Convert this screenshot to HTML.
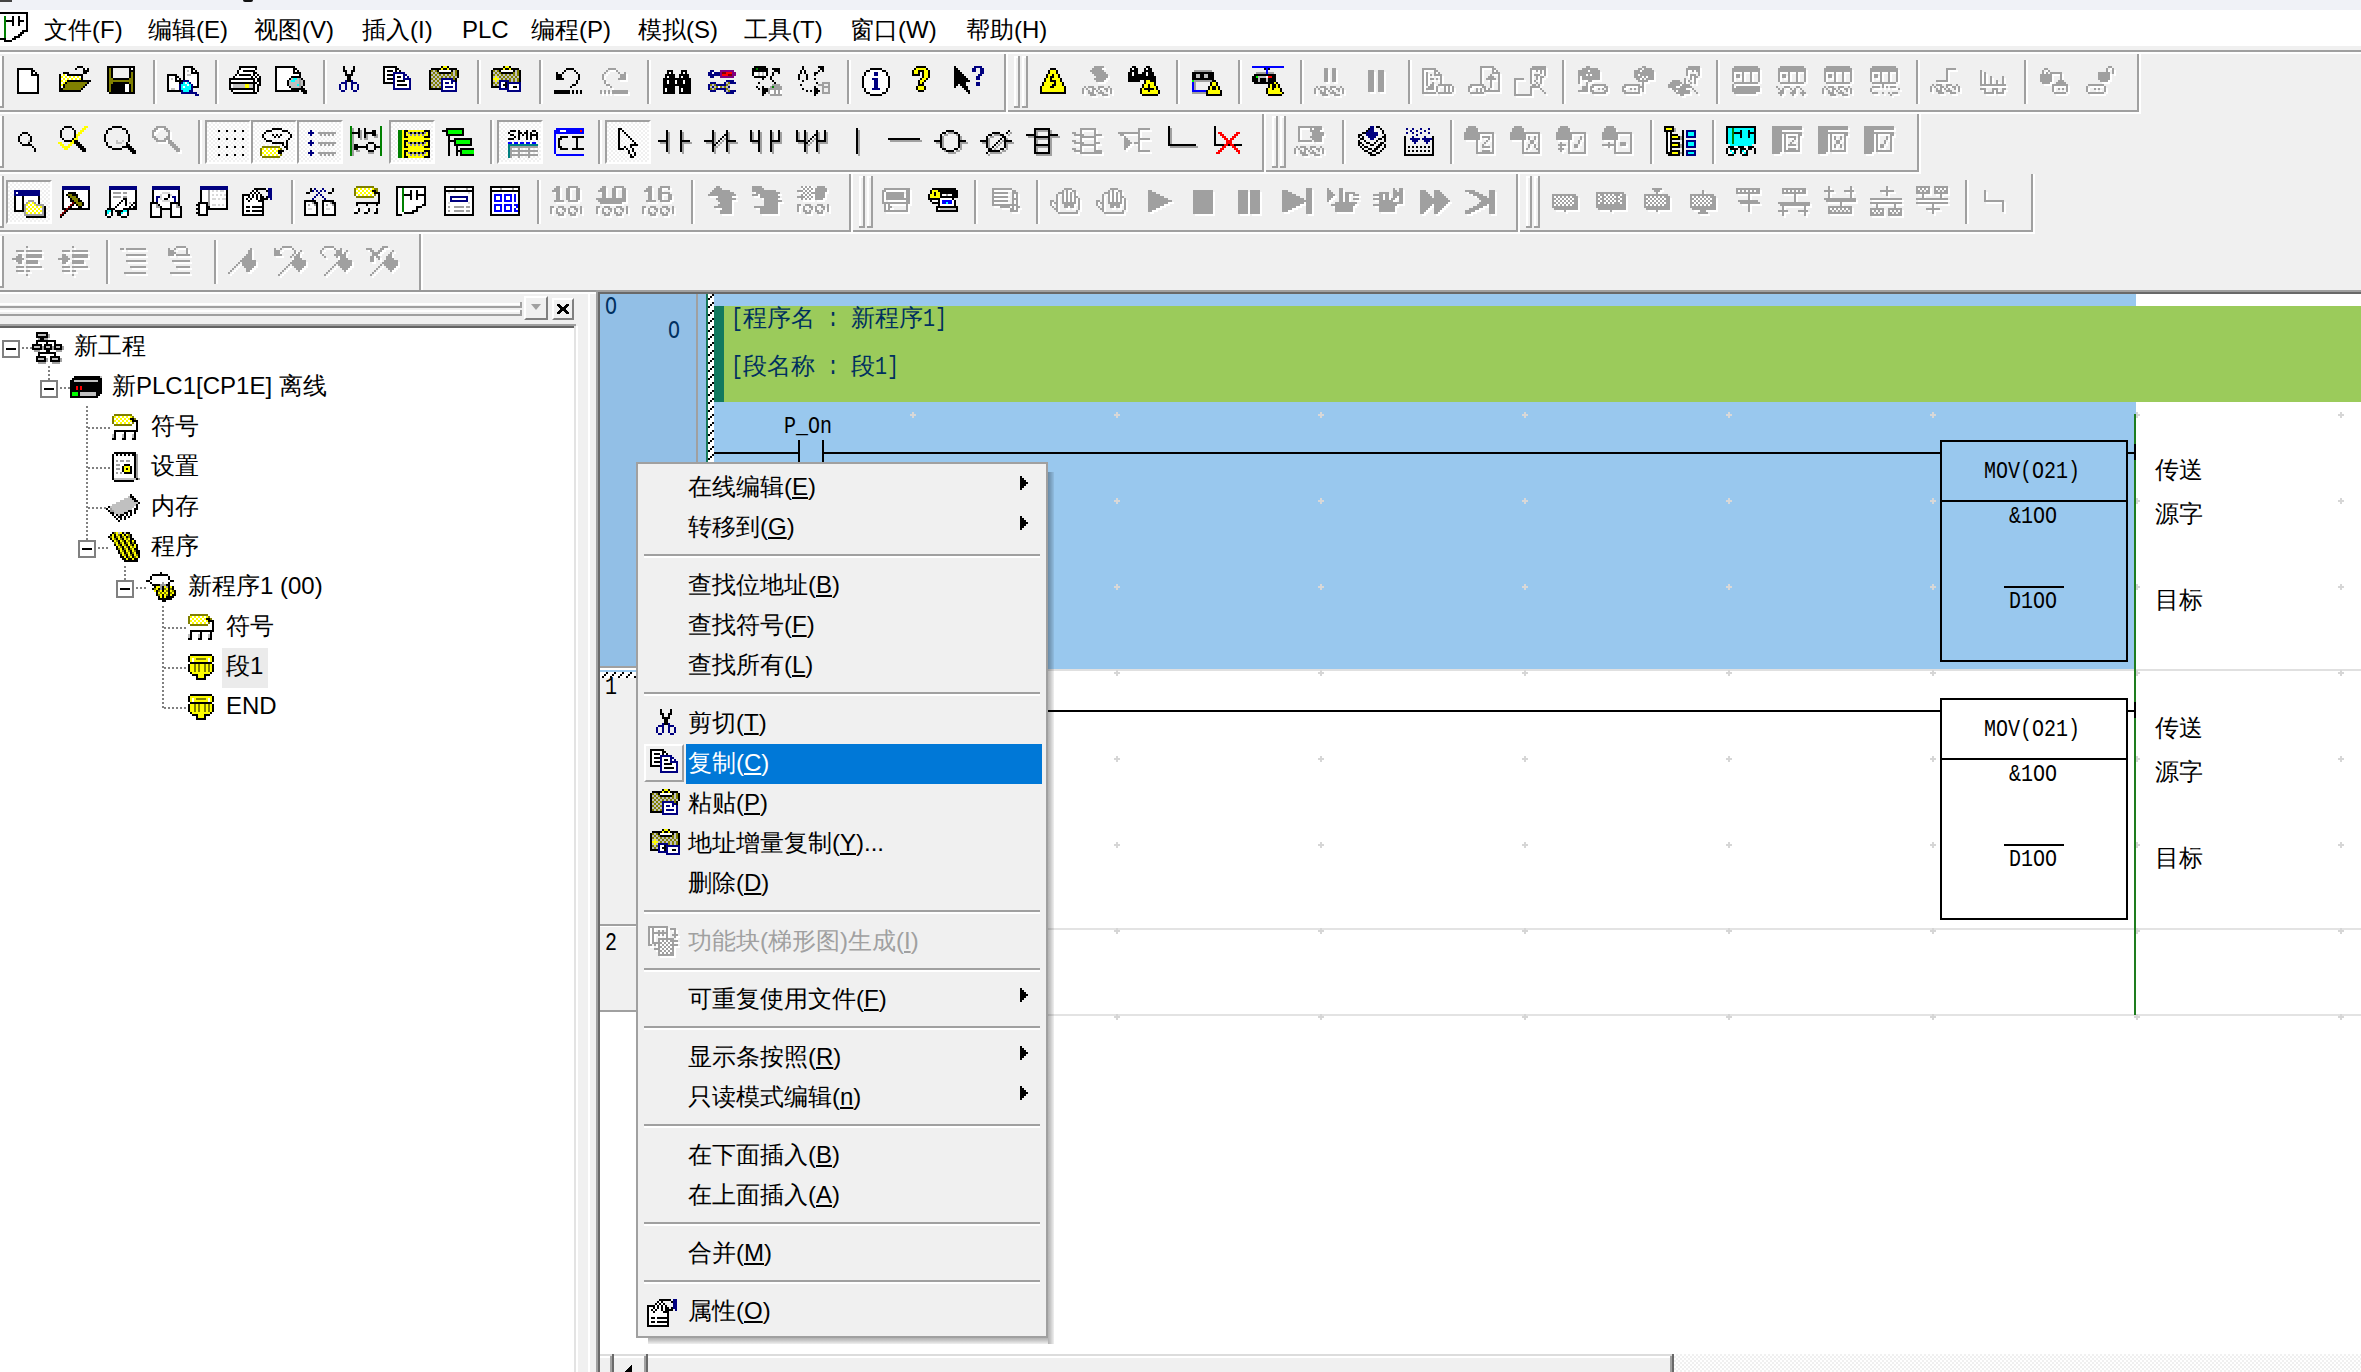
<!DOCTYPE html>
<html><head><meta charset="utf-8">
<style>
*{margin:0;padding:0;box-sizing:border-box}
html,body{width:2361px;height:1372px;overflow:hidden;background:#f0f0f0;font-family:"Liberation Sans",sans-serif;font-size:24px;color:#000}
.a{position:absolute}
.t{position:absolute;white-space:nowrap;line-height:28px}
.m{position:absolute;white-space:nowrap;font-family:"Liberation Mono",monospace}
svg{overflow:visible}
</style></head><body>
<div class="a" style="left:0px;top:0px;width:2361px;height:10px;background:#f0f2f7;"></div>
<div class="a" style="left:0px;top:0px;width:12px;height:2px;background:#444;"></div>
<div class="a" style="left:243px;top:0px;width:10px;height:2px;background:#111;border-radius:0 0 5px 5px"></div>
<div class="a" style="left:0px;top:10px;width:2361px;height:36px;background:#fff;"></div>
<div class="a" style="left:0px;top:50px;width:2361px;height:2px;background:#a0a0a0;"></div>
<div class="a" style="left:0px;top:52px;width:2361px;height:2px;background:#fff;"></div>
<span class="t" style="left:44px;top:16px;">文件(F)</span>
<span class="t" style="left:148px;top:16px;">编辑(E)</span>
<span class="t" style="left:254px;top:16px;">视图(V)</span>
<span class="t" style="left:362px;top:16px;">插入(I)</span>
<span class="t" style="left:462px;top:16px;">PLC</span>
<span class="t" style="left:531px;top:16px;">编程(P)</span>
<span class="t" style="left:638px;top:16px;">模拟(S)</span>
<span class="t" style="left:744px;top:16px;">工具(T)</span>
<span class="t" style="left:850px;top:16px;">窗口(W)</span>
<span class="t" style="left:966px;top:16px;">帮助(H)</span>
<div id="appicon"></div>
<svg class="a" style="left:0px;top:12px" width="32" height="32" viewBox="0 0 16 16" shape-rendering="crispEdges"><path fill="#000" d="M0 0h14v1h-14zM13 1h1v1h-1zM6 2h1v1h-1zM9 2h1v1h-1zM13 2h1v1h-1zM6 3h1v1h-1zM9 3h1v1h-1zM13 3h1v1h-1zM3 4h4v1h-4zM9 4h3v1h-3zM13 4h1v1h-1zM6 5h1v1h-1zM9 5h1v1h-1zM13 5h1v1h-1zM6 6h1v1h-1zM9 6h1v1h-1zM13 6h1v1h-1zM13 7h1v1h-1zM13 8h1v1h-1zM11 9h3v1h-3zM10 10h2v1h-2zM9 11h2v1h-2zM7 12h3v1h-3zM0 13h3v1h-3zM6 13h2v1h-2zM2 14h4v1h-4z"/><path fill="#fff" d="M0 1h13v1h-13zM0 2h2v1h-2zM3 2h3v1h-3zM7 2h2v1h-2zM10 2h3v1h-3zM0 3h2v1h-2zM3 3h3v1h-3zM7 3h2v1h-2zM10 3h3v1h-3zM0 4h2v1h-2zM7 4h2v1h-2zM12 4h1v1h-1zM0 5h2v1h-2zM3 5h3v1h-3zM7 5h2v1h-2zM10 5h3v1h-3zM0 6h2v1h-2zM3 6h3v1h-3zM7 6h2v1h-2zM10 6h3v1h-3zM0 7h2v1h-2zM3 7h10v1h-10zM0 8h2v1h-2zM3 8h10v1h-10zM0 9h2v1h-2zM3 9h8v1h-8zM0 10h2v1h-2zM3 10h7v1h-7zM0 11h2v1h-2zM3 11h6v1h-6zM0 12h2v1h-2zM3 12h4v1h-4zM3 13h3v1h-3z"/><path fill="#008000" d="M2 2h1v1h-1zM2 3h1v1h-1zM2 4h1v1h-1zM2 5h1v1h-1zM2 6h1v1h-1zM2 7h1v1h-1zM2 8h1v1h-1zM2 9h1v1h-1zM2 10h1v1h-1zM2 11h1v1h-1zM2 12h1v1h-1z"/></svg>
<div class="a" style="left:0px;top:56px;width:2px;height:52px;background:#fff;"></div>
<div class="a" style="left:2px;top:56px;width:2px;height:52px;background:#a0a0a0;"></div>
<div class="a" style="left:0px;top:106px;width:4px;height:2px;background:#a0a0a0;"></div>
<div class="a" style="left:0px;top:110px;width:1006px;height:2px;background:#a0a0a0;"></div>
<div class="a" style="left:0px;top:112px;width:1008px;height:2px;background:#fff;"></div>
<div class="a" style="left:1004px;top:54px;width:2px;height:58px;background:#a0a0a0;"></div>
<div class="a" style="left:1006px;top:54px;width:2px;height:58px;background:#fff;"></div>
<svg class="a" style="left:13px;top:64px" width="32" height="32" viewBox="0 0 16 16" shape-rendering="crispEdges"><path fill="#000" d="M2 2h8v1h-8zM2 3h1v1h-1zM9 3h2v1h-2zM2 4h1v1h-1zM9 4h1v1h-1zM11 4h1v1h-1zM2 5h1v1h-1zM9 5h4v1h-4zM2 6h1v1h-1zM12 6h1v1h-1zM2 7h1v1h-1zM12 7h1v1h-1zM2 8h1v1h-1zM12 8h1v1h-1zM2 9h1v1h-1zM12 9h1v1h-1zM2 10h1v1h-1zM12 10h1v1h-1zM2 11h1v1h-1zM12 11h1v1h-1zM2 12h1v1h-1zM12 12h1v1h-1zM2 13h1v1h-1zM12 13h1v1h-1zM2 14h11v1h-11z"/><path fill="#fff" d="M3 3h6v1h-6zM3 4h6v1h-6zM10 4h1v1h-1zM3 5h6v1h-6zM3 6h9v1h-9zM3 7h9v1h-9zM3 8h9v1h-9zM3 9h9v1h-9zM3 10h9v1h-9zM3 11h9v1h-9zM3 12h9v1h-9zM3 13h9v1h-9z"/></svg>
<svg class="a" style="left:59px;top:64px" width="32" height="32" viewBox="0 0 16 16" shape-rendering="crispEdges"><path fill="#000" d="M9 1h3v1h-3zM8 2h1v1h-1zM12 2h1v1h-1zM14 2h1v1h-1zM12 3h3v1h-3zM2 4h3v1h-3zM12 4h2v1h-2zM0 5h1v1h-1zM4 5h8v1h-8zM0 6h1v1h-1zM11 6h1v1h-1zM0 7h1v1h-1zM11 7h1v1h-1zM0 8h1v1h-1zM4 8h12v1h-12zM0 9h1v1h-1zM3 9h1v1h-1zM14 9h1v1h-1zM0 10h1v1h-1zM2 10h1v1h-1zM13 10h1v1h-1zM0 11h1v1h-1zM2 11h1v1h-1zM12 11h1v1h-1zM0 12h2v1h-2zM11 12h1v1h-1zM0 13h11v1h-11z"/><path fill="#fff" d="M13 2h1v1h-1zM1 5h1v1h-1zM3 5h1v1h-1zM2 6h1v1h-1zM4 6h1v1h-1zM6 6h1v1h-1zM8 6h1v1h-1zM10 6h1v1h-1zM1 7h1v1h-1zM3 7h1v1h-1zM5 7h1v1h-1zM7 7h1v1h-1zM9 7h1v1h-1zM2 8h1v1h-1zM1 9h1v1h-1zM1 11h1v1h-1z"/><path fill="#ff0" d="M2 5h1v1h-1zM1 6h1v1h-1zM3 6h1v1h-1zM5 6h1v1h-1zM7 6h1v1h-1zM9 6h1v1h-1zM2 7h1v1h-1zM4 7h1v1h-1zM6 7h1v1h-1zM8 7h1v1h-1zM10 7h1v1h-1zM1 8h1v1h-1zM3 8h1v1h-1zM2 9h1v1h-1zM1 10h1v1h-1z"/><path fill="#808000" d="M4 9h10v1h-10zM3 10h10v1h-10zM3 11h9v1h-9zM2 12h9v1h-9z"/></svg>
<svg class="a" style="left:105px;top:64px" width="32" height="32" viewBox="0 0 16 16" shape-rendering="crispEdges"><path fill="#000" d="M1 1h14v1h-14zM1 2h1v1h-1zM3 2h1v1h-1zM12 2h1v1h-1zM14 2h1v1h-1zM1 3h1v1h-1zM3 3h1v1h-1zM12 3h3v1h-3zM1 4h1v1h-1zM3 4h1v1h-1zM12 4h1v1h-1zM14 4h1v1h-1zM1 5h1v1h-1zM3 5h1v1h-1zM12 5h1v1h-1zM14 5h1v1h-1zM1 6h1v1h-1zM3 6h1v1h-1zM12 6h1v1h-1zM14 6h1v1h-1zM1 7h1v1h-1zM4 7h8v1h-8zM14 7h1v1h-1zM1 8h1v1h-1zM14 8h1v1h-1zM1 9h1v1h-1zM4 9h8v1h-8zM14 9h1v1h-1zM1 10h1v1h-1zM3 10h7v1h-7zM12 10h1v1h-1zM14 10h1v1h-1zM1 11h1v1h-1zM3 11h7v1h-7zM12 11h1v1h-1zM14 11h1v1h-1zM1 12h1v1h-1zM3 12h7v1h-7zM12 12h1v1h-1zM14 12h1v1h-1zM1 13h1v1h-1zM3 13h7v1h-7zM12 13h1v1h-1zM14 13h1v1h-1zM2 14h13v1h-13z"/><path fill="#808000" d="M2 2h1v1h-1zM2 3h1v1h-1zM2 4h1v1h-1zM13 4h1v1h-1zM2 5h1v1h-1zM13 5h1v1h-1zM2 6h1v1h-1zM13 6h1v1h-1zM2 7h2v1h-2zM12 7h2v1h-2zM2 8h12v1h-12zM2 9h2v1h-2zM12 9h2v1h-2zM2 10h1v1h-1zM13 10h1v1h-1zM2 11h1v1h-1zM13 11h1v1h-1zM2 12h1v1h-1zM13 12h1v1h-1zM2 13h1v1h-1zM13 13h1v1h-1z"/><path fill="#f0f0f0" d="M4 2h8v1h-8zM4 3h8v1h-8zM4 4h8v1h-8zM4 5h8v1h-8zM4 6h8v1h-8z"/><path fill="#fff" d="M13 2h1v1h-1zM10 10h2v1h-2zM10 11h2v1h-2zM10 12h2v1h-2zM10 13h2v1h-2z"/></svg>
<div class="a" style="left:153px;top:60px;width:2px;height:44px;background:#a0a0a0;"></div>
<div class="a" style="left:155px;top:60px;width:2px;height:44px;background:#fff;"></div>
<svg class="a" style="left:167px;top:64px" width="32" height="32" viewBox="0 0 16 16" shape-rendering="crispEdges"><path fill="#000" d="M8 1h5v1h-5zM8 2h1v1h-1zM12 2h2v1h-2zM8 3h1v1h-1zM12 3h1v1h-1zM14 3h1v1h-1zM8 4h1v1h-1zM12 4h4v1h-4zM0 5h5v1h-5zM8 5h1v1h-1zM15 5h1v1h-1zM0 6h1v1h-1zM4 6h2v1h-2zM8 6h1v1h-1zM15 6h1v1h-1zM0 7h1v1h-1zM4 7h1v1h-1zM6 7h1v1h-1zM8 7h1v1h-1zM15 7h1v1h-1zM0 8h1v1h-1zM4 8h4v1h-4zM15 8h1v1h-1zM0 9h1v1h-1zM6 9h1v1h-1zM15 9h1v1h-1zM0 10h1v1h-1zM15 10h1v1h-1zM0 11h1v1h-1zM13 11h3v1h-3zM0 12h1v1h-1zM0 13h7v1h-7z"/><path fill="#fff" d="M9 2h3v1h-3zM9 3h1v1h-1zM11 3h1v1h-1zM13 3h1v1h-1zM9 4h3v1h-3zM9 5h1v1h-1zM12 5h3v1h-3zM1 6h3v1h-3zM9 6h6v1h-6zM1 7h1v1h-1zM3 7h1v1h-1zM5 7h1v1h-1zM9 7h6v1h-6zM1 8h3v1h-3zM11 8h4v1h-4zM1 9h5v1h-5zM9 9h1v1h-1zM12 9h3v1h-3zM1 10h5v1h-5zM10 10h1v1h-1zM13 10h2v1h-2zM1 11h5v1h-5zM8 11h1v1h-1zM1 12h1v1h-1zM4 12h2v1h-2z"/><path fill="#c0c0c0" d="M10 3h1v1h-1zM10 5h2v1h-2zM2 7h1v1h-1zM2 12h2v1h-2z"/><path fill="#000080" d="M8 8h3v1h-3zM7 9h1v1h-1zM11 9h1v1h-1zM6 10h1v1h-1zM12 10h1v1h-1zM6 11h1v1h-1zM12 11h1v1h-1zM6 12h1v1h-1zM12 12h1v1h-1zM7 13h1v1h-1zM11 13h2v1h-2zM7 14h8v1h-8zM14 15h2v1h-2z"/><path fill="#0ff" d="M8 9h1v1h-1zM10 9h1v1h-1zM7 10h3v1h-3zM11 10h1v1h-1zM7 11h1v1h-1zM9 11h3v1h-3zM7 12h5v1h-5zM8 13h3v1h-3z"/></svg>
<div class="a" style="left:215px;top:60px;width:2px;height:44px;background:#a0a0a0;"></div>
<div class="a" style="left:217px;top:60px;width:2px;height:44px;background:#fff;"></div>
<svg class="a" style="left:229px;top:64px" width="32" height="32" viewBox="0 0 16 16" shape-rendering="crispEdges"><path fill="#000" d="M5 1h9v1h-9zM5 2h1v1h-1zM13 2h1v1h-1zM4 3h1v1h-1zM7 3h6v1h-6zM4 4h1v1h-1zM12 4h2v1h-2zM3 5h1v1h-1zM5 5h6v1h-6zM12 5h1v1h-1zM14 5h1v1h-1zM2 6h1v1h-1zM11 6h1v1h-1zM13 6h1v1h-1zM15 6h1v1h-1zM0 7h13v1h-13zM14 7h2v1h-2zM0 8h1v1h-1zM12 8h1v1h-1zM14 8h2v1h-2zM0 9h14v1h-14zM15 9h1v1h-1zM0 10h1v1h-1zM12 10h1v1h-1zM14 10h2v1h-2zM0 11h1v1h-1zM12 11h1v1h-1zM14 11h1v1h-1zM0 12h13v1h-13zM14 12h1v1h-1zM1 13h1v1h-1zM12 13h1v1h-1zM14 13h1v1h-1zM2 14h12v1h-12z"/><path fill="#fff" d="M6 2h7v1h-7zM5 3h2v1h-2zM5 4h7v1h-7zM4 5h1v1h-1zM11 5h1v1h-1zM13 5h1v1h-1zM3 6h8v1h-8zM12 6h1v1h-1zM14 6h1v1h-1zM13 7h1v1h-1zM1 8h11v1h-11zM13 8h1v1h-1zM14 9h1v1h-1zM1 10h1v1h-1zM13 10h1v1h-1zM1 11h1v1h-1zM13 11h1v1h-1zM13 12h1v1h-1zM2 13h10v1h-10zM13 13h1v1h-1z"/><path fill="#c0c0c0" d="M2 10h6v1h-6zM10 10h2v1h-2zM2 11h6v1h-6zM10 11h2v1h-2z"/><path fill="#ff0" d="M8 10h2v1h-2zM8 11h2v1h-2z"/></svg>
<svg class="a" style="left:275px;top:64px" width="32" height="32" viewBox="0 0 16 16" shape-rendering="crispEdges"><path fill="#000" d="M0 1h10v1h-10zM0 2h1v1h-1zM9 2h2v1h-2zM0 3h1v1h-1zM9 3h1v1h-1zM11 3h1v1h-1zM0 4h1v1h-1zM9 4h4v1h-4zM0 5h1v1h-1zM12 5h1v1h-1zM0 6h1v1h-1zM8 6h5v1h-5zM0 7h1v1h-1zM7 7h1v1h-1zM13 7h1v1h-1zM0 8h1v1h-1zM6 8h1v1h-1zM14 8h1v1h-1zM0 9h1v1h-1zM6 9h1v1h-1zM14 9h1v1h-1zM0 10h1v1h-1zM6 10h1v1h-1zM14 10h1v1h-1zM0 11h1v1h-1zM7 11h1v1h-1zM13 11h1v1h-1zM0 12h1v1h-1zM8 12h7v1h-7zM0 13h12v1h-12zM13 13h3v1h-3zM14 14h2v1h-2z"/><path fill="#fff" d="M1 2h8v1h-8zM1 3h8v1h-8zM10 3h1v1h-1zM1 4h8v1h-8zM1 5h11v1h-11zM1 6h7v1h-7zM1 7h6v1h-6zM1 8h5v1h-5zM1 9h5v1h-5zM1 10h5v1h-5zM1 11h6v1h-6zM1 12h7v1h-7z"/><path fill="#c0c0c0" d="M8 7h1v1h-1zM11 7h1v1h-1zM7 8h1v1h-1zM10 8h2v1h-2zM13 8h1v1h-1zM7 9h5v1h-5zM13 9h1v1h-1zM7 10h4v1h-4zM13 10h1v1h-1zM8 11h4v1h-4z"/><path fill="#0ff" d="M9 7h2v1h-2zM8 8h2v1h-2zM11 10h1v1h-1z"/><path fill="#a0a0a0" d="M12 7h1v1h-1zM12 8h1v1h-1zM12 9h1v1h-1zM12 10h1v1h-1zM12 11h1v1h-1z"/></svg>
<div class="a" style="left:323px;top:60px;width:2px;height:44px;background:#a0a0a0;"></div>
<div class="a" style="left:325px;top:60px;width:2px;height:44px;background:#fff;"></div>
<svg class="a" style="left:337px;top:64px" width="32" height="32" viewBox="0 0 16 16" shape-rendering="crispEdges"><path fill="#000" d="M3 1h1v1h-1zM8 1h1v1h-1zM3 2h1v1h-1zM8 2h1v1h-1zM3 3h2v1h-2zM7 3h2v1h-2zM4 4h1v1h-1zM7 4h1v1h-1zM4 5h4v1h-4zM5 6h2v1h-2zM5 7h2v1h-2zM5 8h2v1h-2z"/><path fill="#000080" d="M4 8h1v1h-1zM7 8h1v1h-1zM2 9h3v1h-3zM7 9h3v1h-3zM1 10h1v1h-1zM4 10h1v1h-1zM7 10h1v1h-1zM10 10h1v1h-1zM1 11h1v1h-1zM4 11h1v1h-1zM7 11h1v1h-1zM10 11h1v1h-1zM1 12h1v1h-1zM4 12h1v1h-1zM7 12h1v1h-1zM10 12h1v1h-1zM2 13h2v1h-2zM8 13h2v1h-2z"/></svg>
<svg class="a" style="left:383px;top:64px" width="32" height="32" viewBox="0 0 16 16" shape-rendering="crispEdges"><path fill="#000" d="M0 1h7v1h-7zM0 2h1v1h-1zM6 2h2v1h-2zM0 3h1v1h-1zM2 3h3v1h-3zM6 3h1v1h-1zM8 3h1v1h-1zM0 4h1v1h-1zM0 5h1v1h-1zM2 5h3v1h-3zM0 6h1v1h-1zM7 6h2v1h-2zM0 7h1v1h-1zM2 7h3v1h-3zM0 8h1v1h-1zM7 8h4v1h-4zM0 9h5v1h-5zM7 10h5v1h-5z"/><path fill="#fff" d="M1 2h5v1h-5zM1 3h1v1h-1zM5 3h1v1h-1zM7 3h1v1h-1zM1 4h4v1h-4zM1 5h1v1h-1zM6 5h4v1h-4zM1 6h4v1h-4zM6 6h1v1h-1zM9 6h1v1h-1zM11 6h1v1h-1zM1 7h1v1h-1zM6 7h4v1h-4zM1 8h4v1h-4zM6 8h1v1h-1zM11 8h2v1h-2zM6 9h7v1h-7zM6 10h1v1h-1zM12 10h1v1h-1zM6 11h7v1h-7z"/><path fill="#000080" d="M5 4h6v1h-6zM5 5h1v1h-1zM10 5h2v1h-2zM5 6h1v1h-1zM10 6h1v1h-1zM12 6h1v1h-1zM5 7h1v1h-1zM10 7h4v1h-4zM5 8h1v1h-1zM13 8h1v1h-1zM5 9h1v1h-1zM13 9h1v1h-1zM5 10h1v1h-1zM13 10h1v1h-1zM5 11h1v1h-1zM13 11h1v1h-1zM5 12h9v1h-9z"/></svg>
<svg class="a" style="left:429px;top:64px" width="32" height="32" viewBox="0 0 16 16" shape-rendering="crispEdges"><path fill="#000" d="M6 1h1v1h-1zM9 1h1v1h-1zM1 2h5v1h-5zM7 2h2v1h-2zM10 2h4v1h-4zM0 3h1v1h-1zM4 3h1v1h-1zM11 3h1v1h-1zM14 3h1v1h-1zM0 4h1v1h-1zM5 4h6v1h-6zM14 4h1v1h-1zM0 5h1v1h-1zM14 5h1v1h-1zM0 6h1v1h-1zM14 6h1v1h-1zM0 7h1v1h-1zM13 7h1v1h-1zM0 8h1v1h-1zM13 8h1v1h-1zM0 9h1v1h-1zM0 10h1v1h-1zM0 11h1v1h-1zM0 12h6v1h-6z"/><path fill="#ff0" d="M7 1h2v1h-2zM6 2h1v1h-1zM9 2h1v1h-1z"/><path fill="#808000" d="M1 3h1v1h-1zM3 3h1v1h-1zM13 3h1v1h-1zM2 4h1v1h-1zM4 4h1v1h-1zM11 4h1v1h-1zM13 4h1v1h-1zM1 5h1v1h-1zM3 5h1v1h-1zM5 5h1v1h-1zM7 5h1v1h-1zM9 5h1v1h-1zM11 5h1v1h-1zM13 5h1v1h-1zM2 6h1v1h-1zM4 6h1v1h-1zM6 6h1v1h-1zM8 6h1v1h-1zM10 6h1v1h-1zM12 6h1v1h-1zM1 7h1v1h-1zM3 7h1v1h-1zM5 7h1v1h-1zM12 7h1v1h-1zM2 8h1v1h-1zM4 8h1v1h-1zM1 9h1v1h-1zM3 9h1v1h-1zM5 9h1v1h-1zM2 10h1v1h-1zM4 10h1v1h-1zM1 11h1v1h-1zM3 11h1v1h-1zM5 11h1v1h-1z"/><path fill="#c0c0c0" d="M2 3h1v1h-1zM12 3h1v1h-1zM1 4h1v1h-1zM3 4h1v1h-1zM12 4h1v1h-1zM2 5h1v1h-1zM4 5h1v1h-1zM6 5h1v1h-1zM8 5h1v1h-1zM10 5h1v1h-1zM12 5h1v1h-1zM1 6h1v1h-1zM3 6h1v1h-1zM5 6h1v1h-1zM7 6h1v1h-1zM9 6h1v1h-1zM11 6h1v1h-1zM13 6h1v1h-1zM2 7h1v1h-1zM4 7h1v1h-1zM1 8h1v1h-1zM3 8h1v1h-1zM5 8h1v1h-1zM2 9h1v1h-1zM4 9h1v1h-1zM1 10h1v1h-1zM3 10h1v1h-1zM5 10h1v1h-1zM2 11h1v1h-1zM4 11h1v1h-1z"/><path fill="#fff" d="M5 3h6v1h-6zM7 8h4v1h-4zM7 9h1v1h-1zM10 9h1v1h-1zM12 9h1v1h-1zM7 10h6v1h-6zM7 11h1v1h-1zM12 11h1v1h-1zM7 12h6v1h-6z"/><path fill="#000080" d="M6 7h6v1h-6zM6 8h1v1h-1zM11 8h2v1h-2zM6 9h1v1h-1zM8 9h2v1h-2zM11 9h1v1h-1zM13 9h1v1h-1zM6 10h1v1h-1zM13 10h1v1h-1zM6 11h1v1h-1zM8 11h4v1h-4zM13 11h1v1h-1zM6 12h1v1h-1zM13 12h1v1h-1zM6 13h8v1h-8z"/></svg>
<div class="a" style="left:477px;top:60px;width:2px;height:44px;background:#a0a0a0;"></div>
<div class="a" style="left:479px;top:60px;width:2px;height:44px;background:#fff;"></div>
<svg class="a" style="left:491px;top:64px" width="32" height="32" viewBox="0 0 16 16" shape-rendering="crispEdges"><path fill="#000" d="M6 1h1v1h-1zM9 1h1v1h-1zM1 2h5v1h-5zM7 2h2v1h-2zM10 2h4v1h-4zM0 3h1v1h-1zM4 3h1v1h-1zM11 3h1v1h-1zM14 3h1v1h-1zM0 4h1v1h-1zM5 4h6v1h-6zM14 4h1v1h-1zM0 5h1v1h-1zM14 5h1v1h-1zM0 6h1v1h-1zM14 6h1v1h-1zM0 7h1v1h-1zM14 7h1v1h-1zM0 8h1v1h-1zM14 8h1v1h-1zM0 9h1v1h-1zM7 9h1v1h-1zM0 10h1v1h-1zM6 10h2v1h-2zM0 11h4v1h-4zM7 11h1v1h-1zM11 11h2v1h-2z"/><path fill="#ff0" d="M7 1h2v1h-2zM6 2h1v1h-1zM9 2h1v1h-1zM2 6h1v1h-1zM1 7h3v1h-3zM2 8h1v1h-1z"/><path fill="#808000" d="M1 3h1v1h-1zM3 3h1v1h-1zM13 3h1v1h-1zM2 4h1v1h-1zM4 4h1v1h-1zM11 4h1v1h-1zM13 4h1v1h-1zM1 5h1v1h-1zM3 5h1v1h-1zM5 5h1v1h-1zM7 5h1v1h-1zM9 5h1v1h-1zM11 5h1v1h-1zM13 5h1v1h-1zM4 6h1v1h-1zM6 6h1v1h-1zM8 6h1v1h-1zM10 6h1v1h-1zM12 6h1v1h-1zM5 7h1v1h-1zM7 7h1v1h-1zM9 7h1v1h-1zM11 7h1v1h-1zM13 7h1v1h-1zM9 8h1v1h-1zM11 8h1v1h-1zM13 8h1v1h-1zM1 9h1v1h-1zM3 9h1v1h-1zM2 10h1v1h-1z"/><path fill="#c0c0c0" d="M2 3h1v1h-1zM12 3h1v1h-1zM1 4h1v1h-1zM3 4h1v1h-1zM12 4h1v1h-1zM2 5h1v1h-1zM4 5h1v1h-1zM6 5h1v1h-1zM8 5h1v1h-1zM10 5h1v1h-1zM12 5h1v1h-1zM1 6h1v1h-1zM3 6h1v1h-1zM5 6h1v1h-1zM7 6h1v1h-1zM9 6h1v1h-1zM11 6h1v1h-1zM13 6h1v1h-1zM4 7h1v1h-1zM6 7h1v1h-1zM8 7h1v1h-1zM10 7h1v1h-1zM12 7h1v1h-1zM1 8h1v1h-1zM3 8h1v1h-1zM10 8h1v1h-1zM12 8h1v1h-1zM2 9h1v1h-1zM1 10h1v1h-1zM3 10h1v1h-1z"/><path fill="#fff" d="M5 3h6v1h-6zM5 9h2v1h-2zM5 10h1v1h-1zM9 10h5v1h-5zM5 11h2v1h-2zM9 11h2v1h-2zM13 11h1v1h-1zM9 12h5v1h-5z"/><path fill="#000080" d="M4 8h5v1h-5zM4 9h1v1h-1zM8 9h7v1h-7zM4 10h1v1h-1zM8 10h1v1h-1zM14 10h1v1h-1zM4 11h1v1h-1zM8 11h1v1h-1zM14 11h1v1h-1zM4 12h5v1h-5zM14 12h1v1h-1zM8 13h7v1h-7z"/></svg>
<div class="a" style="left:539px;top:60px;width:2px;height:44px;background:#a0a0a0;"></div>
<div class="a" style="left:541px;top:60px;width:2px;height:44px;background:#fff;"></div>
<svg class="a" style="left:553px;top:64px" width="32" height="32" viewBox="0 0 16 16" shape-rendering="crispEdges"><path fill="#000" d="M6.5 2h4v1h-4zM5.5 3h1v1h-1zM10.5 3h1v1h-1zM1.5 4h1v1h-1zM4.5 4h1v1h-1zM11.5 4h1v1h-1zM1.5 5h3v1h-3zM12.5 5h1v1h-1zM1.5 6h3v1h-3zM12.5 6h1v1h-1zM1.5 7h4v1h-4zM12.5 7h1v1h-1zM11.5 8h1v1h-1zM11.5 9h1v1h-1zM9.5 10h2v1h-2zM8.5 11h1v1h-1zM0.5 13h8v1h-8zM9.5 13h1v1h-1zM11.5 13h1v1h-1zM13.5 13h1v1h-1zM0.5 14h8v1h-8zM9.5 14h1v1h-1zM11.5 14h1v1h-1zM13.5 14h1v1h-1z"/></svg>
<svg class="a" style="left:599px;top:64px" width="32" height="32" viewBox="0 0 16 16" shape-rendering="crispEdges"><path fill="#fff" d="M5.5 3h4v1h-4zM4.5 4h1v1h-1zM9.5 4h1v1h-1zM3.5 5h1v1h-1zM10.5 5h1v1h-1zM13.5 5h1v1h-1zM2.5 6h1v1h-1zM11.5 6h3v1h-3zM2.5 7h1v1h-1zM11.5 7h3v1h-3zM2.5 8h1v1h-1zM10.5 8h4v1h-4zM3.5 9h1v1h-1zM3.5 10h1v1h-1zM4.5 11h2v1h-2zM6.5 12h1v1h-1zM1.5 14h1v1h-1zM3.5 14h1v1h-1zM5.5 14h1v1h-1zM7.5 14h8v1h-8zM1.5 15h1v1h-1zM3.5 15h1v1h-1zM5.5 15h1v1h-1zM7.5 15h8v1h-8z"/><path fill="#a0a0a0" d="M4.5 2h4v1h-4zM3.5 3h1v1h-1zM8.5 3h1v1h-1zM2.5 4h1v1h-1zM9.5 4h1v1h-1zM12.5 4h1v1h-1zM1.5 5h1v1h-1zM10.5 5h3v1h-3zM1.5 6h1v1h-1zM10.5 6h3v1h-3zM1.5 7h1v1h-1zM9.5 7h4v1h-4zM2.5 8h1v1h-1zM2.5 9h1v1h-1zM3.5 10h2v1h-2zM5.5 11h1v1h-1zM0.5 13h1v1h-1zM2.5 13h1v1h-1zM4.5 13h1v1h-1zM6.5 13h8v1h-8zM0.5 14h1v1h-1zM2.5 14h1v1h-1zM4.5 14h1v1h-1zM6.5 14h8v1h-8z"/></svg>
<div class="a" style="left:647px;top:60px;width:2px;height:44px;background:#a0a0a0;"></div>
<div class="a" style="left:649px;top:60px;width:2px;height:44px;background:#fff;"></div>
<svg class="a" style="left:661px;top:64px" width="32" height="32" viewBox="0 0 16 16" shape-rendering="crispEdges"><path fill="#000" d="M3 3h3v1h-3zM10 3h3v1h-3zM3 4h1v1h-1zM5 4h1v1h-1zM10 4h1v1h-1zM12 4h1v1h-1zM2 5h5v1h-5zM9 5h5v1h-5zM2 6h1v1h-1zM4 6h3v1h-3zM9 6h1v1h-1zM11 6h3v1h-3zM1 7h14v1h-14zM1 8h2v1h-2zM4 8h3v1h-3zM8 8h3v1h-3zM12 8h3v1h-3zM1 9h2v1h-2zM4 9h3v1h-3zM8 9h3v1h-3zM12 9h3v1h-3zM1 10h14v1h-14zM1 11h6v1h-6zM9 11h6v1h-6zM1 12h1v1h-1zM3 12h4v1h-4zM9 12h1v1h-1zM11 12h4v1h-4zM1 13h1v1h-1zM3 13h4v1h-4zM9 13h1v1h-1zM11 13h4v1h-4zM1 14h6v1h-6zM9 14h6v1h-6z"/><path fill="#fff" d="M4 4h1v1h-1zM11 4h1v1h-1zM3 6h1v1h-1zM10 6h1v1h-1zM3 8h1v1h-1zM7 8h1v1h-1zM11 8h1v1h-1zM3 9h1v1h-1zM7 9h1v1h-1zM11 9h1v1h-1zM2 12h1v1h-1zM10 12h1v1h-1zM2 13h1v1h-1zM10 13h1v1h-1z"/></svg>
<svg class="a" style="left:707px;top:64px" width="32" height="32" viewBox="0 0 16 16" shape-rendering="crispEdges"><path fill="#000080" d="M1.5 3h2v1h-2zM0.5 4h2v1h-2zM3.5 4h3v1h-3zM0.5 5h6v1h-6zM1.5 6h2v1h-2zM9.5 8h4v1h-4zM1.5 9h3v1h-3zM8.5 9h1v1h-1zM11.5 9h3v1h-3zM0.5 10h1v1h-1zM4.5 10h5v1h-5zM0.5 11h1v1h-1zM2.5 11h1v1h-1zM10.5 11h1v1h-1zM0.5 12h1v1h-1zM4.5 12h5v1h-5zM1.5 13h3v1h-3zM8.5 13h1v1h-1zM11.5 13h3v1h-3zM9.5 14h4v1h-4z"/><path fill="#800080" d="M6.5 3h7v1h-7zM6.5 4h1v1h-1zM12.5 4h2v1h-2zM6.5 5h1v1h-1zM12.5 5h2v1h-2zM6.5 6h7v1h-7z"/><path fill="#fff" d="M2.5 4h1v1h-1zM5.5 11h1v1h-1z"/><path fill="#800000" d="M7.5 4h2v1h-2zM10.5 5h2v1h-2z"/><path fill="#f00" d="M9.5 4h3v1h-3zM7.5 5h3v1h-3z"/><path fill="#c0c0c0" d="M9.5 9h1v1h-1zM2.5 10h1v1h-1zM10.5 10h1v1h-1zM1.5 11h1v1h-1zM3.5 11h1v1h-1zM7.5 11h1v1h-1zM9.5 11h1v1h-1zM2.5 12h1v1h-1zM10.5 12h1v1h-1zM9.5 13h1v1h-1z"/><path fill="#808000" d="M10.5 9h1v1h-1zM1.5 10h1v1h-1zM3.5 10h1v1h-1zM9.5 10h1v1h-1zM4.5 11h1v1h-1zM6.5 11h1v1h-1zM8.5 11h1v1h-1zM1.5 12h1v1h-1zM3.5 12h1v1h-1zM9.5 12h1v1h-1zM10.5 13h1v1h-1z"/></svg>
<svg class="a" style="left:753px;top:64px" width="32" height="32" viewBox="0 0 16 16" shape-rendering="crispEdges"><path fill="#000" d="M0.5 1h6v1h-6zM-0.5 2h2v1h-2zM2.5 2h5v1h-5zM9.5 2h4v1h-4zM-0.5 3h8v1h-8zM10.5 3h3v1h-3zM-0.5 4h1v1h-1zM6.5 4h1v1h-1zM9.5 4h1v1h-1zM12.5 4h1v1h-1zM-0.5 5h1v1h-1zM6.5 5h1v1h-1zM9.5 5h1v1h-1zM0.5 6h6v1h-6zM8.5 6h1v1h-1zM4.5 7h1v1h-1zM8.5 7h1v1h-1zM9.5 8h1v1h-1zM2.5 9h1v1h-1zM10.5 9h1v1h-1zM1.5 11h1v1h-1zM4.5 11h1v1h-1zM2.5 12h1v1h-1zM4.5 12h3v1h-3zM4.5 13h3v1h-3zM4.5 14h2v1h-2zM4.5 15h1v1h-1z"/><path fill="#008000" d="M1.5 2h1v1h-1zM9.5 11h1v1h-1z"/><path fill="#fff" d="M0.5 4h2v1h-2zM3.5 4h1v1h-1zM5.5 4h1v1h-1zM0.5 5h2v1h-2zM3.5 5h1v1h-1zM5.5 5h1v1h-1zM8.5 13h2v1h-2zM11.5 13h1v1h-1zM13.5 13h1v1h-1zM8.5 14h2v1h-2zM11.5 14h1v1h-1zM13.5 14h1v1h-1z"/><path fill="#c0c0c0" d="M2.5 4h1v1h-1zM4.5 4h1v1h-1zM2.5 5h1v1h-1zM4.5 5h1v1h-1z"/><path fill="#a0a0a0" d="M9.5 10h4v1h-4zM8.5 11h1v1h-1zM10.5 11h4v1h-4zM7.5 12h7v1h-7zM7.5 13h1v1h-1zM10.5 13h1v1h-1zM12.5 13h1v1h-1zM7.5 14h1v1h-1zM10.5 14h1v1h-1zM12.5 14h1v1h-1zM8.5 15h6v1h-6z"/></svg>
<svg class="a" style="left:799px;top:64px" width="32" height="32" viewBox="0 0 16 16" shape-rendering="crispEdges"><path fill="#000" d="M1.5 1h1v1h-1zM9.5 1h3v1h-3zM1.5 2h1v1h-1zM10.5 2h2v1h-2zM0.5 3h1v1h-1zM2.5 3h1v1h-1zM9.5 3h1v1h-1zM11.5 3h1v1h-1zM0.5 4h1v1h-1zM2.5 4h1v1h-1zM7.5 4h2v1h-2zM-0.5 5h1v1h-1zM3.5 5h1v1h-1zM7.5 5h1v1h-1zM-0.5 6h1v1h-1zM3.5 6h1v1h-1zM-0.5 7h1v1h-1zM3.5 7h1v1h-1zM7.5 7h1v1h-1zM1.5 8h1v1h-1zM8.5 9h1v1h-1zM0.5 10h1v1h-1zM7.5 11h1v1h-1zM1.5 12h1v1h-1zM7.5 12h2v1h-2zM3.5 13h1v1h-1zM5.5 13h1v1h-1zM7.5 13h3v1h-3zM7.5 14h2v1h-2zM7.5 15h1v1h-1z"/><path fill="#fff" d="M1.5 3h1v1h-1z"/><path fill="#a0a0a0" d="M11.5 9h4v1h-4zM9.5 10h3v1h-3zM14.5 10h1v1h-1zM11.5 11h4v1h-4zM11.5 12h1v1h-1zM14.5 12h1v1h-1zM11.5 13h1v1h-1zM14.5 13h1v1h-1zM11.5 14h4v1h-4z"/></svg>
<div class="a" style="left:847px;top:60px;width:2px;height:44px;background:#a0a0a0;"></div>
<div class="a" style="left:849px;top:60px;width:2px;height:44px;background:#fff;"></div>
<svg class="a" style="left:861px;top:64px" width="32" height="32" viewBox="0 0 16 16" shape-rendering="crispEdges"><path fill="#000" d="M4.5 2h6v1h-6zM2.5 3h2v1h-2zM10.5 3h2v1h-2zM1.5 4h1v1h-1zM12.5 4h1v1h-1zM1.5 5h1v1h-1zM12.5 5h1v1h-1zM0.5 6h1v1h-1zM13.5 6h1v1h-1zM0.5 7h1v1h-1zM13.5 7h1v1h-1zM0.5 8h1v1h-1zM13.5 8h1v1h-1zM0.5 9h1v1h-1zM13.5 9h1v1h-1zM0.5 10h1v1h-1zM13.5 10h1v1h-1zM0.5 11h1v1h-1zM13.5 11h1v1h-1zM1.5 12h1v1h-1zM12.5 12h1v1h-1zM1.5 13h1v1h-1zM12.5 13h1v1h-1zM2.5 14h2v1h-2zM10.5 14h2v1h-2zM4.5 15h6v1h-6z"/><path fill="#fff" d="M4.5 3h6v1h-6zM2.5 4h4v1h-4zM8.5 4h4v1h-4zM2.5 5h4v1h-4zM8.5 5h4v1h-4zM1.5 6h12v1h-12zM1.5 7h4v1h-4zM8.5 7h5v1h-5zM1.5 8h5v1h-5zM8.5 8h5v1h-5zM1.5 9h5v1h-5zM8.5 9h5v1h-5zM1.5 10h5v1h-5zM8.5 10h5v1h-5zM1.5 11h5v1h-5zM8.5 11h5v1h-5zM2.5 12h3v1h-3zM9.5 12h3v1h-3zM2.5 13h10v1h-10zM4.5 14h6v1h-6z"/><path fill="#000080" d="M6.5 4h2v1h-2zM6.5 5h2v1h-2zM5.5 7h3v1h-3zM6.5 8h2v1h-2zM6.5 9h2v1h-2zM6.5 10h2v1h-2zM6.5 11h2v1h-2zM5.5 12h4v1h-4z"/></svg>
<svg class="a" style="left:907px;top:64px" width="32" height="32" viewBox="0 0 16 16" shape-rendering="crispEdges"><path fill="#000" d="M4.5 1h5v1h-5zM3.5 2h1v1h-1zM9.5 2h1v1h-1zM2.5 3h1v1h-1zM5.5 3h3v1h-3zM10.5 3h1v1h-1zM2.5 4h1v1h-1zM5.5 4h1v1h-1zM7.5 4h1v1h-1zM10.5 4h1v1h-1zM2.5 5h4v1h-4zM7.5 5h1v1h-1zM10.5 5h1v1h-1zM7.5 6h1v1h-1zM10.5 6h1v1h-1zM6.5 7h1v1h-1zM9.5 7h1v1h-1zM5.5 8h1v1h-1zM8.5 8h1v1h-1zM5.5 9h1v1h-1zM7.5 9h1v1h-1zM5.5 10h3v1h-3zM4.5 11h1v1h-1zM8.5 11h1v1h-1zM4.5 12h1v1h-1zM8.5 12h1v1h-1zM5.5 13h3v1h-3z"/><path fill="#ff0" d="M4.5 2h5v1h-5zM3.5 3h2v1h-2zM8.5 3h2v1h-2zM3.5 4h2v1h-2zM8.5 4h2v1h-2zM8.5 5h2v1h-2zM8.5 6h2v1h-2zM7.5 7h2v1h-2zM6.5 8h2v1h-2zM6.5 9h1v1h-1zM5.5 11h3v1h-3zM5.5 12h3v1h-3z"/></svg>
<svg class="a" style="left:953px;top:64px" width="32" height="32" viewBox="0 0 16 16" shape-rendering="crispEdges"><path fill="#000" d="M0.5 1h1v1h-1zM0.5 2h2v1h-2zM0.5 3h3v1h-3zM0.5 4h4v1h-4zM0.5 5h5v1h-5zM0.5 6h6v1h-6zM0.5 7h7v1h-7zM0.5 8h8v1h-8zM0.5 9h6v1h-6zM0.5 10h2v1h-2zM3.5 10h3v1h-3zM0.5 11h1v1h-1zM4.5 11h3v1h-3zM5.5 12h2v1h-2zM6.5 13h2v1h-2zM7.5 14h1v1h-1z"/><path fill="#000080" d="M10.5 1h4v1h-4zM9.5 2h2v1h-2zM13.5 2h2v1h-2zM9.5 3h2v1h-2zM13.5 3h2v1h-2zM13.5 4h2v1h-2zM12.5 5h2v1h-2zM11.5 6h2v1h-2zM11.5 7h2v1h-2zM11.5 9h2v1h-2zM11.5 10h2v1h-2z"/></svg>
<div class="a" style="left:1014px;top:56px;width:2px;height:50px;background:#fff;"></div>
<div class="a" style="left:1018px;top:56px;width:2px;height:52px;background:#a0a0a0;"></div>
<div class="a" style="left:1014px;top:106px;width:6px;height:2px;background:#a0a0a0;"></div>
<div class="a" style="left:1014px;top:56px;width:4px;height:2px;background:#fff;"></div>
<div class="a" style="left:1022px;top:56px;width:2px;height:50px;background:#fff;"></div>
<div class="a" style="left:1026px;top:56px;width:2px;height:52px;background:#a0a0a0;"></div>
<div class="a" style="left:1022px;top:106px;width:6px;height:2px;background:#a0a0a0;"></div>
<div class="a" style="left:1022px;top:56px;width:4px;height:2px;background:#fff;"></div>
<div class="a" style="left:1008px;top:110px;width:1131px;height:2px;background:#a0a0a0;"></div>
<div class="a" style="left:1008px;top:112px;width:1133px;height:2px;background:#fff;"></div>
<div class="a" style="left:2137px;top:54px;width:2px;height:58px;background:#a0a0a0;"></div>
<div class="a" style="left:2139px;top:54px;width:2px;height:58px;background:#fff;"></div>
<svg class="a" style="left:1036px;top:64px" width="32" height="32" viewBox="0 0 16 16" shape-rendering="crispEdges"><path fill="#000" d="M7 2h3v1h-3zM6 3h1v1h-1zM10 3h1v1h-1zM6 4h1v1h-1zM10 4h1v1h-1zM5 5h1v1h-1zM8 5h1v1h-1zM11 5h1v1h-1zM5 6h1v1h-1zM7 6h2v1h-2zM11 6h1v1h-1zM4 7h1v1h-1zM7 7h1v1h-1zM12 7h1v1h-1zM4 8h1v1h-1zM7 8h3v1h-3zM12 8h1v1h-1zM3 9h1v1h-1zM9 9h1v1h-1zM13 9h1v1h-1zM3 10h1v1h-1zM8 10h2v1h-2zM13 10h1v1h-1zM2 11h1v1h-1zM7 11h2v1h-2zM14 11h1v1h-1zM2 12h1v1h-1zM14 12h1v1h-1zM2 13h1v1h-1zM14 13h1v1h-1zM2 14h13v1h-13z"/><path fill="#ff0" d="M7 3h3v1h-3zM7 4h3v1h-3zM6 5h2v1h-2zM9 5h2v1h-2zM6 6h1v1h-1zM9 6h2v1h-2zM5 7h2v1h-2zM8 7h4v1h-4zM5 8h2v1h-2zM10 8h2v1h-2zM4 9h5v1h-5zM10 9h3v1h-3zM4 10h4v1h-4zM10 10h3v1h-3zM3 11h4v1h-4zM9 11h5v1h-5zM3 12h11v1h-11zM3 13h11v1h-11z"/></svg>
<svg class="a" style="left:1082px;top:64px" width="32" height="32" viewBox="0 0 16 16" shape-rendering="crispEdges"><path fill="#fff" d="M7 2h5v1h-5zM6 3h5v1h-5zM5 4h7v1h-7zM6 5h7v1h-7zM7 6h7v1h-7zM8 7h6v1h-6zM7 8h6v1h-6zM8 9h4v1h-4zM2 12h1v1h-1zM4 12h3v1h-3zM9 12h3v1h-3zM14 12h1v1h-1zM1 13h1v1h-1zM3 13h1v1h-1zM6 13h2v1h-2zM9 13h1v1h-1zM12 13h2v1h-2zM15 13h1v1h-1zM1 14h1v1h-1zM4 14h1v1h-1zM6 14h1v1h-1zM8 14h1v1h-1zM10 14h1v1h-1zM13 14h1v1h-1zM15 14h1v1h-1zM1 15h1v1h-1zM4 15h3v1h-3zM9 15h3v1h-3zM15 15h1v1h-1zM5 16h3v1h-3zM11 16h3v1h-3z"/><path fill="#a0a0a0" d="M6 1h5v1h-5zM5 2h5v1h-5zM4 3h7v1h-7zM5 4h7v1h-7zM6 5h7v1h-7zM7 6h6v1h-6zM6 7h6v1h-6zM7 8h4v1h-4zM1 11h1v1h-1zM3 11h3v1h-3zM8 11h3v1h-3zM13 11h1v1h-1zM0 12h1v1h-1zM2 12h1v1h-1zM5 12h2v1h-2zM8 12h1v1h-1zM11 12h2v1h-2zM14 12h1v1h-1zM0 13h1v1h-1zM3 13h1v1h-1zM5 13h1v1h-1zM7 13h1v1h-1zM9 13h1v1h-1zM12 13h1v1h-1zM14 13h1v1h-1zM0 14h1v1h-1zM3 14h3v1h-3zM8 14h3v1h-3zM14 14h1v1h-1zM4 15h3v1h-3zM10 15h3v1h-3z"/></svg>
<svg class="a" style="left:1128px;top:64px" width="32" height="32" viewBox="0 0 16 16" shape-rendering="crispEdges"><path fill="#000" d="M2 1h2v1h-2zM9 1h2v1h-2zM1 2h1v1h-1zM3 2h2v1h-2zM8 2h1v1h-1zM10 2h2v1h-2zM1 3h4v1h-4zM8 3h4v1h-4zM0 4h2v1h-2zM3 4h2v1h-2zM7 4h2v1h-2zM10 4h3v1h-3zM0 5h2v1h-2zM3 5h6v1h-6zM10 5h3v1h-3zM0 6h14v1h-14zM0 7h14v1h-14zM0 8h6v1h-6zM8 8h1v1h-1zM11 8h3v1h-3zM8 9h1v1h-1zM13 9h1v1h-1zM7 10h1v1h-1zM10 10h1v1h-1zM13 10h1v1h-1zM7 11h1v1h-1zM10 11h1v1h-1zM14 11h1v1h-1zM6 12h1v1h-1zM8 12h5v1h-5zM14 12h1v1h-1zM6 13h1v1h-1zM10 13h1v1h-1zM15 13h1v1h-1zM6 14h1v1h-1zM15 14h1v1h-1zM7 15h8v1h-8z"/><path fill="#fff" d="M2 2h1v1h-1zM9 2h1v1h-1zM2 4h1v1h-1zM9 4h1v1h-1zM2 5h1v1h-1zM9 5h1v1h-1z"/><path fill="#ff0" d="M9 8h2v1h-2zM9 9h4v1h-4zM8 10h2v1h-2zM11 10h2v1h-2zM8 11h2v1h-2zM11 11h3v1h-3zM7 12h1v1h-1zM13 12h1v1h-1zM7 13h3v1h-3zM11 13h4v1h-4zM7 14h8v1h-8z"/></svg>
<div class="a" style="left:1176px;top:60px;width:2px;height:44px;background:#a0a0a0;"></div>
<div class="a" style="left:1178px;top:60px;width:2px;height:44px;background:#fff;"></div>
<svg class="a" style="left:1190px;top:64px" width="32" height="32" viewBox="0 0 16 16" shape-rendering="crispEdges"><path fill="#a0a0a0" d="M2 3h9v1h-9zM2 8h9v1h-9zM2 9h1v1h-1zM2 10h1v1h-1zM2 11h1v1h-1zM2 12h1v1h-1zM1 14h7v1h-7z"/><path fill="#000" d="M1 4h11v1h-11zM1 5h2v1h-2zM5 5h2v1h-2zM9 5h3v1h-3zM1 6h2v1h-2zM5 6h2v1h-2zM9 6h3v1h-3zM1 7h11v1h-11zM11 8h2v1h-2zM10 9h1v1h-1zM13 9h1v1h-1zM10 10h1v1h-1zM13 10h1v1h-1zM9 11h1v1h-1zM11 11h2v1h-2zM14 11h1v1h-1zM9 12h1v1h-1zM11 12h2v1h-2zM14 12h1v1h-1zM8 13h1v1h-1zM15 13h1v1h-1zM8 14h1v1h-1zM15 14h1v1h-1zM8 15h8v1h-8z"/><path fill="#c0c0c0" d="M3 5h2v1h-2zM7 5h2v1h-2zM3 6h2v1h-2zM7 6h2v1h-2z"/><path fill="#0f0" d="M1 8h1v1h-1z"/><path fill="#00f" d="M1 9h1v1h-1zM1 10h1v1h-1zM1 11h1v1h-1zM1 12h1v1h-1zM1 13h7v1h-7z"/><path fill="#ff0" d="M11 9h2v1h-2zM11 10h2v1h-2zM10 11h1v1h-1zM13 11h1v1h-1zM10 12h1v1h-1zM13 12h1v1h-1zM9 13h6v1h-6zM9 14h6v1h-6z"/></svg>
<div class="a" style="left:1238px;top:60px;width:2px;height:44px;background:#a0a0a0;"></div>
<div class="a" style="left:1240px;top:60px;width:2px;height:44px;background:#fff;"></div>
<svg class="a" style="left:1252px;top:64px" width="32" height="32" viewBox="0 0 16 16" shape-rendering="crispEdges"><path fill="#00f" d="M0 1h16v1h-16zM7 2h1v1h-1zM7 3h1v1h-1zM7 4h1v1h-1z"/><path fill="#000" d="M6 2h1v1h-1zM8 2h1v1h-1zM1 5h11v1h-11zM0 6h2v1h-2zM10 6h2v1h-2zM0 7h3v1h-3zM4 7h3v1h-3zM8 7h4v1h-4zM0 8h3v1h-3zM4 8h3v1h-3zM8 8h4v1h-4zM1 9h10v1h-10zM12 9h1v1h-1zM8 10h1v1h-1zM10 10h2v1h-2zM13 10h1v1h-1zM8 11h1v1h-1zM10 11h2v1h-2zM13 11h1v1h-1zM7 12h1v1h-1zM10 12h1v1h-1zM14 12h1v1h-1zM7 13h1v1h-1zM14 13h1v1h-1zM7 14h1v1h-1zM15 14h1v1h-1zM8 15h7v1h-7z"/><path fill="#a0a0a0" d="M2 4h5v1h-5zM8 4h3v1h-3z"/><path fill="#0f0" d="M2 6h1v1h-1z"/><path fill="#c0c0c0" d="M3 6h4v1h-4zM3 7h1v1h-1zM7 7h1v1h-1zM3 8h1v1h-1zM7 8h1v1h-1z"/><path fill="#fff" d="M7 6h1v1h-1z"/><path fill="#f00" d="M8 6h2v1h-2z"/><path fill="#ff0" d="M11 9h1v1h-1zM9 10h1v1h-1zM12 10h1v1h-1zM9 11h1v1h-1zM12 11h1v1h-1zM8 12h2v1h-2zM11 12h3v1h-3zM8 13h6v1h-6zM8 14h7v1h-7z"/></svg>
<div class="a" style="left:1300px;top:60px;width:2px;height:44px;background:#a0a0a0;"></div>
<div class="a" style="left:1302px;top:60px;width:2px;height:44px;background:#fff;"></div>
<svg class="a" style="left:1314px;top:64px" width="32" height="32" viewBox="0 0 16 16" shape-rendering="crispEdges"><path fill="#fff" d="M6 3h2v1h-2zM10 3h2v1h-2zM6 4h2v1h-2zM10 4h2v1h-2zM6 5h2v1h-2zM10 5h2v1h-2zM6 6h2v1h-2zM10 6h2v1h-2zM6 7h2v1h-2zM10 7h2v1h-2zM6 8h2v1h-2zM10 8h2v1h-2zM6 9h2v1h-2zM10 9h2v1h-2zM2 12h1v1h-1zM4 12h3v1h-3zM9 12h3v1h-3zM14 12h1v1h-1zM1 13h1v1h-1zM3 13h1v1h-1zM6 13h2v1h-2zM9 13h1v1h-1zM12 13h2v1h-2zM15 13h1v1h-1zM1 14h1v1h-1zM4 14h1v1h-1zM6 14h1v1h-1zM8 14h1v1h-1zM10 14h1v1h-1zM13 14h1v1h-1zM15 14h1v1h-1zM1 15h1v1h-1zM4 15h3v1h-3zM9 15h3v1h-3zM15 15h1v1h-1zM5 16h3v1h-3zM11 16h3v1h-3z"/><path fill="#a0a0a0" d="M5 2h2v1h-2zM9 2h2v1h-2zM5 3h2v1h-2zM9 3h2v1h-2zM5 4h2v1h-2zM9 4h2v1h-2zM5 5h2v1h-2zM9 5h2v1h-2zM5 6h2v1h-2zM9 6h2v1h-2zM5 7h2v1h-2zM9 7h2v1h-2zM5 8h2v1h-2zM9 8h2v1h-2zM1 11h1v1h-1zM3 11h3v1h-3zM8 11h3v1h-3zM13 11h1v1h-1zM0 12h1v1h-1zM2 12h1v1h-1zM5 12h2v1h-2zM8 12h1v1h-1zM11 12h2v1h-2zM14 12h1v1h-1zM0 13h1v1h-1zM3 13h1v1h-1zM5 13h1v1h-1zM7 13h1v1h-1zM9 13h1v1h-1zM12 13h1v1h-1zM14 13h1v1h-1zM0 14h1v1h-1zM3 14h3v1h-3zM8 14h3v1h-3zM14 14h1v1h-1zM4 15h3v1h-3zM10 15h3v1h-3z"/></svg>
<svg class="a" style="left:1360px;top:64px" width="32" height="32" viewBox="0 0 16 16" shape-rendering="crispEdges"><path fill="#fff" d="M5 4h3v1h-3zM10 4h3v1h-3zM5 5h3v1h-3zM10 5h3v1h-3zM5 6h3v1h-3zM10 6h3v1h-3zM5 7h3v1h-3zM10 7h3v1h-3zM5 8h3v1h-3zM10 8h3v1h-3zM5 9h3v1h-3zM10 9h3v1h-3zM5 10h3v1h-3zM10 10h3v1h-3zM5 11h3v1h-3zM10 11h3v1h-3zM5 12h3v1h-3zM10 12h3v1h-3zM5 13h3v1h-3zM10 13h3v1h-3zM5 14h3v1h-3zM10 14h3v1h-3z"/><path fill="#a0a0a0" d="M4 3h3v1h-3zM9 3h3v1h-3zM4 4h3v1h-3zM9 4h3v1h-3zM4 5h3v1h-3zM9 5h3v1h-3zM4 6h3v1h-3zM9 6h3v1h-3zM4 7h3v1h-3zM9 7h3v1h-3zM4 8h3v1h-3zM9 8h3v1h-3zM4 9h3v1h-3zM9 9h3v1h-3zM4 10h3v1h-3zM9 10h3v1h-3zM4 11h3v1h-3zM9 11h3v1h-3zM4 12h3v1h-3zM9 12h3v1h-3zM4 13h3v1h-3zM9 13h3v1h-3z"/></svg>
<div class="a" style="left:1408px;top:60px;width:2px;height:44px;background:#a0a0a0;"></div>
<div class="a" style="left:1410px;top:60px;width:2px;height:44px;background:#fff;"></div>
<svg class="a" style="left:1422px;top:64px" width="32" height="32" viewBox="0 0 16 16" shape-rendering="crispEdges"><path fill="#fff" d="M1 3h7v1h-7zM1 4h1v1h-1zM7 4h2v1h-2zM1 5h1v1h-1zM3 5h1v1h-1zM7 5h1v1h-1zM9 5h1v1h-1zM1 6h1v1h-1zM3 6h1v1h-1zM5 6h1v1h-1zM7 6h4v1h-4zM1 7h1v1h-1zM3 7h1v1h-1zM10 7h1v1h-1zM1 8h1v1h-1zM3 8h1v1h-1zM5 8h2v1h-2zM8 8h1v1h-1zM10 8h1v1h-1zM1 9h1v1h-1zM3 9h1v1h-1zM10 9h1v1h-1zM1 10h1v1h-1zM3 10h1v1h-1zM6 10h1v1h-1zM10 10h1v1h-1zM1 11h1v1h-1zM3 11h1v1h-1zM5 11h2v1h-2zM9 11h7v1h-7zM1 12h1v1h-1zM4 12h3v1h-3zM8 12h1v1h-1zM12 12h1v1h-1zM14 12h1v1h-1zM16 12h1v1h-1zM1 13h1v1h-1zM3 13h4v1h-4zM8 13h1v1h-1zM12 13h1v1h-1zM14 13h1v1h-1zM16 13h1v1h-1zM1 14h1v1h-1zM8 14h1v1h-1zM12 14h1v1h-1zM14 14h1v1h-1zM16 14h1v1h-1zM1 15h7v1h-7zM9 15h7v1h-7z"/><path fill="#a0a0a0" d="M0 2h7v1h-7zM0 3h1v1h-1zM6 3h2v1h-2zM0 4h1v1h-1zM2 4h1v1h-1zM6 4h1v1h-1zM8 4h1v1h-1zM0 5h1v1h-1zM2 5h1v1h-1zM4 5h1v1h-1zM6 5h4v1h-4zM0 6h1v1h-1zM2 6h1v1h-1zM9 6h1v1h-1zM0 7h1v1h-1zM2 7h1v1h-1zM4 7h2v1h-2zM7 7h1v1h-1zM9 7h1v1h-1zM0 8h1v1h-1zM2 8h1v1h-1zM9 8h1v1h-1zM0 9h1v1h-1zM2 9h1v1h-1zM5 9h1v1h-1zM9 9h1v1h-1zM0 10h1v1h-1zM2 10h1v1h-1zM4 10h2v1h-2zM8 10h7v1h-7zM0 11h1v1h-1zM3 11h3v1h-3zM7 11h1v1h-1zM11 11h1v1h-1zM13 11h1v1h-1zM15 11h1v1h-1zM0 12h1v1h-1zM2 12h4v1h-4zM7 12h1v1h-1zM11 12h1v1h-1zM13 12h1v1h-1zM15 12h1v1h-1zM0 13h1v1h-1zM7 13h1v1h-1zM11 13h1v1h-1zM13 13h1v1h-1zM15 13h1v1h-1zM0 14h7v1h-7zM8 14h7v1h-7z"/></svg>
<svg class="a" style="left:1468px;top:64px" width="32" height="32" viewBox="0 0 16 16" shape-rendering="crispEdges"><path fill="#fff" d="M7 2h7v1h-7zM7 3h1v1h-1zM13 3h2v1h-2zM7 4h1v1h-1zM13 4h1v1h-1zM15 4h1v1h-1zM7 5h1v1h-1zM13 5h4v1h-4zM7 6h1v1h-1zM12 6h1v1h-1zM16 6h1v1h-1zM7 7h1v1h-1zM11 7h3v1h-3zM16 7h1v1h-1zM7 8h1v1h-1zM10 8h5v1h-5zM16 8h1v1h-1zM7 9h1v1h-1zM12 9h1v1h-1zM16 9h1v1h-1zM7 10h1v1h-1zM12 10h1v1h-1zM16 10h1v1h-1zM2 11h7v1h-7zM12 11h1v1h-1zM16 11h1v1h-1zM1 12h2v1h-2zM8 12h2v1h-2zM12 12h1v1h-1zM16 12h1v1h-1zM1 13h1v1h-1zM5 13h1v1h-1zM7 13h1v1h-1zM9 13h1v1h-1zM11 13h1v1h-1zM16 13h1v1h-1zM1 14h1v1h-1zM5 14h1v1h-1zM7 14h1v1h-1zM9 14h8v1h-8zM2 15h7v1h-7z"/><path fill="#a0a0a0" d="M6 1h7v1h-7zM6 2h1v1h-1zM12 2h2v1h-2zM6 3h1v1h-1zM12 3h1v1h-1zM14 3h1v1h-1zM6 4h1v1h-1zM12 4h4v1h-4zM6 5h1v1h-1zM11 5h1v1h-1zM15 5h1v1h-1zM6 6h1v1h-1zM10 6h3v1h-3zM15 6h1v1h-1zM6 7h1v1h-1zM9 7h5v1h-5zM15 7h1v1h-1zM6 8h1v1h-1zM11 8h1v1h-1zM15 8h1v1h-1zM6 9h1v1h-1zM11 9h1v1h-1zM15 9h1v1h-1zM1 10h7v1h-7zM11 10h1v1h-1zM15 10h1v1h-1zM0 11h2v1h-2zM7 11h2v1h-2zM11 11h1v1h-1zM15 11h1v1h-1zM0 12h1v1h-1zM4 12h1v1h-1zM6 12h1v1h-1zM8 12h1v1h-1zM10 12h1v1h-1zM15 12h1v1h-1zM0 13h1v1h-1zM4 13h1v1h-1zM6 13h1v1h-1zM8 13h8v1h-8zM1 14h7v1h-7z"/></svg>
<svg class="a" style="left:1514px;top:64px" width="32" height="32" viewBox="0 0 16 16" shape-rendering="crispEdges"><path fill="#fff" d="M10 2h7v1h-7zM9 3h8v1h-8zM9 4h1v1h-1zM12 4h1v1h-1zM14 4h1v1h-1zM16 4h1v1h-1zM9 5h1v1h-1zM14 5h1v1h-1zM16 5h1v1h-1zM9 6h1v1h-1zM11 6h3v1h-3zM16 6h1v1h-1zM9 7h1v1h-1zM12 7h1v1h-1zM14 7h2v1h-2zM1 8h5v1h-5zM9 8h1v1h-1zM12 8h1v1h-1zM14 8h1v1h-1zM1 9h1v1h-1zM9 9h1v1h-1zM11 9h1v1h-1zM14 9h1v1h-1zM1 10h1v1h-1zM9 10h1v1h-1zM12 10h1v1h-1zM14 10h1v1h-1zM1 11h1v1h-1zM10 11h2v1h-2zM13 11h1v1h-1zM1 12h1v1h-1zM9 12h5v1h-5zM1 13h1v1h-1zM9 13h1v1h-1zM14 13h1v1h-1zM1 14h1v1h-1zM9 14h1v1h-1zM15 14h1v1h-1zM1 15h1v1h-1zM9 15h1v1h-1zM16 15h1v1h-1zM1 16h9v1h-9z"/><path fill="#a0a0a0" d="M9 1h7v1h-7zM8 2h8v1h-8zM8 3h1v1h-1zM11 3h1v1h-1zM13 3h1v1h-1zM15 3h1v1h-1zM8 4h1v1h-1zM13 4h1v1h-1zM15 4h1v1h-1zM8 5h1v1h-1zM10 5h3v1h-3zM15 5h1v1h-1zM8 6h1v1h-1zM11 6h1v1h-1zM13 6h2v1h-2zM0 7h5v1h-5zM8 7h1v1h-1zM11 7h1v1h-1zM13 7h1v1h-1zM0 8h1v1h-1zM8 8h1v1h-1zM10 8h1v1h-1zM13 8h1v1h-1zM0 9h1v1h-1zM8 9h1v1h-1zM11 9h1v1h-1zM13 9h1v1h-1zM0 10h1v1h-1zM9 10h2v1h-2zM12 10h1v1h-1zM0 11h1v1h-1zM8 11h5v1h-5zM0 12h1v1h-1zM8 12h1v1h-1zM13 12h1v1h-1zM0 13h1v1h-1zM8 13h1v1h-1zM14 13h1v1h-1zM0 14h1v1h-1zM8 14h1v1h-1zM15 14h1v1h-1zM0 15h9v1h-9z"/></svg>
<div class="a" style="left:1562px;top:60px;width:2px;height:44px;background:#a0a0a0;"></div>
<div class="a" style="left:1564px;top:60px;width:2px;height:44px;background:#fff;"></div>
<svg class="a" style="left:1576px;top:64px" width="32" height="32" viewBox="0 0 16 16" shape-rendering="crispEdges"><path fill="#fff" d="M6 2h2v1h-2zM4 3h8v1h-8zM2 4h5v1h-5zM8 4h5v1h-5zM2 5h11v1h-11zM2 6h4v1h-4zM7 6h1v1h-1zM9 6h4v1h-4zM2 7h1v1h-1zM4 7h9v1h-9zM2 8h1v1h-1zM4 8h9v1h-9zM2 9h1v1h-1zM7 9h2v1h-2zM2 10h1v1h-1zM6 10h1v1h-1zM6 11h1v1h-1zM9 11h7v1h-7zM4 12h3v1h-3zM8 12h2v1h-2zM15 12h2v1h-2zM4 13h3v1h-3zM8 13h1v1h-1zM12 13h1v1h-1zM14 13h1v1h-1zM16 13h1v1h-1zM2 14h5v1h-5zM8 14h2v1h-2zM15 14h2v1h-2zM9 15h7v1h-7z"/><path fill="#a0a0a0" d="M5 1h2v1h-2zM3 2h8v1h-8zM1 3h5v1h-5zM7 3h5v1h-5zM1 4h11v1h-11zM1 5h4v1h-4zM6 5h1v1h-1zM8 5h4v1h-4zM1 6h1v1h-1zM3 6h9v1h-9zM1 7h1v1h-1zM3 7h9v1h-9zM1 8h1v1h-1zM6 8h2v1h-2zM1 9h1v1h-1zM5 9h1v1h-1zM5 10h1v1h-1zM8 10h7v1h-7zM3 11h3v1h-3zM7 11h2v1h-2zM14 11h2v1h-2zM3 12h3v1h-3zM7 12h1v1h-1zM11 12h1v1h-1zM13 12h1v1h-1zM15 12h1v1h-1zM1 13h5v1h-5zM7 13h2v1h-2zM14 13h2v1h-2zM8 14h7v1h-7z"/></svg>
<svg class="a" style="left:1622px;top:64px" width="32" height="32" viewBox="0 0 16 16" shape-rendering="crispEdges"><path fill="#fff" d="M11 2h2v1h-2zM9 3h2v1h-2zM12 3h4v1h-4zM7 4h3v1h-3zM11 4h6v1h-6zM7 5h10v1h-10zM7 6h2v1h-2zM10 6h7v1h-7zM7 7h4v1h-4zM12 7h1v1h-1zM14 7h3v1h-3zM8 8h2v1h-2zM11 8h1v1h-1zM13 8h4v1h-4zM9 9h5v1h-5zM11 10h1v1h-1zM2 11h8v1h-8zM11 11h1v1h-1zM1 12h2v1h-2zM9 12h3v1h-3zM1 13h1v1h-1zM5 13h1v1h-1zM7 13h1v1h-1zM9 13h1v1h-1zM11 13h1v1h-1zM1 14h2v1h-2zM9 14h1v1h-1zM11 14h1v1h-1zM2 15h8v1h-8z"/><path fill="#a0a0a0" d="M10 1h2v1h-2zM8 2h2v1h-2zM11 2h4v1h-4zM6 3h3v1h-3zM10 3h6v1h-6zM6 4h10v1h-10zM6 5h2v1h-2zM9 5h7v1h-7zM6 6h4v1h-4zM11 6h1v1h-1zM13 6h3v1h-3zM7 7h2v1h-2zM10 7h1v1h-1zM12 7h4v1h-4zM8 8h5v1h-5zM10 9h1v1h-1zM1 10h8v1h-8zM10 10h1v1h-1zM0 11h2v1h-2zM8 11h3v1h-3zM0 12h1v1h-1zM4 12h1v1h-1zM6 12h1v1h-1zM8 12h1v1h-1zM10 12h1v1h-1zM0 13h2v1h-2zM8 13h1v1h-1zM10 13h1v1h-1zM1 14h8v1h-8z"/></svg>
<svg class="a" style="left:1668px;top:64px" width="32" height="32" viewBox="0 0 16 16" shape-rendering="crispEdges"><path fill="#fff" d="M11 2h6v1h-6zM10 3h7v1h-7zM10 4h1v1h-1zM13 4h1v1h-1zM15 4h2v1h-2zM10 5h1v1h-1zM16 5h1v1h-1zM10 6h1v1h-1zM12 6h3v1h-3zM16 6h1v1h-1zM12 7h1v1h-1zM14 7h2v1h-2zM9 8h1v1h-1zM12 8h1v1h-1zM14 8h1v1h-1zM3 9h4v1h-4zM9 9h1v1h-1zM11 9h1v1h-1zM14 9h1v1h-1zM2 10h6v1h-6zM9 10h1v1h-1zM12 10h1v1h-1zM14 10h1v1h-1zM1 11h6v1h-6zM8 11h4v1h-4zM1 12h4v1h-4zM7 12h6v1h-6zM3 13h7v1h-7zM13 13h1v1h-1zM4 14h1v1h-1zM6 14h6v1h-6zM14 14h1v1h-1zM5 15h7v1h-7zM15 15h1v1h-1zM7 16h2v1h-2z"/><path fill="#a0a0a0" d="M10 1h6v1h-6zM9 2h7v1h-7zM9 3h1v1h-1zM12 3h1v1h-1zM14 3h2v1h-2zM9 4h1v1h-1zM15 4h1v1h-1zM9 5h1v1h-1zM11 5h3v1h-3zM15 5h1v1h-1zM11 6h1v1h-1zM13 6h2v1h-2zM8 7h1v1h-1zM11 7h1v1h-1zM13 7h1v1h-1zM2 8h4v1h-4zM8 8h1v1h-1zM10 8h1v1h-1zM13 8h1v1h-1zM1 9h6v1h-6zM8 9h1v1h-1zM11 9h1v1h-1zM13 9h1v1h-1zM0 10h6v1h-6zM7 10h4v1h-4zM0 11h4v1h-4zM6 11h6v1h-6zM2 12h7v1h-7zM12 12h1v1h-1zM3 13h1v1h-1zM5 13h6v1h-6zM13 13h1v1h-1zM4 14h7v1h-7zM14 14h1v1h-1zM6 15h2v1h-2z"/></svg>
<div class="a" style="left:1716px;top:60px;width:2px;height:44px;background:#a0a0a0;"></div>
<div class="a" style="left:1718px;top:60px;width:2px;height:44px;background:#fff;"></div>
<svg class="a" style="left:1730px;top:64px" width="32" height="32" viewBox="0 0 16 16" shape-rendering="crispEdges"><path fill="#fff" d="M3 2h12v1h-12zM2 3h14v1h-14zM2 4h14v1h-14zM2 5h1v1h-1zM7 5h1v1h-1zM11 5h1v1h-1zM15 5h1v1h-1zM2 6h1v1h-1zM4 6h2v1h-2zM7 6h1v1h-1zM11 6h1v1h-1zM15 6h1v1h-1zM2 7h1v1h-1zM4 7h2v1h-2zM7 7h1v1h-1zM11 7h1v1h-1zM15 7h1v1h-1zM2 8h1v1h-1zM7 8h1v1h-1zM11 8h1v1h-1zM15 8h1v1h-1zM2 9h1v1h-1zM7 9h1v1h-1zM11 9h1v1h-1zM15 9h1v1h-1zM3 10h12v1h-12zM2 11h1v1h-1zM2 12h1v1h-1zM4 12h12v1h-12zM2 13h14v1h-14zM2 14h14v1h-14zM3 15h11v1h-11z"/><path fill="#a0a0a0" d="M2 1h12v1h-12zM1 2h14v1h-14zM1 3h14v1h-14zM1 4h1v1h-1zM6 4h1v1h-1zM10 4h1v1h-1zM14 4h1v1h-1zM1 5h1v1h-1zM3 5h2v1h-2zM6 5h1v1h-1zM10 5h1v1h-1zM14 5h1v1h-1zM1 6h1v1h-1zM3 6h2v1h-2zM6 6h1v1h-1zM10 6h1v1h-1zM14 6h1v1h-1zM1 7h1v1h-1zM6 7h1v1h-1zM10 7h1v1h-1zM14 7h1v1h-1zM1 8h1v1h-1zM6 8h1v1h-1zM10 8h1v1h-1zM14 8h1v1h-1zM2 9h12v1h-12zM1 10h1v1h-1zM1 11h1v1h-1zM3 11h12v1h-12zM1 12h14v1h-14zM1 13h14v1h-14zM2 14h11v1h-11z"/></svg>
<svg class="a" style="left:1776px;top:64px" width="32" height="32" viewBox="0 0 16 16" shape-rendering="crispEdges"><path fill="#fff" d="M3 2h12v1h-12zM2 3h14v1h-14zM2 4h14v1h-14zM2 5h1v1h-1zM7 5h1v1h-1zM11 5h1v1h-1zM15 5h1v1h-1zM2 6h1v1h-1zM4 6h2v1h-2zM7 6h1v1h-1zM11 6h1v1h-1zM15 6h1v1h-1zM2 7h1v1h-1zM4 7h2v1h-2zM7 7h1v1h-1zM11 7h1v1h-1zM15 7h1v1h-1zM2 8h1v1h-1zM7 8h1v1h-1zM11 8h1v1h-1zM15 8h1v1h-1zM2 9h1v1h-1zM7 9h1v1h-1zM11 9h1v1h-1zM15 9h1v1h-1zM3 10h12v1h-12zM1 12h1v1h-1zM5 12h3v1h-3zM11 12h2v1h-2zM2 13h1v1h-1zM4 13h1v1h-1zM8 13h1v1h-1zM10 13h1v1h-1zM13 13h1v1h-1zM3 14h2v1h-2zM9 14h2v1h-2zM14 14h1v1h-1zM2 15h3v1h-3zM8 15h3v1h-3zM13 15h3v1h-3zM3 16h1v1h-1zM9 16h1v1h-1zM14 16h1v1h-1z"/><path fill="#a0a0a0" d="M2 1h12v1h-12zM1 2h14v1h-14zM1 3h14v1h-14zM1 4h1v1h-1zM6 4h1v1h-1zM10 4h1v1h-1zM14 4h1v1h-1zM1 5h1v1h-1zM3 5h2v1h-2zM6 5h1v1h-1zM10 5h1v1h-1zM14 5h1v1h-1zM1 6h1v1h-1zM3 6h2v1h-2zM6 6h1v1h-1zM10 6h1v1h-1zM14 6h1v1h-1zM1 7h1v1h-1zM6 7h1v1h-1zM10 7h1v1h-1zM14 7h1v1h-1zM1 8h1v1h-1zM6 8h1v1h-1zM10 8h1v1h-1zM14 8h1v1h-1zM2 9h12v1h-12zM0 11h1v1h-1zM4 11h3v1h-3zM10 11h2v1h-2zM1 12h1v1h-1zM3 12h1v1h-1zM7 12h1v1h-1zM9 12h1v1h-1zM12 12h1v1h-1zM2 13h2v1h-2zM8 13h2v1h-2zM13 13h1v1h-1zM1 14h3v1h-3zM7 14h3v1h-3zM12 14h3v1h-3zM2 15h1v1h-1zM8 15h1v1h-1zM13 15h1v1h-1z"/></svg>
<svg class="a" style="left:1822px;top:64px" width="32" height="32" viewBox="0 0 16 16" shape-rendering="crispEdges"><path fill="#fff" d="M3 2h12v1h-12zM2 3h14v1h-14zM2 4h14v1h-14zM2 5h1v1h-1zM7 5h1v1h-1zM11 5h1v1h-1zM15 5h1v1h-1zM2 6h1v1h-1zM4 6h2v1h-2zM7 6h1v1h-1zM11 6h1v1h-1zM15 6h1v1h-1zM2 7h1v1h-1zM4 7h2v1h-2zM7 7h1v1h-1zM11 7h1v1h-1zM15 7h1v1h-1zM2 8h1v1h-1zM7 8h1v1h-1zM11 8h1v1h-1zM15 8h1v1h-1zM2 9h1v1h-1zM7 9h1v1h-1zM11 9h1v1h-1zM15 9h1v1h-1zM3 10h12v1h-12zM2 12h1v1h-1zM4 12h3v1h-3zM9 12h3v1h-3zM14 12h1v1h-1zM1 13h1v1h-1zM3 13h1v1h-1zM6 13h2v1h-2zM9 13h1v1h-1zM12 13h2v1h-2zM15 13h1v1h-1zM1 14h1v1h-1zM4 14h1v1h-1zM6 14h1v1h-1zM8 14h1v1h-1zM10 14h1v1h-1zM13 14h1v1h-1zM15 14h1v1h-1zM1 15h1v1h-1zM4 15h3v1h-3zM9 15h3v1h-3zM15 15h1v1h-1zM5 16h3v1h-3zM11 16h3v1h-3z"/><path fill="#a0a0a0" d="M2 1h12v1h-12zM1 2h14v1h-14zM1 3h14v1h-14zM1 4h1v1h-1zM6 4h1v1h-1zM10 4h1v1h-1zM14 4h1v1h-1zM1 5h1v1h-1zM3 5h2v1h-2zM6 5h1v1h-1zM10 5h1v1h-1zM14 5h1v1h-1zM1 6h1v1h-1zM3 6h2v1h-2zM6 6h1v1h-1zM10 6h1v1h-1zM14 6h1v1h-1zM1 7h1v1h-1zM6 7h1v1h-1zM10 7h1v1h-1zM14 7h1v1h-1zM1 8h1v1h-1zM6 8h1v1h-1zM10 8h1v1h-1zM14 8h1v1h-1zM2 9h12v1h-12zM1 11h1v1h-1zM3 11h3v1h-3zM8 11h3v1h-3zM13 11h1v1h-1zM0 12h1v1h-1zM2 12h1v1h-1zM5 12h2v1h-2zM8 12h1v1h-1zM11 12h2v1h-2zM14 12h1v1h-1zM0 13h1v1h-1zM3 13h1v1h-1zM5 13h1v1h-1zM7 13h1v1h-1zM9 13h1v1h-1zM12 13h1v1h-1zM14 13h1v1h-1zM0 14h1v1h-1zM3 14h3v1h-3zM8 14h3v1h-3zM14 14h1v1h-1zM4 15h3v1h-3zM10 15h3v1h-3z"/></svg>
<svg class="a" style="left:1868px;top:64px" width="32" height="32" viewBox="0 0 16 16" shape-rendering="crispEdges"><path fill="#fff" d="M3 2h12v1h-12zM2 3h14v1h-14zM2 4h14v1h-14zM2 5h1v1h-1zM7 5h1v1h-1zM11 5h1v1h-1zM15 5h1v1h-1zM2 6h1v1h-1zM4 6h2v1h-2zM7 6h1v1h-1zM11 6h1v1h-1zM15 6h1v1h-1zM2 7h1v1h-1zM4 7h2v1h-2zM7 7h1v1h-1zM11 7h1v1h-1zM15 7h1v1h-1zM2 8h1v1h-1zM7 8h1v1h-1zM11 8h1v1h-1zM15 8h1v1h-1zM2 9h1v1h-1zM7 9h1v1h-1zM11 9h1v1h-1zM15 9h1v1h-1zM3 10h12v1h-12zM8 11h1v1h-1zM3 12h4v1h-4zM8 12h1v1h-1zM10 12h1v1h-1zM12 12h3v1h-3zM2 13h1v1h-1zM16 13h1v1h-1zM2 14h1v1h-1zM3 15h3v1h-3zM8 15h1v1h-1zM11 15h1v1h-1zM13 15h3v1h-3zM12 16h1v1h-1z"/><path fill="#a0a0a0" d="M2 1h12v1h-12zM1 2h14v1h-14zM1 3h14v1h-14zM1 4h1v1h-1zM6 4h1v1h-1zM10 4h1v1h-1zM14 4h1v1h-1zM1 5h1v1h-1zM3 5h2v1h-2zM6 5h1v1h-1zM10 5h1v1h-1zM14 5h1v1h-1zM1 6h1v1h-1zM3 6h2v1h-2zM6 6h1v1h-1zM10 6h1v1h-1zM14 6h1v1h-1zM1 7h1v1h-1zM6 7h1v1h-1zM10 7h1v1h-1zM14 7h1v1h-1zM1 8h1v1h-1zM6 8h1v1h-1zM10 8h1v1h-1zM14 8h1v1h-1zM2 9h12v1h-12zM7 10h1v1h-1zM2 11h4v1h-4zM7 11h1v1h-1zM9 11h1v1h-1zM11 11h3v1h-3zM1 12h1v1h-1zM15 12h1v1h-1zM1 13h1v1h-1zM2 14h3v1h-3zM7 14h1v1h-1zM10 14h1v1h-1zM12 14h3v1h-3zM11 15h1v1h-1z"/></svg>
<div class="a" style="left:1916px;top:60px;width:2px;height:44px;background:#a0a0a0;"></div>
<div class="a" style="left:1918px;top:60px;width:2px;height:44px;background:#fff;"></div>
<svg class="a" style="left:1930px;top:64px" width="32" height="32" viewBox="0 0 16 16" shape-rendering="crispEdges"><path fill="#fff" d="M9 3h5v1h-5zM9 4h1v1h-1zM9 5h1v1h-1zM9 6h1v1h-1zM9 7h1v1h-1zM9 8h1v1h-1zM4 9h6v1h-6zM2 11h1v1h-1zM4 11h3v1h-3zM9 11h3v1h-3zM14 11h1v1h-1zM1 12h1v1h-1zM3 12h1v1h-1zM6 12h2v1h-2zM9 12h1v1h-1zM12 12h2v1h-2zM15 12h1v1h-1zM1 13h1v1h-1zM4 13h1v1h-1zM6 13h1v1h-1zM8 13h1v1h-1zM10 13h1v1h-1zM13 13h1v1h-1zM15 13h1v1h-1zM1 14h1v1h-1zM4 14h3v1h-3zM9 14h3v1h-3zM15 14h1v1h-1zM5 15h3v1h-3zM11 15h3v1h-3z"/><path fill="#a0a0a0" d="M8 2h5v1h-5zM8 3h1v1h-1zM8 4h1v1h-1zM8 5h1v1h-1zM8 6h1v1h-1zM8 7h1v1h-1zM3 8h6v1h-6zM1 10h1v1h-1zM3 10h3v1h-3zM8 10h3v1h-3zM13 10h1v1h-1zM0 11h1v1h-1zM2 11h1v1h-1zM5 11h2v1h-2zM8 11h1v1h-1zM11 11h2v1h-2zM14 11h1v1h-1zM0 12h1v1h-1zM3 12h1v1h-1zM5 12h1v1h-1zM7 12h1v1h-1zM9 12h1v1h-1zM12 12h1v1h-1zM14 12h1v1h-1zM0 13h1v1h-1zM3 13h3v1h-3zM8 13h3v1h-3zM14 13h1v1h-1zM4 14h3v1h-3zM10 14h3v1h-3z"/></svg>
<svg class="a" style="left:1976px;top:64px" width="32" height="32" viewBox="0 0 16 16" shape-rendering="crispEdges"><path fill="#fff" d="M3 4h1v1h-1zM3 5h1v1h-1zM5 5h1v1h-1zM3 6h1v1h-1zM5 6h1v1h-1zM3 7h1v1h-1zM5 7h1v1h-1zM8 7h1v1h-1zM14 7h1v1h-1zM3 8h1v1h-1zM5 8h1v1h-1zM8 8h1v1h-1zM14 8h1v1h-1zM3 9h1v1h-1zM5 9h1v1h-1zM8 9h1v1h-1zM11 9h1v1h-1zM14 9h1v1h-1zM3 10h1v1h-1zM5 10h1v1h-1zM8 10h1v1h-1zM11 10h1v1h-1zM14 10h1v1h-1zM3 11h13v1h-13zM3 13h3v1h-3zM9 13h3v1h-3zM14 13h2v1h-2zM5 14h1v1h-1zM9 14h1v1h-1zM11 14h1v1h-1zM14 14h1v1h-1zM5 15h5v1h-5zM11 15h4v1h-4z"/><path fill="#a0a0a0" d="M2 3h1v1h-1zM2 4h1v1h-1zM4 4h1v1h-1zM2 5h1v1h-1zM4 5h1v1h-1zM2 6h1v1h-1zM4 6h1v1h-1zM7 6h1v1h-1zM13 6h1v1h-1zM2 7h1v1h-1zM4 7h1v1h-1zM7 7h1v1h-1zM13 7h1v1h-1zM2 8h1v1h-1zM4 8h1v1h-1zM7 8h1v1h-1zM10 8h1v1h-1zM13 8h1v1h-1zM2 9h1v1h-1zM4 9h1v1h-1zM7 9h1v1h-1zM10 9h1v1h-1zM13 9h1v1h-1zM2 10h13v1h-13zM2 12h3v1h-3zM8 12h3v1h-3zM13 12h2v1h-2zM4 13h1v1h-1zM8 13h1v1h-1zM10 13h1v1h-1zM13 13h1v1h-1zM4 14h5v1h-5zM10 14h4v1h-4z"/></svg>
<div class="a" style="left:2024px;top:60px;width:2px;height:44px;background:#a0a0a0;"></div>
<div class="a" style="left:2026px;top:60px;width:2px;height:44px;background:#fff;"></div>
<svg class="a" style="left:2038px;top:64px" width="32" height="32" viewBox="0 0 16 16" shape-rendering="crispEdges"><path fill="#fff" d="M4 3h2v1h-2zM3 4h1v1h-1zM6 4h1v1h-1zM3 5h1v1h-1zM5 5h1v1h-1zM7 5h6v1h-6zM2 6h6v1h-6zM12 6h1v1h-1zM2 7h6v1h-6zM12 7h1v1h-1zM2 8h6v1h-6zM12 8h1v1h-1zM2 9h6v1h-6zM11 9h3v1h-3zM3 10h4v1h-4zM10 10h5v1h-5zM8 11h8v1h-8zM8 12h1v1h-1zM15 12h1v1h-1zM8 13h1v1h-1zM11 13h1v1h-1zM13 13h1v1h-1zM15 13h1v1h-1zM8 14h1v1h-1zM15 14h1v1h-1zM9 15h6v1h-6z"/><path fill="#a0a0a0" d="M3 2h2v1h-2zM2 3h1v1h-1zM5 3h1v1h-1zM2 4h1v1h-1zM4 4h1v1h-1zM6 4h6v1h-6zM1 5h6v1h-6zM11 5h1v1h-1zM1 6h6v1h-6zM11 6h1v1h-1zM1 7h6v1h-6zM11 7h1v1h-1zM1 8h6v1h-6zM10 8h3v1h-3zM2 9h4v1h-4zM9 9h5v1h-5zM7 10h8v1h-8zM7 11h1v1h-1zM14 11h1v1h-1zM7 12h1v1h-1zM10 12h1v1h-1zM12 12h1v1h-1zM14 12h1v1h-1zM7 13h1v1h-1zM14 13h1v1h-1zM8 14h6v1h-6z"/></svg>
<svg class="a" style="left:2084px;top:64px" width="32" height="32" viewBox="0 0 16 16" shape-rendering="crispEdges"><path fill="#fff" d="M13 2h2v1h-2zM12 3h1v1h-1zM15 3h1v1h-1zM12 4h1v1h-1zM15 4h1v1h-1zM8 5h6v1h-6zM15 5h1v1h-1zM8 6h6v1h-6zM8 7h6v1h-6zM8 8h6v1h-6zM9 9h4v1h-4zM3 11h8v1h-8zM2 12h1v1h-1zM11 12h1v1h-1zM2 13h1v1h-1zM6 13h1v1h-1zM8 13h1v1h-1zM11 13h1v1h-1zM2 14h1v1h-1zM11 14h1v1h-1zM3 15h8v1h-8z"/><path fill="#a0a0a0" d="M12 1h2v1h-2zM11 2h1v1h-1zM14 2h1v1h-1zM11 3h1v1h-1zM14 3h1v1h-1zM7 4h6v1h-6zM14 4h1v1h-1zM7 5h6v1h-6zM7 6h6v1h-6zM7 7h6v1h-6zM8 8h4v1h-4zM2 10h8v1h-8zM1 11h1v1h-1zM10 11h1v1h-1zM1 12h1v1h-1zM5 12h1v1h-1zM7 12h1v1h-1zM10 12h1v1h-1zM1 13h1v1h-1zM10 13h1v1h-1zM2 14h8v1h-8z"/></svg>
<div class="a" style="left:0px;top:116px;width:2px;height:52px;background:#fff;"></div>
<div class="a" style="left:2px;top:116px;width:2px;height:52px;background:#a0a0a0;"></div>
<div class="a" style="left:0px;top:166px;width:4px;height:2px;background:#a0a0a0;"></div>
<div class="a" style="left:0px;top:170px;width:1264px;height:2px;background:#a0a0a0;"></div>
<div class="a" style="left:0px;top:172px;width:1266px;height:2px;background:#fff;"></div>
<div class="a" style="left:1262px;top:114px;width:2px;height:58px;background:#a0a0a0;"></div>
<div class="a" style="left:1264px;top:114px;width:2px;height:58px;background:#fff;"></div>
<svg class="a" style="left:12px;top:124px" width="32" height="32" viewBox="0 0 16 16" shape-rendering="crispEdges"><path fill="#000" d="M5 4h3v1h-3zM4 5h1v1h-1zM8 5h1v1h-1zM3 6h1v1h-1zM9 6h1v1h-1zM3 7h1v1h-1zM9 7h1v1h-1zM3 8h1v1h-1zM9 8h1v1h-1zM4 9h1v1h-1zM8 9h1v1h-1zM5 10h5v1h-5zM10 11h1v1h-1zM11 12h1v1h-1zM11 13h1v1h-1z"/><path fill="#c0c0c0" d="M8 8h1v1h-1z"/></svg>
<svg class="a" style="left:58px;top:124px" width="32" height="32" viewBox="0 0 16 16" shape-rendering="crispEdges"><path fill="#000" d="M3 1h4v1h-4zM2 2h1v1h-1zM7 2h1v1h-1zM1 3h1v1h-1zM8 3h1v1h-1zM1 4h1v1h-1zM8 4h1v1h-1zM1 5h1v1h-1zM8 5h1v1h-1zM1 6h1v1h-1zM8 6h1v1h-1zM2 7h1v1h-1zM7 7h1v1h-1zM3 8h4v1h-4zM8 8h2v1h-2zM8 9h3v1h-3zM9 10h3v1h-3zM10 11h3v1h-3zM11 12h3v1h-3zM12 13h2v1h-2z"/><path fill="#ff0" d="M13 1h2v1h-2zM12 2h2v1h-2zM11 3h2v1h-2zM10 4h2v1h-2zM9 5h2v1h-2zM9 6h1v1h-1zM8 7h2v1h-2zM7 8h1v1h-1zM0 9h2v1h-2zM6 9h2v1h-2zM1 10h2v1h-2zM5 10h2v1h-2zM2 11h4v1h-4zM3 12h2v1h-2z"/></svg>
<svg class="a" style="left:104px;top:124px" width="32" height="32" viewBox="0 0 16 16" shape-rendering="crispEdges"><path fill="#000" d="M4 1h5v1h-5zM2 2h2v1h-2zM9 2h2v1h-2zM1 3h1v1h-1zM11 3h1v1h-1zM1 4h1v1h-1zM11 4h1v1h-1zM0 5h1v1h-1zM12 5h1v1h-1zM0 6h1v1h-1zM12 6h1v1h-1zM0 7h1v1h-1zM12 7h1v1h-1zM0 8h1v1h-1zM12 8h1v1h-1zM1 9h1v1h-1zM11 9h1v1h-1zM1 10h1v1h-1zM11 10h2v1h-2zM2 11h2v1h-2zM9 11h5v1h-5zM4 12h5v1h-5zM12 12h3v1h-3zM13 13h3v1h-3zM14 14h2v1h-2z"/><path fill="#c0c0c0" d="M6 8h1v1h-1zM9 8h1v1h-1zM6 9h3v1h-3z"/></svg>
<svg class="a" style="left:150px;top:124px" width="32" height="32" viewBox="0 0 16 16" shape-rendering="crispEdges"><path fill="#fff" d="M4 2h5v1h-5zM3 3h2v1h-2zM8 3h2v1h-2zM2 4h2v1h-2zM9 4h2v1h-2zM2 5h1v1h-1zM10 5h1v1h-1zM2 6h1v1h-1zM10 6h1v1h-1zM2 7h2v1h-2zM9 7h2v1h-2zM3 8h2v1h-2zM8 8h3v1h-3zM4 9h5v1h-5zM10 9h2v1h-2zM10 10h3v1h-3zM11 11h3v1h-3zM12 12h3v1h-3zM13 13h3v1h-3zM14 14h2v1h-2z"/><path fill="#a0a0a0" d="M3 1h5v1h-5zM2 2h2v1h-2zM7 2h2v1h-2zM1 3h2v1h-2zM8 3h2v1h-2zM1 4h1v1h-1zM9 4h1v1h-1zM1 5h1v1h-1zM9 5h1v1h-1zM1 6h2v1h-2zM8 6h2v1h-2zM2 7h2v1h-2zM7 7h3v1h-3zM3 8h5v1h-5zM9 8h2v1h-2zM9 9h3v1h-3zM10 10h3v1h-3zM11 11h3v1h-3zM12 12h3v1h-3zM13 13h2v1h-2z"/></svg>
<div class="a" style="left:198px;top:120px;width:2px;height:44px;background:#a0a0a0;"></div>
<div class="a" style="left:200px;top:120px;width:2px;height:44px;background:#fff;"></div>
<div class="a" style="left:205px;top:120px;width:46px;height:44px;border:2px solid;border-color:#a0a0a0 #fff #fff #a0a0a0;background:repeating-conic-gradient(#fff 0 25%,#f0f0f0 0 50%) 0 0/4px 4px"></div>
<svg class="a" style="left:212px;top:124px" width="32" height="32" viewBox="0 0 16 16" shape-rendering="crispEdges"><path fill="#000" d="M3 3h1v1h-1zM7 3h1v1h-1zM11 3h1v1h-1zM15 3h1v1h-1zM3 7h1v1h-1zM7 7h1v1h-1zM11 7h1v1h-1zM15 7h1v1h-1zM3 11h1v1h-1zM7 11h1v1h-1zM11 11h1v1h-1zM15 11h1v1h-1zM3 15h1v1h-1zM7 15h1v1h-1zM11 15h1v1h-1zM15 15h1v1h-1z"/></svg>
<div class="a" style="left:251px;top:120px;width:46px;height:44px;border:2px solid;border-color:#a0a0a0 #fff #fff #a0a0a0;background:repeating-conic-gradient(#fff 0 25%,#f0f0f0 0 50%) 0 0/4px 4px"></div>
<svg class="a" style="left:258px;top:124px" width="32" height="32" viewBox="0 0 16 16" shape-rendering="crispEdges"><path fill="#000" d="M7 2h5v1h-5zM4 3h3v1h-3zM12 3h3v1h-3zM3 4h1v1h-1zM15 4h1v1h-1zM2 5h1v1h-1zM7 5h1v1h-1zM9 5h1v1h-1zM11 5h1v1h-1zM16 5h1v1h-1zM2 6h1v1h-1zM8 6h1v1h-1zM10 6h1v1h-1zM16 6h1v1h-1zM3 7h1v1h-1zM15 7h1v1h-1zM4 8h3v1h-3zM14 8h1v1h-1zM7 9h6v1h-6zM14 9h1v1h-1zM12 10h1v1h-1zM14 10h1v1h-1zM13 11h2v1h-2zM14 12h1v1h-1zM10 13h3v1h-3zM10 14h2v1h-2z"/><path fill="#808000" d="M2 11h9v1h-9zM1 12h1v1h-1zM11 12h1v1h-1zM1 13h1v1h-1zM1 14h1v1h-1zM1 15h1v1h-1zM11 15h1v1h-1zM2 16h9v1h-9z"/><path fill="#ff0" d="M2 12h1v1h-1zM4 12h1v1h-1zM6 12h1v1h-1zM8 12h1v1h-1zM10 12h1v1h-1zM3 13h1v1h-1zM5 13h1v1h-1zM7 13h1v1h-1zM9 13h1v1h-1zM2 14h1v1h-1zM4 14h1v1h-1zM6 14h1v1h-1zM8 14h1v1h-1zM3 15h1v1h-1zM5 15h1v1h-1zM7 15h1v1h-1zM9 15h1v1h-1z"/><path fill="#fff" d="M3 12h1v1h-1zM5 12h1v1h-1zM7 12h1v1h-1zM9 12h1v1h-1zM2 13h1v1h-1zM4 13h1v1h-1zM6 13h1v1h-1zM8 13h1v1h-1zM3 14h1v1h-1zM5 14h1v1h-1zM7 14h1v1h-1zM9 14h1v1h-1zM2 15h1v1h-1zM4 15h1v1h-1zM6 15h1v1h-1zM8 15h1v1h-1zM10 15h1v1h-1z"/></svg>
<div class="a" style="left:297px;top:120px;width:46px;height:44px;border:2px solid;border-color:#a0a0a0 #fff #fff #a0a0a0;background:repeating-conic-gradient(#fff 0 25%,#f0f0f0 0 50%) 0 0/4px 4px"></div>
<svg class="a" style="left:304px;top:124px" width="32" height="32" viewBox="0 0 16 16" shape-rendering="crispEdges"><path fill="#000080" d="M3 3h1v1h-1zM2 4h3v1h-3zM3 5h1v1h-1zM3 8h1v1h-1zM2 9h3v1h-3zM3 10h1v1h-1zM3 13h1v1h-1zM2 14h3v1h-3zM3 15h1v1h-1z"/><path fill="#a0a0a0" d="M7 4h9v1h-9zM8 5h1v1h-1zM10 5h1v1h-1zM12 5h1v1h-1zM14 5h1v1h-1zM7 9h9v1h-9zM8 10h1v1h-1zM10 10h1v1h-1zM12 10h1v1h-1zM14 10h1v1h-1zM7 14h9v1h-9zM8 15h1v1h-1zM10 15h1v1h-1zM12 15h1v1h-1zM14 15h1v1h-1z"/></svg>
<svg class="a" style="left:350px;top:124px" width="32" height="32" viewBox="0 0 16 16" shape-rendering="crispEdges"><path fill="#008000" d="M0 1h1v1h-1zM15 1h1v1h-1zM0 2h1v1h-1zM15 2h1v1h-1zM0 3h1v1h-1zM15 3h1v1h-1zM0 4h1v1h-1zM15 4h1v1h-1zM0 5h1v1h-1zM15 5h1v1h-1zM0 6h1v1h-1zM15 6h1v1h-1zM0 7h1v1h-1zM15 7h1v1h-1zM0 8h1v1h-1zM15 8h1v1h-1zM0 9h1v1h-1zM15 9h1v1h-1zM0 10h1v1h-1zM15 10h1v1h-1zM0 11h1v1h-1zM15 11h1v1h-1zM0 12h1v1h-1zM15 12h1v1h-1zM0 13h1v1h-1zM15 13h1v1h-1zM0 14h1v1h-1zM15 14h1v1h-1zM0 15h1v1h-1zM15 15h1v1h-1z"/><path fill="#a0a0a0" d="M1 2h1v1h-1zM1 3h1v1h-1zM5 3h1v1h-1zM5 4h1v1h-1zM1 5h1v1h-1zM5 5h1v1h-1zM8 5h1v1h-1zM13 5h1v1h-1zM1 6h1v1h-1zM5 6h1v1h-1zM8 6h1v1h-1zM12 6h2v1h-2zM1 7h1v1h-1zM5 7h1v1h-1zM7 7h2v1h-2zM1 8h1v1h-1zM1 9h1v1h-1zM1 10h1v1h-1zM1 11h1v1h-1zM1 12h1v1h-1zM1 13h1v1h-1zM3 13h2v1h-2zM1 14h1v1h-1zM9 14h3v1h-3zM1 15h1v1h-1z"/><path fill="#000" d="M4 2h1v1h-1zM7 2h1v1h-1zM4 3h1v1h-1zM7 3h1v1h-1zM11 3h2v1h-2zM1 4h4v1h-4zM7 4h6v1h-6zM4 5h1v1h-1zM7 5h1v1h-1zM11 5h2v1h-2zM4 6h1v1h-1zM7 6h1v1h-1zM9 9h3v1h-3zM2 10h2v1h-2zM8 10h1v1h-1zM12 10h1v1h-1zM2 11h7v1h-7zM12 11h3v1h-3zM2 12h2v1h-2zM8 12h1v1h-1zM12 12h1v1h-1zM9 13h3v1h-3z"/></svg>
<div class="a" style="left:389px;top:120px;width:46px;height:44px;border:2px solid;border-color:#a0a0a0 #fff #fff #a0a0a0;background:repeating-conic-gradient(#fff 0 25%,#f0f0f0 0 50%) 0 0/4px 4px"></div>
<svg class="a" style="left:396px;top:124px" width="32" height="32" viewBox="0 0 16 16" shape-rendering="crispEdges"><path fill="#008000" d="M1 3h2v1h-2zM1 4h2v1h-2zM1 5h2v1h-2zM1 6h2v1h-2zM1 7h2v1h-2zM1 8h2v1h-2zM1 9h2v1h-2zM1 10h2v1h-2zM1 11h2v1h-2zM1 12h2v1h-2zM1 13h2v1h-2zM1 14h2v1h-2zM1 15h2v1h-2zM1 16h2v1h-2z"/><path fill="#ff0" d="M3 3h1v1h-1zM6 3h8v1h-8zM3 4h1v1h-1zM5 4h1v1h-1zM15 4h1v1h-1zM3 5h1v1h-1zM5 5h2v1h-2zM8 5h1v1h-1zM10 5h1v1h-1zM12 5h1v1h-1zM14 5h2v1h-2zM3 6h1v1h-1zM6 6h8v1h-8zM3 7h14v1h-14zM3 8h1v1h-1zM6 8h8v1h-8zM3 9h1v1h-1zM5 9h1v1h-1zM15 9h1v1h-1zM3 10h1v1h-1zM5 10h2v1h-2zM8 10h1v1h-1zM10 10h1v1h-1zM12 10h1v1h-1zM14 10h2v1h-2zM3 11h1v1h-1zM6 11h8v1h-8zM3 12h14v1h-14zM3 13h1v1h-1zM6 13h8v1h-8zM3 14h1v1h-1zM5 14h1v1h-1zM15 14h1v1h-1zM3 15h1v1h-1zM5 15h2v1h-2zM8 15h1v1h-1zM10 15h1v1h-1zM12 15h1v1h-1zM14 15h2v1h-2zM3 16h1v1h-1zM6 16h8v1h-8z"/><path fill="#000" d="M4 3h2v1h-2zM14 3h3v1h-3zM4 4h1v1h-1zM7 4h1v1h-1zM9 4h1v1h-1zM11 4h1v1h-1zM13 4h1v1h-1zM16 4h1v1h-1zM4 5h1v1h-1zM16 5h1v1h-1zM4 6h2v1h-2zM14 6h3v1h-3zM4 8h2v1h-2zM14 8h3v1h-3zM4 9h1v1h-1zM7 9h1v1h-1zM9 9h1v1h-1zM11 9h1v1h-1zM13 9h1v1h-1zM16 9h1v1h-1zM4 10h1v1h-1zM16 10h1v1h-1zM4 11h2v1h-2zM14 11h3v1h-3zM4 13h2v1h-2zM14 13h3v1h-3zM4 14h1v1h-1zM7 14h1v1h-1zM9 14h1v1h-1zM11 14h1v1h-1zM13 14h1v1h-1zM16 14h1v1h-1zM4 15h1v1h-1zM16 15h1v1h-1zM4 16h2v1h-2zM14 16h3v1h-3z"/><path fill="#8c8cb4" d="M6 4h1v1h-1zM8 4h1v1h-1zM10 4h1v1h-1zM12 4h1v1h-1zM14 4h1v1h-1zM7 5h1v1h-1zM9 5h1v1h-1zM11 5h1v1h-1zM13 5h1v1h-1zM6 9h1v1h-1zM8 9h1v1h-1zM10 9h1v1h-1zM12 9h1v1h-1zM14 9h1v1h-1zM7 10h1v1h-1zM9 10h1v1h-1zM11 10h1v1h-1zM13 10h1v1h-1zM6 14h1v1h-1zM8 14h1v1h-1zM10 14h1v1h-1zM12 14h1v1h-1zM14 14h1v1h-1zM7 15h1v1h-1zM9 15h1v1h-1zM11 15h1v1h-1zM13 15h1v1h-1z"/></svg>
<svg class="a" style="left:442px;top:124px" width="32" height="32" viewBox="0 0 16 16" shape-rendering="crispEdges"><path fill="#000" d="M2 2h9v1h-9zM0 3h3v1h-3zM10 3h1v1h-1zM2 4h1v1h-1zM10 4h1v1h-1zM2 5h9v1h-9zM3 6h1v1h-1zM3 7h1v1h-1zM6 7h9v1h-9zM3 8h4v1h-4zM14 8h1v1h-1zM3 9h1v1h-1zM6 9h1v1h-1zM14 9h1v1h-1zM3 10h1v1h-1zM6 10h9v1h-9zM3 11h1v1h-1zM7 11h1v1h-1zM3 12h1v1h-1zM7 12h1v1h-1zM9 12h7v1h-7zM3 13h1v1h-1zM7 13h3v1h-3zM3 14h1v1h-1zM7 14h1v1h-1zM9 14h1v1h-1zM3 15h1v1h-1zM7 15h1v1h-1zM9 15h7v1h-7z"/><path fill="#0f0" d="M3 3h7v1h-7zM3 4h7v1h-7zM7 8h7v1h-7zM7 9h7v1h-7zM10 13h6v1h-6zM10 14h6v1h-6z"/></svg>
<div class="a" style="left:490px;top:120px;width:2px;height:44px;background:#a0a0a0;"></div>
<div class="a" style="left:492px;top:120px;width:2px;height:44px;background:#fff;"></div>
<div class="a" style="left:497px;top:120px;width:46px;height:44px;border:2px solid;border-color:#a0a0a0 #fff #fff #a0a0a0;background:repeating-conic-gradient(#fff 0 25%,#f0f0f0 0 50%) 0 0/4px 4px"></div>
<svg class="a" style="left:504px;top:124px" width="32" height="32" viewBox="0 0 16 16" shape-rendering="crispEdges"><path fill="#000" d="M3 3h3v1h-3zM7 3h1v1h-1zM11 3h1v1h-1zM14 3h2v1h-2zM2 4h1v1h-1zM7 4h2v1h-2zM10 4h2v1h-2zM13 4h1v1h-1zM16 4h1v1h-1zM3 5h2v1h-2zM7 5h1v1h-1zM9 5h1v1h-1zM11 5h1v1h-1zM13 5h4v1h-4zM5 6h1v1h-1zM7 6h1v1h-1zM11 6h1v1h-1zM13 6h1v1h-1zM16 6h1v1h-1zM2 7h3v1h-3zM7 7h1v1h-1zM11 7h1v1h-1zM13 7h1v1h-1zM16 7h1v1h-1z"/><path fill="#00f" d="M2 9h2v1h-2zM5 9h2v1h-2zM8 9h2v1h-2zM11 9h2v1h-2zM14 9h2v1h-2z"/><path fill="#008080" d="M2 10h15v1h-15zM2 11h1v1h-1zM2 12h1v1h-1zM2 13h1v1h-1zM2 14h1v1h-1zM2 15h1v1h-1zM2 16h1v1h-1z"/><path fill="#a0a0a0" d="M3 11h14v1h-14zM3 12h1v1h-1zM7 12h1v1h-1zM12 12h1v1h-1zM3 13h14v1h-14zM3 14h1v1h-1zM7 14h1v1h-1zM12 14h1v1h-1zM3 15h14v1h-14zM3 16h1v1h-1zM7 16h1v1h-1zM12 16h1v1h-1z"/></svg>
<svg class="a" style="left:550px;top:124px" width="32" height="32" viewBox="0 0 16 16" shape-rendering="crispEdges"><path fill="#00f" d="M3 2h14v1h-14zM2 3h3v1h-3zM8 3h7v1h-7zM16 3h1v1h-1zM2 4h15v1h-15zM2 5h1v1h-1zM2 6h1v1h-1zM2 7h1v1h-1zM2 8h1v1h-1zM2 9h1v1h-1zM2 10h1v1h-1zM2 11h1v1h-1zM2 12h1v1h-1zM2 13h1v1h-1zM2 14h1v1h-1zM3 15h14v1h-14z"/><path fill="#fff" d="M5 3h3v1h-3z"/><path fill="#f00" d="M15 3h1v1h-1z"/><path fill="#000" d="M5 6h4v1h-4zM11 6h6v1h-6zM4 7h2v1h-2zM13 7h1v1h-1zM4 8h1v1h-1zM13 8h1v1h-1zM4 9h1v1h-1zM13 9h1v1h-1zM4 10h1v1h-1zM13 10h1v1h-1zM4 11h2v1h-2zM13 11h1v1h-1zM5 12h4v1h-4zM11 12h6v1h-6z"/></svg>
<div class="a" style="left:598px;top:120px;width:2px;height:44px;background:#a0a0a0;"></div>
<div class="a" style="left:600px;top:120px;width:2px;height:44px;background:#fff;"></div>
<div class="a" style="left:605px;top:120px;width:46px;height:44px;border:2px solid;border-color:#a0a0a0 #fff #fff #a0a0a0;background:repeating-conic-gradient(#fff 0 25%,#f0f0f0 0 50%) 0 0/4px 4px"></div>
<svg class="a" style="left:612px;top:124px" width="32" height="32" viewBox="0 0 16 16" shape-rendering="crispEdges"><path fill="#000" d="M3 2h2v1h-2zM3 3h1v1h-1zM5 3h1v1h-1zM3 4h1v1h-1zM6 4h1v1h-1zM3 5h1v1h-1zM7 5h1v1h-1zM3 6h1v1h-1zM8 6h1v1h-1zM3 7h1v1h-1zM9 7h1v1h-1zM3 8h1v1h-1zM10 8h1v1h-1zM3 9h1v1h-1zM11 9h1v1h-1zM3 10h1v1h-1zM9 10h4v1h-4zM3 11h1v1h-1zM6 11h1v1h-1zM9 11h1v1h-1zM3 12h3v1h-3zM7 12h1v1h-1zM10 12h1v1h-1zM8 13h1v1h-1zM10 13h1v1h-1zM8 14h1v1h-1zM11 14h1v1h-1zM9 15h1v1h-1zM11 15h1v1h-1zM9 16h2v1h-2z"/></svg>
<svg class="a" style="left:658px;top:124px" width="32" height="32" viewBox="0 0 16 16" shape-rendering="crispEdges"><path fill="#a0a0a0" d="M5 4h1v1h-1zM12 4h1v1h-1zM5 5h1v1h-1zM12 5h1v1h-1zM5 6h1v1h-1zM12 6h1v1h-1zM5 7h1v1h-1zM12 7h1v1h-1zM5 8h1v1h-1zM12 8h1v1h-1zM1 9h1v1h-1zM2 9h1v1h-1zM3 9h1v1h-1zM4 9h1v1h-1zM5 9h1v1h-1zM12 9h1v1h-1zM13 9h1v1h-1zM14 9h1v1h-1zM15 9h1v1h-1zM16 9h1v1h-1zM5 10h1v1h-1zM12 10h1v1h-1zM5 11h1v1h-1zM12 11h1v1h-1zM5 12h1v1h-1zM12 12h1v1h-1zM5 13h1v1h-1zM12 13h1v1h-1zM5 14h1v1h-1zM12 14h1v1h-1z"/><path fill="#000" d="M4 3h1v1h-1zM11 3h1v1h-1zM4 4h1v1h-1zM11 4h1v1h-1zM4 5h1v1h-1zM11 5h1v1h-1zM4 6h1v1h-1zM11 6h1v1h-1zM4 7h1v1h-1zM11 7h1v1h-1zM0 8h5v1h-5zM11 8h5v1h-5zM4 9h1v1h-1zM11 9h1v1h-1zM4 10h1v1h-1zM11 10h1v1h-1zM4 11h1v1h-1zM11 11h1v1h-1zM4 12h1v1h-1zM11 12h1v1h-1zM4 13h1v1h-1zM11 13h1v1h-1z"/></svg>
<svg class="a" style="left:704px;top:124px" width="32" height="32" viewBox="0 0 16 16" shape-rendering="crispEdges"><path fill="#a0a0a0" d="M5 4h1v1h-1zM12 4h1v1h-1zM5 5h1v1h-1zM12 5h1v1h-1zM5 6h1v1h-1zM11 6h1v1h-1zM12 6h1v1h-1zM5 7h1v1h-1zM10 7h1v1h-1zM12 7h1v1h-1zM5 8h1v1h-1zM9 8h1v1h-1zM12 8h1v1h-1zM1 9h1v1h-1zM2 9h1v1h-1zM3 9h1v1h-1zM4 9h1v1h-1zM5 9h1v1h-1zM8 9h1v1h-1zM12 9h1v1h-1zM13 9h1v1h-1zM14 9h1v1h-1zM15 9h1v1h-1zM16 9h1v1h-1zM5 10h1v1h-1zM7 10h1v1h-1zM12 10h1v1h-1zM5 11h1v1h-1zM6 11h1v1h-1zM12 11h1v1h-1zM5 12h1v1h-1zM12 12h1v1h-1zM5 13h1v1h-1zM12 13h1v1h-1zM5 14h1v1h-1zM12 14h1v1h-1z"/><path fill="#000" d="M4 3h1v1h-1zM11 3h1v1h-1zM4 4h1v1h-1zM11 4h1v1h-1zM4 5h1v1h-1zM10 5h2v1h-2zM4 6h1v1h-1zM9 6h1v1h-1zM11 6h1v1h-1zM4 7h1v1h-1zM8 7h1v1h-1zM11 7h1v1h-1zM0 8h5v1h-5zM7 8h1v1h-1zM11 8h5v1h-5zM4 9h1v1h-1zM6 9h1v1h-1zM11 9h1v1h-1zM4 10h2v1h-2zM11 10h1v1h-1zM4 11h1v1h-1zM11 11h1v1h-1zM4 12h1v1h-1zM11 12h1v1h-1zM4 13h1v1h-1zM11 13h1v1h-1z"/></svg>
<svg class="a" style="left:750px;top:124px" width="32" height="32" viewBox="0 0 16 16" shape-rendering="crispEdges"><path fill="#a0a0a0" d="M1 4h1v1h-1zM5 4h1v1h-1zM11 4h1v1h-1zM15 4h1v1h-1zM1 5h1v1h-1zM5 5h1v1h-1zM11 5h1v1h-1zM15 5h1v1h-1zM1 6h1v1h-1zM5 6h1v1h-1zM11 6h1v1h-1zM15 6h1v1h-1zM1 7h1v1h-1zM5 7h1v1h-1zM11 7h1v1h-1zM15 7h1v1h-1zM1 8h1v1h-1zM5 8h1v1h-1zM11 8h1v1h-1zM15 8h1v1h-1zM1 9h1v1h-1zM2 9h1v1h-1zM3 9h1v1h-1zM4 9h1v1h-1zM5 9h1v1h-1zM11 9h1v1h-1zM12 9h1v1h-1zM13 9h1v1h-1zM14 9h1v1h-1zM15 9h1v1h-1zM5 10h1v1h-1zM11 10h1v1h-1zM5 11h1v1h-1zM11 11h1v1h-1zM5 12h1v1h-1zM11 12h1v1h-1zM5 13h1v1h-1zM11 13h1v1h-1zM5 14h1v1h-1zM11 14h1v1h-1z"/><path fill="#000" d="M0 3h1v1h-1zM4 3h1v1h-1zM10 3h1v1h-1zM14 3h1v1h-1zM0 4h1v1h-1zM4 4h1v1h-1zM10 4h1v1h-1zM14 4h1v1h-1zM0 5h1v1h-1zM4 5h1v1h-1zM10 5h1v1h-1zM14 5h1v1h-1zM0 6h1v1h-1zM4 6h1v1h-1zM10 6h1v1h-1zM14 6h1v1h-1zM0 7h1v1h-1zM4 7h1v1h-1zM10 7h1v1h-1zM14 7h1v1h-1zM0 8h5v1h-5zM10 8h5v1h-5zM4 9h1v1h-1zM10 9h1v1h-1zM4 10h1v1h-1zM10 10h1v1h-1zM4 11h1v1h-1zM10 11h1v1h-1zM4 12h1v1h-1zM10 12h1v1h-1zM4 13h1v1h-1zM10 13h1v1h-1z"/></svg>
<svg class="a" style="left:796px;top:124px" width="32" height="32" viewBox="0 0 16 16" shape-rendering="crispEdges"><path fill="#a0a0a0" d="M1 4h1v1h-1zM5 4h1v1h-1zM11 4h1v1h-1zM15 4h1v1h-1zM1 5h1v1h-1zM5 5h1v1h-1zM11 5h1v1h-1zM15 5h1v1h-1zM1 6h1v1h-1zM5 6h1v1h-1zM10 6h1v1h-1zM11 6h1v1h-1zM15 6h1v1h-1zM1 7h1v1h-1zM5 7h1v1h-1zM9 7h1v1h-1zM11 7h1v1h-1zM15 7h1v1h-1zM1 8h1v1h-1zM5 8h1v1h-1zM8 8h1v1h-1zM11 8h1v1h-1zM15 8h1v1h-1zM1 9h1v1h-1zM2 9h1v1h-1zM3 9h1v1h-1zM4 9h1v1h-1zM5 9h1v1h-1zM7 9h1v1h-1zM11 9h1v1h-1zM12 9h1v1h-1zM13 9h1v1h-1zM14 9h1v1h-1zM15 9h1v1h-1zM5 10h1v1h-1zM6 10h1v1h-1zM11 10h1v1h-1zM5 11h1v1h-1zM11 11h1v1h-1zM5 12h1v1h-1zM11 12h1v1h-1zM5 13h1v1h-1zM11 13h1v1h-1zM5 14h1v1h-1zM11 14h1v1h-1z"/><path fill="#000" d="M0 3h1v1h-1zM4 3h1v1h-1zM10 3h1v1h-1zM14 3h1v1h-1zM0 4h1v1h-1zM4 4h1v1h-1zM10 4h1v1h-1zM14 4h1v1h-1zM0 5h1v1h-1zM4 5h1v1h-1zM9 5h2v1h-2zM14 5h1v1h-1zM0 6h1v1h-1zM4 6h1v1h-1zM8 6h1v1h-1zM10 6h1v1h-1zM14 6h1v1h-1zM0 7h1v1h-1zM4 7h1v1h-1zM7 7h1v1h-1zM10 7h1v1h-1zM14 7h1v1h-1zM0 8h5v1h-5zM6 8h1v1h-1zM10 8h5v1h-5zM4 9h2v1h-2zM10 9h1v1h-1zM4 10h1v1h-1zM10 10h1v1h-1zM4 11h1v1h-1zM10 11h1v1h-1zM4 12h1v1h-1zM10 12h1v1h-1zM4 13h1v1h-1zM10 13h1v1h-1z"/></svg>
<svg class="a" style="left:842px;top:124px" width="32" height="32" viewBox="0 0 16 16" shape-rendering="crispEdges"><path fill="#a0a0a0" d="M8 3h1v1h-1zM8 4h1v1h-1zM8 5h1v1h-1zM8 6h1v1h-1zM8 7h1v1h-1zM8 8h1v1h-1zM8 9h1v1h-1zM8 10h1v1h-1zM8 11h1v1h-1zM8 12h1v1h-1zM8 13h1v1h-1zM8 14h1v1h-1zM8 15h1v1h-1z"/><path fill="#000" d="M7 2h1v1h-1zM7 3h1v1h-1zM7 4h1v1h-1zM7 5h1v1h-1zM7 6h1v1h-1zM7 7h1v1h-1zM7 8h1v1h-1zM7 9h1v1h-1zM7 10h1v1h-1zM7 11h1v1h-1zM7 12h1v1h-1zM7 13h1v1h-1zM7 14h1v1h-1z"/></svg>
<svg class="a" style="left:888px;top:124px" width="32" height="32" viewBox="0 0 16 16" shape-rendering="crispEdges"><path fill="#a0a0a0" d="M1 8h1v1h-1zM2 8h1v1h-1zM3 8h1v1h-1zM4 8h1v1h-1zM5 8h1v1h-1zM6 8h1v1h-1zM7 8h1v1h-1zM8 8h1v1h-1zM9 8h1v1h-1zM10 8h1v1h-1zM11 8h1v1h-1zM12 8h1v1h-1zM13 8h1v1h-1zM14 8h1v1h-1zM15 8h1v1h-1zM16 8h1v1h-1z"/><path fill="#000" d="M0 7h16v1h-16z"/></svg>
<svg class="a" style="left:934px;top:124px" width="32" height="32" viewBox="0 0 16 16" shape-rendering="crispEdges"><path fill="#a0a0a0" d="M7 4h1v1h-1zM8 4h1v1h-1zM9 4h1v1h-1zM10 4h1v1h-1zM5 5h1v1h-1zM6 5h1v1h-1zM11 5h1v1h-1zM12 5h1v1h-1zM4 6h1v1h-1zM13 6h1v1h-1zM4 7h1v1h-1zM13 7h1v1h-1zM4 8h1v1h-1zM13 8h1v1h-1zM1 9h1v1h-1zM2 9h1v1h-1zM3 9h1v1h-1zM4 9h1v1h-1zM13 9h1v1h-1zM14 9h1v1h-1zM15 9h1v1h-1zM16 9h1v1h-1zM4 10h1v1h-1zM13 10h1v1h-1zM4 11h1v1h-1zM13 11h1v1h-1zM4 12h1v1h-1zM13 12h1v1h-1zM5 13h1v1h-1zM6 13h1v1h-1zM11 13h1v1h-1zM12 13h1v1h-1zM7 14h1v1h-1zM8 14h1v1h-1zM9 14h1v1h-1zM10 14h1v1h-1z"/><path fill="#000" d="M6 3h4v1h-4zM4 4h2v1h-2zM10 4h2v1h-2zM3 5h1v1h-1zM12 5h1v1h-1zM3 6h1v1h-1zM12 6h1v1h-1zM3 7h1v1h-1zM12 7h1v1h-1zM0 8h4v1h-4zM12 8h4v1h-4zM3 9h1v1h-1zM12 9h1v1h-1zM3 10h1v1h-1zM12 10h1v1h-1zM3 11h1v1h-1zM12 11h1v1h-1zM4 12h2v1h-2zM10 12h2v1h-2zM6 13h4v1h-4z"/></svg>
<svg class="a" style="left:980px;top:124px" width="32" height="32" viewBox="0 0 16 16" shape-rendering="crispEdges"><path fill="#a0a0a0" d="M15 4h1v1h-1zM7 5h1v1h-1zM8 5h1v1h-1zM9 5h1v1h-1zM10 5h1v1h-1zM14 5h1v1h-1zM5 6h1v1h-1zM6 6h1v1h-1zM11 6h1v1h-1zM12 6h1v1h-1zM4 7h1v1h-1zM12 7h1v1h-1zM13 7h1v1h-1zM4 8h1v1h-1zM11 8h1v1h-1zM13 8h1v1h-1zM1 9h1v1h-1zM2 9h1v1h-1zM3 9h1v1h-1zM4 9h1v1h-1zM10 9h1v1h-1zM13 9h1v1h-1zM14 9h1v1h-1zM15 9h1v1h-1zM16 9h1v1h-1zM4 10h1v1h-1zM9 10h1v1h-1zM13 10h1v1h-1zM4 11h1v1h-1zM8 11h1v1h-1zM13 11h1v1h-1zM4 12h1v1h-1zM7 12h1v1h-1zM13 12h1v1h-1zM5 13h1v1h-1zM6 13h1v1h-1zM11 13h1v1h-1zM12 13h1v1h-1zM5 14h1v1h-1zM6 14h1v1h-1zM7 14h1v1h-1zM8 14h1v1h-1zM9 14h1v1h-1zM10 14h1v1h-1zM4 15h1v1h-1z"/><path fill="#000" d="M14 3h1v1h-1zM6 4h4v1h-4zM13 4h1v1h-1zM4 5h2v1h-2zM10 5h2v1h-2zM3 6h1v1h-1zM11 6h2v1h-2zM3 7h1v1h-1zM10 7h1v1h-1zM12 7h1v1h-1zM0 8h4v1h-4zM9 8h1v1h-1zM12 8h4v1h-4zM3 9h1v1h-1zM8 9h1v1h-1zM12 9h1v1h-1zM3 10h1v1h-1zM7 10h1v1h-1zM12 10h1v1h-1zM3 11h1v1h-1zM6 11h1v1h-1zM12 11h1v1h-1zM4 12h2v1h-2zM10 12h2v1h-2zM4 13h6v1h-6zM3 14h1v1h-1z"/></svg>
<svg class="a" style="left:1026px;top:124px" width="32" height="32" viewBox="0 0 16 16" shape-rendering="crispEdges"><path fill="#a0a0a0" d="M5 3h1v1h-1zM6 3h1v1h-1zM7 3h1v1h-1zM8 3h1v1h-1zM9 3h1v1h-1zM10 3h1v1h-1zM11 3h1v1h-1zM12 3h1v1h-1zM5 4h1v1h-1zM12 4h1v1h-1zM5 5h1v1h-1zM12 5h1v1h-1zM1 6h1v1h-1zM2 6h1v1h-1zM3 6h1v1h-1zM4 6h1v1h-1zM5 6h1v1h-1zM12 6h1v1h-1zM13 6h1v1h-1zM14 6h1v1h-1zM15 6h1v1h-1zM16 6h1v1h-1zM5 7h1v1h-1zM6 7h1v1h-1zM7 7h1v1h-1zM8 7h1v1h-1zM9 7h1v1h-1zM10 7h1v1h-1zM11 7h1v1h-1zM12 7h1v1h-1zM5 8h1v1h-1zM12 8h1v1h-1zM5 9h1v1h-1zM12 9h1v1h-1zM5 10h1v1h-1zM12 10h1v1h-1zM5 11h1v1h-1zM6 11h1v1h-1zM7 11h1v1h-1zM8 11h1v1h-1zM9 11h1v1h-1zM10 11h1v1h-1zM11 11h1v1h-1zM12 11h1v1h-1zM5 12h1v1h-1zM12 12h1v1h-1zM5 13h1v1h-1zM12 13h1v1h-1zM5 14h1v1h-1zM12 14h1v1h-1zM5 15h1v1h-1zM6 15h1v1h-1zM7 15h1v1h-1zM8 15h1v1h-1zM9 15h1v1h-1zM10 15h1v1h-1zM11 15h1v1h-1zM12 15h1v1h-1z"/><path fill="#000" d="M4 2h8v1h-8zM4 3h1v1h-1zM11 3h1v1h-1zM4 4h1v1h-1zM11 4h1v1h-1zM0 5h5v1h-5zM11 5h5v1h-5zM4 6h8v1h-8zM4 7h1v1h-1zM11 7h1v1h-1zM4 8h1v1h-1zM11 8h1v1h-1zM4 9h1v1h-1zM11 9h1v1h-1zM4 10h8v1h-8zM4 11h1v1h-1zM11 11h1v1h-1zM4 12h1v1h-1zM11 12h1v1h-1zM4 13h1v1h-1zM11 13h1v1h-1zM4 14h8v1h-8z"/></svg>
<svg class="a" style="left:1072px;top:124px" width="32" height="32" viewBox="0 0 16 16" shape-rendering="crispEdges"><path fill="#fff" d="M5 3h8v1h-8zM5 4h1v1h-1zM12 4h1v1h-1zM1 5h2v1h-2zM5 5h1v1h-1zM12 5h1v1h-1zM2 6h5v1h-5zM12 6h4v1h-4zM5 7h8v1h-8zM5 8h1v1h-1zM12 8h1v1h-1zM1 9h2v1h-2zM5 9h1v1h-1zM12 9h1v1h-1zM2 10h5v1h-5zM12 10h3v1h-3zM5 11h8v1h-8zM5 12h1v1h-1zM12 12h1v1h-1zM1 13h2v1h-2zM5 13h1v1h-1zM12 13h1v1h-1zM2 14h4v1h-4zM12 14h4v1h-4zM5 15h11v1h-11z"/><path fill="#a0a0a0" d="M4 2h8v1h-8zM4 3h1v1h-1zM11 3h1v1h-1zM0 4h2v1h-2zM4 4h1v1h-1zM11 4h1v1h-1zM1 5h5v1h-5zM11 5h4v1h-4zM4 6h8v1h-8zM4 7h1v1h-1zM11 7h1v1h-1zM0 8h2v1h-2zM4 8h1v1h-1zM11 8h1v1h-1zM1 9h5v1h-5zM11 9h3v1h-3zM4 10h8v1h-8zM4 11h1v1h-1zM11 11h1v1h-1zM0 12h2v1h-2zM4 12h1v1h-1zM11 12h1v1h-1zM1 13h4v1h-4zM11 13h4v1h-4zM4 14h11v1h-11z"/></svg>
<svg class="a" style="left:1118px;top:124px" width="32" height="32" viewBox="0 0 16 16" shape-rendering="crispEdges"><path fill="#fff" d="M11 3h6v1h-6zM11 4h1v1h-1zM1 5h11v1h-11zM2 6h2v1h-2zM11 6h1v1h-1zM4 7h1v1h-1zM11 7h1v1h-1zM4 8h2v1h-2zM11 8h6v1h-6zM4 9h3v1h-3zM11 9h1v1h-1zM4 10h4v1h-4zM9 10h3v1h-3zM4 11h3v1h-3zM11 11h1v1h-1zM4 12h2v1h-2zM11 12h1v1h-1zM4 13h1v1h-1zM11 13h1v1h-1zM11 14h6v1h-6z"/><path fill="#a0a0a0" d="M10 2h6v1h-6zM10 3h1v1h-1zM0 4h11v1h-11zM1 5h2v1h-2zM10 5h1v1h-1zM3 6h1v1h-1zM10 6h1v1h-1zM3 7h2v1h-2zM10 7h6v1h-6zM3 8h3v1h-3zM10 8h1v1h-1zM3 9h4v1h-4zM8 9h3v1h-3zM3 10h3v1h-3zM10 10h1v1h-1zM3 11h2v1h-2zM10 11h1v1h-1zM3 12h1v1h-1zM10 12h1v1h-1zM10 13h6v1h-6z"/></svg>
<svg class="a" style="left:1164px;top:124px" width="32" height="32" viewBox="0 0 16 16" shape-rendering="crispEdges"><path fill="#a0a0a0" d="M3 2h1v1h-1zM3 3h1v1h-1zM3 4h1v1h-1zM3 5h1v1h-1zM3 6h1v1h-1zM3 7h1v1h-1zM3 8h1v1h-1zM3 9h1v1h-1zM3 10h1v1h-1zM3 11h1v1h-1zM4 11h1v1h-1zM5 11h1v1h-1zM6 11h1v1h-1zM7 11h1v1h-1zM8 11h1v1h-1zM9 11h1v1h-1zM10 11h1v1h-1zM11 11h1v1h-1zM12 11h1v1h-1zM13 11h1v1h-1zM14 11h1v1h-1zM15 11h1v1h-1zM16 11h1v1h-1z"/><path fill="#000" d="M2 1h1v1h-1zM2 2h1v1h-1zM2 3h1v1h-1zM2 4h1v1h-1zM2 5h1v1h-1zM2 6h1v1h-1zM2 7h1v1h-1zM2 8h1v1h-1zM2 9h1v1h-1zM2 10h14v1h-14z"/></svg>
<svg class="a" style="left:1210px;top:124px" width="32" height="32" viewBox="0 0 16 16" shape-rendering="crispEdges"><path fill="#000" d="M2 1h1v1h-1zM2 2h1v1h-1zM2 3h1v1h-1zM2 4h1v1h-1zM2 5h1v1h-1zM2 6h1v1h-1zM2 7h1v1h-1zM2 8h1v1h-1zM2 9h1v1h-1zM2 10h5v1h-5zM9 10h1v1h-1zM12 10h4v1h-4z"/><path fill="#f00" d="M4 4h2v1h-2zM13 4h2v1h-2zM5 5h2v1h-2zM12 5h2v1h-2zM6 6h2v1h-2zM11 6h2v1h-2zM7 7h2v1h-2zM10 7h2v1h-2zM8 8h3v1h-3zM8 9h3v1h-3zM7 10h2v1h-2zM10 10h2v1h-2zM6 11h2v1h-2zM11 11h2v1h-2zM5 12h2v1h-2zM12 12h2v1h-2zM4 13h2v1h-2zM13 13h2v1h-2zM3 14h2v1h-2zM14 14h1v1h-1z"/></svg>
<div class="a" style="left:1272px;top:116px;width:2px;height:50px;background:#fff;"></div>
<div class="a" style="left:1276px;top:116px;width:2px;height:52px;background:#a0a0a0;"></div>
<div class="a" style="left:1272px;top:166px;width:6px;height:2px;background:#a0a0a0;"></div>
<div class="a" style="left:1272px;top:116px;width:4px;height:2px;background:#fff;"></div>
<div class="a" style="left:1280px;top:116px;width:2px;height:50px;background:#fff;"></div>
<div class="a" style="left:1284px;top:116px;width:2px;height:52px;background:#a0a0a0;"></div>
<div class="a" style="left:1280px;top:166px;width:6px;height:2px;background:#a0a0a0;"></div>
<div class="a" style="left:1280px;top:116px;width:4px;height:2px;background:#fff;"></div>
<div class="a" style="left:1266px;top:170px;width:653px;height:2px;background:#a0a0a0;"></div>
<div class="a" style="left:1266px;top:172px;width:655px;height:2px;background:#fff;"></div>
<div class="a" style="left:1917px;top:114px;width:2px;height:58px;background:#a0a0a0;"></div>
<div class="a" style="left:1919px;top:114px;width:2px;height:58px;background:#fff;"></div>
<svg class="a" style="left:1294px;top:124px" width="32" height="32" viewBox="0 0 16 16" shape-rendering="crispEdges"><path fill="#fff" d="M3 2h12v1h-12zM3 3h1v1h-1zM9 3h1v1h-1zM10 3h1v1h-1zM11 3h4v1h-4zM3 4h1v1h-1zM9 4h5v1h-5zM3 5h1v1h-1zM10 5h6v1h-6zM3 6h1v1h-1zM10 6h6v1h-6zM3 7h1v1h-1zM9 7h6v1h-6zM3 8h1v1h-1zM10 8h5v1h-5zM3 9h7v1h-7zM11 9h4v1h-4zM2 12h1v1h-1zM4 12h3v1h-3zM9 12h3v1h-3zM14 12h1v1h-1zM1 13h1v1h-1zM3 13h1v1h-1zM6 13h2v1h-2zM9 13h1v1h-1zM12 13h2v1h-2zM15 13h1v1h-1zM1 14h1v1h-1zM4 14h1v1h-1zM6 14h1v1h-1zM8 14h1v1h-1zM10 14h1v1h-1zM13 14h1v1h-1zM15 14h1v1h-1zM1 15h1v1h-1zM4 15h3v1h-3zM9 15h3v1h-3zM15 15h1v1h-1zM5 16h3v1h-3zM11 16h3v1h-3z"/><path fill="#a0a0a0" d="M2 1h12v1h-12zM2 2h1v1h-1zM8 2h1v1h-1zM10 2h4v1h-4zM2 3h1v1h-1zM8 3h5v1h-5zM2 4h1v1h-1zM9 4h6v1h-6zM2 5h1v1h-1zM9 5h6v1h-6zM2 6h1v1h-1zM8 6h6v1h-6zM2 7h1v1h-1zM9 7h5v1h-5zM2 8h7v1h-7zM10 8h4v1h-4zM1 11h1v1h-1zM3 11h3v1h-3zM8 11h3v1h-3zM13 11h1v1h-1zM0 12h1v1h-1zM2 12h1v1h-1zM5 12h2v1h-2zM8 12h1v1h-1zM11 12h2v1h-2zM14 12h1v1h-1zM0 13h1v1h-1zM3 13h1v1h-1zM5 13h1v1h-1zM7 13h1v1h-1zM9 13h1v1h-1zM12 13h1v1h-1zM14 13h1v1h-1zM0 14h1v1h-1zM3 14h3v1h-3zM8 14h3v1h-3zM14 14h1v1h-1zM4 15h3v1h-3zM10 15h3v1h-3z"/><path fill="#fff" d="M9 2h1v1h-1z"/></svg>
<div class="a" style="left:1342px;top:120px;width:2px;height:44px;background:#a0a0a0;"></div>
<div class="a" style="left:1344px;top:120px;width:2px;height:44px;background:#fff;"></div>
<svg class="a" style="left:1356px;top:124px" width="32" height="32" viewBox="0 0 16 16" shape-rendering="crispEdges"><path fill="#000080" d="M7 1h2v1h-2zM7 2h2v1h-2zM6 3h3v1h-3zM5 4h6v1h-6zM5 5h6v1h-6zM6 6h4v1h-4zM7 7h2v1h-2z"/><path fill="#000" d="M10 1h2v1h-2zM6 2h1v1h-1zM12 2h1v1h-1zM5 3h1v1h-1zM13 3h1v1h-1zM3 4h2v1h-2zM13 4h1v1h-1zM1 5h2v1h-2zM14 5h1v1h-1zM1 6h1v1h-1zM3 6h1v1h-1zM13 6h2v1h-2zM2 7h2v1h-2zM11 7h2v1h-2zM14 7h1v1h-1zM1 8h1v1h-1zM4 8h1v1h-1zM10 8h1v1h-1zM14 8h1v1h-1zM1 9h2v1h-2zM5 9h2v1h-2zM9 9h1v1h-1zM12 9h2v1h-2zM1 10h1v1h-1zM3 10h1v1h-1zM7 10h2v1h-2zM11 10h2v1h-2zM14 10h1v1h-1zM2 11h1v1h-1zM4 11h2v1h-2zM10 11h2v1h-2zM14 11h1v1h-1zM3 12h1v1h-1zM6 12h2v1h-2zM9 12h2v1h-2zM13 12h1v1h-1zM4 13h2v1h-2zM8 13h2v1h-2zM12 13h1v1h-1zM6 14h2v1h-2zM10 14h2v1h-2zM7 15h3v1h-3z"/><path fill="#fff" d="M11 4h2v1h-2z"/></svg>
<svg class="a" style="left:1402px;top:124px" width="32" height="32" viewBox="0 0 16 16" shape-rendering="crispEdges"><path fill="#000080" d="M2 2h1v1h-1zM5 2h1v1h-1zM9 2h1v1h-1zM13 2h1v1h-1zM4 3h1v1h-1zM7 3h1v1h-1zM11 3h1v1h-1zM2 4h1v1h-1zM5 4h1v1h-1zM9 4h1v1h-1zM13 4h1v1h-1zM7 5h1v1h-1zM5 6h1v1h-1zM11 6h1v1h-1zM4 7h5v1h-5zM10 7h5v1h-5zM5 8h3v1h-3zM11 8h3v1h-3zM6 9h1v1h-1zM12 9h1v1h-1z"/><path fill="#000" d="M1 6h1v1h-1zM15 6h1v1h-1zM1 7h1v1h-1zM15 7h1v1h-1zM1 8h1v1h-1zM15 8h1v1h-1zM1 9h1v1h-1zM15 9h1v1h-1zM1 10h1v1h-1zM15 10h1v1h-1zM1 11h1v1h-1zM3 11h1v1h-1zM5 11h1v1h-1zM7 11h1v1h-1zM9 11h1v1h-1zM11 11h1v1h-1zM13 11h1v1h-1zM15 11h1v1h-1zM1 12h1v1h-1zM15 12h1v1h-1zM1 13h1v1h-1zM3 13h1v1h-1zM5 13h1v1h-1zM7 13h1v1h-1zM9 13h1v1h-1zM11 13h1v1h-1zM13 13h1v1h-1zM15 13h1v1h-1zM1 14h1v1h-1zM15 14h1v1h-1zM1 15h15v1h-15z"/></svg>
<div class="a" style="left:1450px;top:120px;width:2px;height:44px;background:#a0a0a0;"></div>
<div class="a" style="left:1452px;top:120px;width:2px;height:44px;background:#fff;"></div>
<svg class="a" style="left:1464px;top:124px" width="32" height="32" viewBox="0 0 16 16" shape-rendering="crispEdges"><path fill="#fff" d="M3 2h4v1h-4zM2 3h6v1h-6zM2 4h6v1h-6zM1 5h15v1h-15zM1 6h8v1h-8zM15 6h1v1h-1zM1 7h8v1h-8zM10 7h4v1h-4zM15 7h1v1h-1zM1 8h8v1h-8zM13 8h1v1h-1zM15 8h1v1h-1zM7 9h1v1h-1zM12 9h1v1h-1zM15 9h1v1h-1zM7 10h1v1h-1zM11 10h1v1h-1zM15 10h1v1h-1zM7 11h1v1h-1zM10 11h1v1h-1zM15 11h1v1h-1zM7 12h1v1h-1zM10 12h4v1h-4zM15 12h1v1h-1zM7 13h1v1h-1zM15 13h1v1h-1zM7 14h1v1h-1zM10 14h4v1h-4zM15 14h1v1h-1zM7 15h9v1h-9z"/><path fill="#a0a0a0" d="M2 1h4v1h-4zM1 2h6v1h-6zM1 3h6v1h-6zM0 4h15v1h-15zM0 5h8v1h-8zM14 5h1v1h-1zM0 6h8v1h-8zM9 6h4v1h-4zM14 6h1v1h-1zM0 7h8v1h-8zM12 7h1v1h-1zM14 7h1v1h-1zM6 8h1v1h-1zM11 8h1v1h-1zM14 8h1v1h-1zM6 9h1v1h-1zM10 9h1v1h-1zM14 9h1v1h-1zM6 10h1v1h-1zM9 10h1v1h-1zM14 10h1v1h-1zM6 11h1v1h-1zM9 11h4v1h-4zM14 11h1v1h-1zM6 12h1v1h-1zM14 12h1v1h-1zM6 13h1v1h-1zM9 13h4v1h-4zM14 13h1v1h-1zM6 14h9v1h-9z"/></svg>
<svg class="a" style="left:1510px;top:124px" width="32" height="32" viewBox="0 0 16 16" shape-rendering="crispEdges"><path fill="#fff" d="M3 2h4v1h-4zM2 3h6v1h-6zM2 4h6v1h-6zM1 5h15v1h-15zM1 6h8v1h-8zM15 6h1v1h-1zM1 7h8v1h-8zM10 7h1v1h-1zM13 7h1v1h-1zM15 7h1v1h-1zM1 8h8v1h-8zM10 8h1v1h-1zM13 8h1v1h-1zM15 8h1v1h-1zM7 9h1v1h-1zM11 9h2v1h-2zM15 9h1v1h-1zM7 10h1v1h-1zM11 10h2v1h-2zM15 10h1v1h-1zM7 11h1v1h-1zM10 11h1v1h-1zM13 11h1v1h-1zM15 11h1v1h-1zM7 12h1v1h-1zM10 12h1v1h-1zM13 12h1v1h-1zM15 12h1v1h-1zM7 13h1v1h-1zM9 13h1v1h-1zM14 13h2v1h-2zM7 14h1v1h-1zM15 14h1v1h-1zM7 15h9v1h-9z"/><path fill="#a0a0a0" d="M2 1h4v1h-4zM1 2h6v1h-6zM1 3h6v1h-6zM0 4h15v1h-15zM0 5h8v1h-8zM14 5h1v1h-1zM0 6h8v1h-8zM9 6h1v1h-1zM12 6h1v1h-1zM14 6h1v1h-1zM0 7h8v1h-8zM9 7h1v1h-1zM12 7h1v1h-1zM14 7h1v1h-1zM6 8h1v1h-1zM10 8h2v1h-2zM14 8h1v1h-1zM6 9h1v1h-1zM10 9h2v1h-2zM14 9h1v1h-1zM6 10h1v1h-1zM9 10h1v1h-1zM12 10h1v1h-1zM14 10h1v1h-1zM6 11h1v1h-1zM9 11h1v1h-1zM12 11h1v1h-1zM14 11h1v1h-1zM6 12h1v1h-1zM8 12h1v1h-1zM13 12h2v1h-2zM6 13h1v1h-1zM14 13h1v1h-1zM6 14h9v1h-9z"/></svg>
<svg class="a" style="left:1556px;top:124px" width="32" height="32" viewBox="0 0 16 16" shape-rendering="crispEdges"><path fill="#fff" d="M3 2h4v1h-4zM2 3h6v1h-6zM2 4h6v1h-6zM1 5h15v1h-15zM1 6h8v1h-8zM15 6h1v1h-1zM1 7h8v1h-8zM13 7h1v1h-1zM15 7h1v1h-1zM1 8h8v1h-8zM13 8h1v1h-1zM15 8h1v1h-1zM7 9h1v1h-1zM12 9h1v1h-1zM15 9h1v1h-1zM3 10h1v1h-1zM7 10h1v1h-1zM12 10h1v1h-1zM15 10h1v1h-1zM2 11h4v1h-4zM7 11h1v1h-1zM10 11h2v1h-2zM15 11h1v1h-1zM3 12h1v1h-1zM7 12h1v1h-1zM10 12h2v1h-2zM15 12h1v1h-1zM2 13h3v1h-3zM7 13h1v1h-1zM15 13h1v1h-1zM3 14h1v1h-1zM7 14h1v1h-1zM15 14h1v1h-1zM7 15h9v1h-9z"/><path fill="#a0a0a0" d="M2 1h4v1h-4zM1 2h6v1h-6zM1 3h6v1h-6zM0 4h15v1h-15zM0 5h8v1h-8zM14 5h1v1h-1zM0 6h8v1h-8zM12 6h1v1h-1zM14 6h1v1h-1zM0 7h8v1h-8zM12 7h1v1h-1zM14 7h1v1h-1zM6 8h1v1h-1zM11 8h1v1h-1zM14 8h1v1h-1zM2 9h1v1h-1zM6 9h1v1h-1zM11 9h1v1h-1zM14 9h1v1h-1zM1 10h4v1h-4zM6 10h1v1h-1zM9 10h2v1h-2zM14 10h1v1h-1zM2 11h1v1h-1zM6 11h1v1h-1zM9 11h2v1h-2zM14 11h1v1h-1zM1 12h3v1h-3zM6 12h1v1h-1zM14 12h1v1h-1zM2 13h1v1h-1zM6 13h1v1h-1zM14 13h1v1h-1zM6 14h9v1h-9z"/></svg>
<svg class="a" style="left:1602px;top:124px" width="32" height="32" viewBox="0 0 16 16" shape-rendering="crispEdges"><path fill="#fff" d="M3 2h4v1h-4zM2 3h6v1h-6zM2 4h6v1h-6zM1 5h15v1h-15zM1 6h8v1h-8zM15 6h1v1h-1zM1 7h8v1h-8zM15 7h1v1h-1zM1 8h8v1h-8zM15 8h1v1h-1zM7 9h1v1h-1zM15 9h1v1h-1zM4 10h1v1h-1zM7 10h1v1h-1zM10 10h3v1h-3zM15 10h1v1h-1zM1 11h7v1h-7zM10 11h3v1h-3zM15 11h1v1h-1zM4 12h1v1h-1zM7 12h1v1h-1zM15 12h1v1h-1zM7 13h1v1h-1zM15 13h1v1h-1zM7 14h1v1h-1zM15 14h1v1h-1zM7 15h9v1h-9z"/><path fill="#a0a0a0" d="M2 1h4v1h-4zM1 2h6v1h-6zM1 3h6v1h-6zM0 4h15v1h-15zM0 5h8v1h-8zM14 5h1v1h-1zM0 6h8v1h-8zM14 6h1v1h-1zM0 7h8v1h-8zM14 7h1v1h-1zM6 8h1v1h-1zM14 8h1v1h-1zM3 9h1v1h-1zM6 9h1v1h-1zM9 9h3v1h-3zM14 9h1v1h-1zM0 10h7v1h-7zM9 10h3v1h-3zM14 10h1v1h-1zM3 11h1v1h-1zM6 11h1v1h-1zM14 11h1v1h-1zM6 12h1v1h-1zM14 12h1v1h-1zM6 13h1v1h-1zM14 13h1v1h-1zM6 14h9v1h-9z"/></svg>
<div class="a" style="left:1650px;top:120px;width:2px;height:44px;background:#a0a0a0;"></div>
<div class="a" style="left:1652px;top:120px;width:2px;height:44px;background:#fff;"></div>
<svg class="a" style="left:1664px;top:124px" width="32" height="32" viewBox="0 0 16 16" shape-rendering="crispEdges"><path fill="#000" d="M0 1h5v1h-5zM0 2h1v1h-1zM4 2h1v1h-1zM0 3h5v1h-5zM9 3h1v1h-1zM1 4h1v1h-1zM3 4h1v1h-1zM9 4h1v1h-1zM1 5h1v1h-1zM3 5h4v1h-4zM9 5h1v1h-1zM1 6h1v1h-1zM3 6h1v1h-1zM7 6h1v1h-1zM9 6h1v1h-1zM1 7h1v1h-1zM3 7h5v1h-5zM9 7h1v1h-1zM1 8h1v1h-1zM3 8h1v1h-1zM9 8h1v1h-1zM1 9h1v1h-1zM3 9h5v1h-5zM9 9h1v1h-1zM1 10h1v1h-1zM3 10h1v1h-1zM7 10h1v1h-1zM9 10h1v1h-1zM1 11h1v1h-1zM3 11h5v1h-5zM9 11h1v1h-1zM1 12h1v1h-1zM3 12h1v1h-1zM9 12h1v1h-1zM1 13h1v1h-1zM3 13h5v1h-5zM9 13h1v1h-1zM1 14h3v1h-3zM7 14h1v1h-1zM9 14h1v1h-1zM2 15h6v1h-6zM9 15h1v1h-1z"/><path fill="#ff0" d="M1 2h3v1h-3zM4 6h3v1h-3zM4 10h3v1h-3zM4 14h3v1h-3z"/><path fill="#a0a0a0" d="M5 2h1v1h-1zM5 3h1v1h-1zM8 6h1v1h-1zM8 7h1v1h-1zM8 10h1v1h-1zM8 11h1v1h-1zM8 14h1v1h-1z"/><path fill="#000080" d="M11 3h5v1h-5zM11 4h1v1h-1zM15 4h1v1h-1zM11 5h1v1h-1zM15 5h1v1h-1zM11 6h5v1h-5zM11 8h5v1h-5zM11 9h1v1h-1zM15 9h1v1h-1zM11 10h1v1h-1zM15 10h1v1h-1zM11 11h5v1h-5zM11 13h5v1h-5zM11 14h1v1h-1zM15 14h1v1h-1zM11 15h5v1h-5z"/><path fill="#fff" d="M2 4h1v1h-1zM2 5h1v1h-1zM2 6h1v1h-1zM2 7h1v1h-1zM2 8h1v1h-1zM2 9h1v1h-1zM2 10h1v1h-1zM2 11h1v1h-1zM2 12h1v1h-1zM2 13h1v1h-1z"/><path fill="#0ff" d="M12 4h3v1h-3zM12 5h3v1h-3zM12 9h3v1h-3zM12 10h3v1h-3zM12 14h3v1h-3z"/></svg>
<div class="a" style="left:1712px;top:120px;width:2px;height:44px;background:#a0a0a0;"></div>
<div class="a" style="left:1714px;top:120px;width:2px;height:44px;background:#fff;"></div>
<svg class="a" style="left:1726px;top:124px" width="32" height="32" viewBox="0 0 16 16" shape-rendering="crispEdges"><path fill="#000" d="M0 1h15v1h-15zM0 2h1v1h-1zM14 2h1v1h-1zM0 3h1v1h-1zM7 3h1v1h-1zM11 3h1v1h-1zM14 3h1v1h-1zM0 4h1v1h-1zM4 4h4v1h-4zM11 4h4v1h-4zM0 5h1v1h-1zM7 5h1v1h-1zM11 5h1v1h-1zM14 5h1v1h-1zM0 6h1v1h-1zM7 6h1v1h-1zM11 6h1v1h-1zM14 6h1v1h-1zM0 7h1v1h-1zM14 7h1v1h-1zM0 8h1v1h-1zM14 8h1v1h-1zM0 9h1v1h-1zM14 9h1v1h-1zM1 11h3v1h-3zM6 11h3v1h-3zM11 11h3v1h-3zM0 12h1v1h-1zM2 12h4v1h-4zM7 12h3v1h-3zM11 12h2v1h-2zM14 12h1v1h-1zM0 13h1v1h-1zM4 13h1v1h-1zM7 13h1v1h-1zM10 13h1v1h-1zM14 13h1v1h-1zM0 14h1v1h-1zM4 14h1v1h-1zM7 14h1v1h-1zM10 14h1v1h-1zM14 14h1v1h-1zM1 15h3v1h-3zM8 15h3v1h-3z"/><path fill="#0ff" d="M1 2h2v1h-2zM4 2h10v1h-10zM1 3h2v1h-2zM4 3h3v1h-3zM8 3h3v1h-3zM12 3h2v1h-2zM1 4h2v1h-2zM8 4h3v1h-3zM1 5h2v1h-2zM4 5h3v1h-3zM8 5h3v1h-3zM12 5h2v1h-2zM1 6h2v1h-2zM4 6h3v1h-3zM8 6h3v1h-3zM12 6h2v1h-2zM1 7h2v1h-2zM4 7h10v1h-10zM1 8h2v1h-2zM4 8h10v1h-10zM1 9h2v1h-2zM4 9h10v1h-10zM2 10h11v1h-11zM2 13h1v1h-1zM8 13h1v1h-1zM3 14h1v1h-1zM9 14h1v1h-1z"/><path fill="#008000" d="M3 2h1v1h-1zM3 3h1v1h-1zM3 4h1v1h-1zM3 5h1v1h-1zM3 6h1v1h-1zM3 7h1v1h-1zM3 8h1v1h-1zM3 9h1v1h-1z"/><path fill="#fff" d="M1 13h1v1h-1zM3 13h1v1h-1zM9 13h1v1h-1zM1 14h2v1h-2zM8 14h1v1h-1z"/></svg>
<svg class="a" style="left:1772px;top:124px" width="32" height="32" viewBox="0 0 16 16" shape-rendering="crispEdges"><path fill="#fff" d="M1 2h15v1h-15zM1 3h15v1h-15zM1 4h5v1h-5zM1 5h15v1h-15zM1 6h5v1h-5zM7 6h1v1h-1zM14 6h2v1h-2zM1 7h5v1h-5zM7 7h1v1h-1zM9 7h4v1h-4zM14 7h1v1h-1zM1 8h5v1h-5zM7 8h1v1h-1zM12 8h1v1h-1zM14 8h1v1h-1zM1 9h5v1h-5zM7 9h1v1h-1zM11 9h1v1h-1zM14 9h1v1h-1zM1 10h5v1h-5zM7 10h1v1h-1zM10 10h1v1h-1zM14 10h1v1h-1zM1 11h5v1h-5zM7 11h1v1h-1zM9 11h4v1h-4zM14 11h1v1h-1zM1 12h5v1h-5zM7 12h1v1h-1zM14 12h1v1h-1zM1 13h5v1h-5zM7 13h1v1h-1zM9 13h4v1h-4zM14 13h1v1h-1zM1 14h5v1h-5zM7 14h8v1h-8zM1 15h4v1h-4z"/><path fill="#a0a0a0" d="M0 1h15v1h-15zM0 2h15v1h-15zM0 3h5v1h-5zM0 4h15v1h-15zM0 5h5v1h-5zM6 5h1v1h-1zM13 5h2v1h-2zM0 6h5v1h-5zM6 6h1v1h-1zM8 6h4v1h-4zM13 6h1v1h-1zM0 7h5v1h-5zM6 7h1v1h-1zM11 7h1v1h-1zM13 7h1v1h-1zM0 8h5v1h-5zM6 8h1v1h-1zM10 8h1v1h-1zM13 8h1v1h-1zM0 9h5v1h-5zM6 9h1v1h-1zM9 9h1v1h-1zM13 9h1v1h-1zM0 10h5v1h-5zM6 10h1v1h-1zM8 10h4v1h-4zM13 10h1v1h-1zM0 11h5v1h-5zM6 11h1v1h-1zM13 11h1v1h-1zM0 12h5v1h-5zM6 12h1v1h-1zM8 12h4v1h-4zM13 12h1v1h-1zM0 13h5v1h-5zM6 13h8v1h-8zM0 14h4v1h-4z"/></svg>
<svg class="a" style="left:1818px;top:124px" width="32" height="32" viewBox="0 0 16 16" shape-rendering="crispEdges"><path fill="#fff" d="M1 2h15v1h-15zM1 3h15v1h-15zM1 4h5v1h-5zM1 5h15v1h-15zM1 6h5v1h-5zM7 6h1v1h-1zM14 6h2v1h-2zM1 7h5v1h-5zM7 7h1v1h-1zM9 7h1v1h-1zM12 7h1v1h-1zM14 7h1v1h-1zM1 8h5v1h-5zM7 8h1v1h-1zM9 8h1v1h-1zM12 8h1v1h-1zM14 8h1v1h-1zM1 9h5v1h-5zM7 9h1v1h-1zM10 9h2v1h-2zM14 9h1v1h-1zM1 10h5v1h-5zM7 10h1v1h-1zM10 10h2v1h-2zM14 10h1v1h-1zM1 11h5v1h-5zM7 11h1v1h-1zM9 11h1v1h-1zM12 11h1v1h-1zM14 11h1v1h-1zM1 12h5v1h-5zM7 12h1v1h-1zM9 12h1v1h-1zM12 12h1v1h-1zM14 12h1v1h-1zM1 13h5v1h-5zM7 13h1v1h-1zM14 13h1v1h-1zM1 14h5v1h-5zM7 14h8v1h-8zM1 15h4v1h-4z"/><path fill="#a0a0a0" d="M0 1h15v1h-15zM0 2h15v1h-15zM0 3h5v1h-5zM0 4h15v1h-15zM0 5h5v1h-5zM6 5h1v1h-1zM13 5h2v1h-2zM0 6h5v1h-5zM6 6h1v1h-1zM8 6h1v1h-1zM11 6h1v1h-1zM13 6h1v1h-1zM0 7h5v1h-5zM6 7h1v1h-1zM8 7h1v1h-1zM11 7h1v1h-1zM13 7h1v1h-1zM0 8h5v1h-5zM6 8h1v1h-1zM9 8h2v1h-2zM13 8h1v1h-1zM0 9h5v1h-5zM6 9h1v1h-1zM9 9h2v1h-2zM13 9h1v1h-1zM0 10h5v1h-5zM6 10h1v1h-1zM8 10h1v1h-1zM11 10h1v1h-1zM13 10h1v1h-1zM0 11h5v1h-5zM6 11h1v1h-1zM8 11h1v1h-1zM11 11h1v1h-1zM13 11h1v1h-1zM0 12h5v1h-5zM6 12h1v1h-1zM13 12h1v1h-1zM0 13h5v1h-5zM6 13h8v1h-8zM0 14h4v1h-4z"/></svg>
<svg class="a" style="left:1864px;top:124px" width="32" height="32" viewBox="0 0 16 16" shape-rendering="crispEdges"><path fill="#fff" d="M1 2h15v1h-15zM1 3h15v1h-15zM1 4h5v1h-5zM1 5h15v1h-15zM1 6h5v1h-5zM7 6h1v1h-1zM14 6h2v1h-2zM1 7h5v1h-5zM7 7h1v1h-1zM12 7h1v1h-1zM14 7h1v1h-1zM1 8h5v1h-5zM7 8h1v1h-1zM12 8h1v1h-1zM14 8h1v1h-1zM1 9h5v1h-5zM7 9h1v1h-1zM11 9h1v1h-1zM14 9h1v1h-1zM1 10h5v1h-5zM7 10h1v1h-1zM11 10h1v1h-1zM14 10h1v1h-1zM1 11h5v1h-5zM7 11h1v1h-1zM9 11h2v1h-2zM14 11h1v1h-1zM1 12h5v1h-5zM7 12h1v1h-1zM9 12h2v1h-2zM14 12h1v1h-1zM1 13h5v1h-5zM7 13h1v1h-1zM14 13h1v1h-1zM1 14h5v1h-5zM7 14h8v1h-8zM1 15h4v1h-4z"/><path fill="#a0a0a0" d="M0 1h15v1h-15zM0 2h15v1h-15zM0 3h5v1h-5zM0 4h15v1h-15zM0 5h5v1h-5zM6 5h1v1h-1zM13 5h2v1h-2zM0 6h5v1h-5zM6 6h1v1h-1zM11 6h1v1h-1zM13 6h1v1h-1zM0 7h5v1h-5zM6 7h1v1h-1zM11 7h1v1h-1zM13 7h1v1h-1zM0 8h5v1h-5zM6 8h1v1h-1zM10 8h1v1h-1zM13 8h1v1h-1zM0 9h5v1h-5zM6 9h1v1h-1zM10 9h1v1h-1zM13 9h1v1h-1zM0 10h5v1h-5zM6 10h1v1h-1zM8 10h2v1h-2zM13 10h1v1h-1zM0 11h5v1h-5zM6 11h1v1h-1zM8 11h2v1h-2zM13 11h1v1h-1zM0 12h5v1h-5zM6 12h1v1h-1zM13 12h1v1h-1zM0 13h5v1h-5zM6 13h8v1h-8zM0 14h4v1h-4z"/></svg>
<div class="a" style="left:0px;top:176px;width:2px;height:52px;background:#fff;"></div>
<div class="a" style="left:2px;top:176px;width:2px;height:52px;background:#a0a0a0;"></div>
<div class="a" style="left:0px;top:226px;width:4px;height:2px;background:#a0a0a0;"></div>
<div class="a" style="left:0px;top:230px;width:851px;height:2px;background:#a0a0a0;"></div>
<div class="a" style="left:0px;top:232px;width:853px;height:2px;background:#fff;"></div>
<div class="a" style="left:849px;top:174px;width:2px;height:58px;background:#a0a0a0;"></div>
<div class="a" style="left:851px;top:174px;width:2px;height:58px;background:#fff;"></div>
<div class="a" style="left:6px;top:180px;width:46px;height:44px;border:2px solid;border-color:#a0a0a0 #fff #fff #a0a0a0;background:repeating-conic-gradient(#fff 0 25%,#f0f0f0 0 50%) 0 0/4px 4px"></div>
<svg class="a" style="left:13px;top:184px" width="32" height="32" viewBox="0 0 16 16" shape-rendering="crispEdges"><path fill="#000080" d="M0.5 3h13v1h-13zM0.5 4h1v1h-1zM2.5 4h11v1h-11zM0.5 5h13v1h-13z"/><path fill="#fff" d="M1.5 4h1v1h-1zM1.5 6h3v1h-3zM5.5 6h7v1h-7zM1.5 7h3v1h-3zM5.5 7h7v1h-7zM1.5 8h3v1h-3zM5.5 8h2v1h-2zM10.5 8h2v1h-2zM1.5 9h3v1h-3zM5.5 9h1v1h-1zM8.5 9h1v1h-1zM11.5 9h1v1h-1zM1.5 10h3v1h-3zM7.5 10h1v1h-1zM9.5 10h1v1h-1zM1.5 11h3v1h-3zM6.5 11h1v1h-1zM8.5 11h1v1h-1zM10.5 11h1v1h-1zM12.5 11h1v1h-1zM1.5 12h3v1h-3zM7.5 12h1v1h-1zM9.5 12h1v1h-1zM11.5 12h1v1h-1zM13.5 12h1v1h-1zM6.5 13h1v1h-1zM8.5 13h1v1h-1zM10.5 13h1v1h-1zM12.5 13h1v1h-1zM7.5 14h1v1h-1zM9.5 14h1v1h-1zM11.5 14h1v1h-1zM13.5 14h1v1h-1z"/><path fill="#000" d="M0.5 6h1v1h-1zM4.5 6h1v1h-1zM12.5 6h1v1h-1zM0.5 7h1v1h-1zM4.5 7h1v1h-1zM12.5 7h1v1h-1zM0.5 8h1v1h-1zM4.5 8h1v1h-1zM12.5 8h1v1h-1zM0.5 9h1v1h-1zM4.5 9h1v1h-1zM12.5 9h1v1h-1zM0.5 10h1v1h-1zM4.5 10h1v1h-1zM0.5 11h1v1h-1zM4.5 11h1v1h-1zM15.5 11h1v1h-1zM0.5 12h1v1h-1zM4.5 12h1v1h-1zM15.5 12h1v1h-1zM0.5 13h5v1h-5zM15.5 13h1v1h-1zM15.5 14h1v1h-1zM15.5 15h1v1h-1zM6.5 16h10v1h-10z"/><path fill="#a0a0a0" d="M7.5 8h3v1h-3zM6.5 9h1v1h-1zM10.5 9h1v1h-1zM5.5 10h1v1h-1zM11.5 10h4v1h-4zM5.5 11h1v1h-1zM14.5 11h1v1h-1zM5.5 12h1v1h-1zM14.5 12h1v1h-1zM5.5 13h1v1h-1zM14.5 13h1v1h-1zM5.5 14h1v1h-1zM14.5 14h1v1h-1zM5.5 15h10v1h-10z"/><path fill="#ff0" d="M7.5 9h1v1h-1zM9.5 9h1v1h-1zM6.5 10h1v1h-1zM8.5 10h1v1h-1zM10.5 10h1v1h-1zM7.5 11h1v1h-1zM9.5 11h1v1h-1zM11.5 11h1v1h-1zM13.5 11h1v1h-1zM6.5 12h1v1h-1zM8.5 12h1v1h-1zM10.5 12h1v1h-1zM12.5 12h1v1h-1zM7.5 13h1v1h-1zM9.5 13h1v1h-1zM11.5 13h1v1h-1zM13.5 13h1v1h-1zM6.5 14h1v1h-1zM8.5 14h1v1h-1zM10.5 14h1v1h-1zM12.5 14h1v1h-1z"/></svg>
<svg class="a" style="left:59px;top:184px" width="32" height="32" viewBox="0 0 16 16" shape-rendering="crispEdges"><path fill="#000080" d="M1.5 1h14v1h-14zM1.5 2h14v1h-14z"/><path fill="#000" d="M1.5 3h1v1h-1zM14.5 3h1v1h-1zM1.5 4h1v1h-1zM4.5 4h4v1h-4zM14.5 4h1v1h-1zM1.5 5h1v1h-1zM3.5 5h1v1h-1zM6.5 5h3v1h-3zM14.5 5h1v1h-1zM1.5 6h1v1h-1zM4.5 6h1v1h-1zM8.5 6h1v1h-1zM14.5 6h1v1h-1zM1.5 7h1v1h-1zM5.5 7h1v1h-1zM9.5 7h1v1h-1zM14.5 7h1v1h-1zM1.5 8h1v1h-1zM5.5 8h2v1h-2zM9.5 8h2v1h-2zM14.5 8h1v1h-1zM1.5 9h1v1h-1zM7.5 9h1v1h-1zM11.5 9h1v1h-1zM14.5 9h1v1h-1zM1.5 10h1v1h-1zM6.5 10h1v1h-1zM8.5 10h1v1h-1zM11.5 10h1v1h-1zM14.5 10h1v1h-1zM1.5 11h1v1h-1zM5.5 11h1v1h-1zM9.5 11h2v1h-2zM14.5 11h1v1h-1zM1.5 12h2v1h-2zM4.5 12h11v1h-11zM3.5 13h1v1h-1zM2.5 14h1v1h-1zM1.5 15h1v1h-1zM0.5 16h1v1h-1z"/><path fill="#fff" d="M2.5 3h12v1h-12zM2.5 4h2v1h-2zM8.5 4h6v1h-6zM2.5 5h1v1h-1zM9.5 5h5v1h-5zM2.5 6h2v1h-2zM9.5 6h5v1h-5zM2.5 7h3v1h-3zM10.5 7h4v1h-4zM2.5 8h3v1h-3zM11.5 8h3v1h-3zM2.5 9h4v1h-4zM12.5 9h2v1h-2zM2.5 10h3v1h-3zM7.5 10h1v1h-1zM12.5 10h2v1h-2zM2.5 11h2v1h-2zM6.5 11h3v1h-3zM11.5 11h3v1h-3z"/><path fill="#808000" d="M4.5 5h2v1h-2zM5.5 6h3v1h-3zM6.5 7h3v1h-3zM7.5 8h2v1h-2zM8.5 9h3v1h-3zM9.5 10h2v1h-2z"/><path fill="#800000" d="M6.5 9h1v1h-1zM5.5 10h1v1h-1zM4.5 11h1v1h-1zM3.5 12h1v1h-1zM2.5 13h1v1h-1zM1.5 14h1v1h-1zM0.5 15h1v1h-1z"/></svg>
<svg class="a" style="left:105px;top:184px" width="32" height="32" viewBox="0 0 16 16" shape-rendering="crispEdges"><path fill="#000080" d="M2 1h14v1h-14zM2 2h14v1h-14z"/><path fill="#000" d="M2 3h1v1h-1zM15 3h1v1h-1zM2 4h1v1h-1zM15 4h1v1h-1zM2 5h1v1h-1zM15 5h1v1h-1zM2 6h1v1h-1zM15 6h1v1h-1zM2 7h1v1h-1zM9 7h2v1h-2zM15 7h1v1h-1zM2 8h1v1h-1zM8 8h1v1h-1zM10 8h1v1h-1zM15 8h1v1h-1zM2 9h1v1h-1zM7 9h1v1h-1zM10 9h1v1h-1zM14 9h2v1h-2zM2 10h1v1h-1zM6 10h1v1h-1zM10 10h1v1h-1zM13 10h1v1h-1zM15 10h1v1h-1zM2 11h1v1h-1zM5 11h1v1h-1zM12 11h1v1h-1zM14 11h2v1h-2zM1 12h4v1h-4zM9 12h7v1h-7zM0 13h1v1h-1zM3 13h1v1h-1zM5 13h4v1h-4zM11 13h1v1h-1zM0 14h1v1h-1zM3 14h1v1h-1zM6 14h2v1h-2zM11 14h1v1h-1zM0 15h1v1h-1zM3 15h1v1h-1zM6 15h2v1h-2zM11 15h1v1h-1zM1 16h2v1h-2zM8 16h3v1h-3z"/><path fill="#fff" d="M3 3h12v1h-12zM3 4h1v1h-1zM8 4h1v1h-1zM11 4h4v1h-4zM3 5h12v1h-12zM3 6h1v1h-1zM8 6h1v1h-1zM11 6h4v1h-4zM3 7h6v1h-6zM11 7h4v1h-4zM3 8h5v1h-5zM9 8h1v1h-1zM11 8h4v1h-4zM3 9h4v1h-4zM8 9h2v1h-2zM11 9h1v1h-1zM13 9h1v1h-1zM3 10h3v1h-3zM7 10h3v1h-3zM11 10h2v1h-2zM14 10h1v1h-1zM3 11h2v1h-2zM6 11h6v1h-6zM13 11h1v1h-1zM5 12h4v1h-4zM2 14h1v1h-1zM9 14h2v1h-2zM1 15h2v1h-2zM8 15h3v1h-3z"/><path fill="#a0a0a0" d="M4 4h4v1h-4zM9 4h2v1h-2zM4 6h4v1h-4zM9 6h2v1h-2zM12 9h1v1h-1z"/><path fill="#0ff" d="M1 13h2v1h-2zM9 13h2v1h-2zM1 14h1v1h-1zM8 14h1v1h-1z"/></svg>
<svg class="a" style="left:151px;top:184px" width="32" height="32" viewBox="0 0 16 16" shape-rendering="crispEdges"><path fill="#000080" d="M0.5 1h14v1h-14zM0.5 2h14v1h-14zM2.5 6h2v1h-2zM10.5 6h2v1h-2zM2.5 7h1v1h-1zM11.5 7h1v1h-1zM2.5 8h1v1h-1zM11.5 8h1v1h-1z"/><path fill="#000" d="M0.5 3h1v1h-1zM13.5 3h1v1h-1zM0.5 4h1v1h-1zM13.5 4h1v1h-1zM0.5 5h1v1h-1zM8.5 5h1v1h-1zM13.5 5h1v1h-1zM0.5 6h1v1h-1zM8.5 6h1v1h-1zM13.5 6h1v1h-1zM0.5 7h1v1h-1zM6.5 7h2v1h-2zM13.5 7h1v1h-1zM0.5 8h1v1h-1zM13.5 8h1v1h-1zM-0.5 9h4v1h-4zM9.5 9h5v1h-5zM-0.5 10h1v1h-1zM3.5 10h1v1h-1zM9.5 10h1v1h-1zM13.5 10h1v1h-1zM-0.5 11h1v1h-1zM4.5 11h1v1h-1zM9.5 11h1v1h-1zM14.5 11h1v1h-1zM-0.5 12h1v1h-1zM4.5 12h6v1h-6zM14.5 12h1v1h-1zM-0.5 13h1v1h-1zM4.5 13h1v1h-1zM9.5 13h1v1h-1zM14.5 13h1v1h-1zM-0.5 14h1v1h-1zM4.5 14h1v1h-1zM9.5 14h1v1h-1zM14.5 14h1v1h-1zM-0.5 15h1v1h-1zM4.5 15h1v1h-1zM9.5 15h1v1h-1zM14.5 15h1v1h-1zM-0.5 16h6v1h-6zM9.5 16h6v1h-6z"/><path fill="#fff" d="M1.5 3h12v1h-12zM1.5 4h4v1h-4zM9.5 4h4v1h-4zM1.5 5h3v1h-3zM5.5 5h3v1h-3zM10.5 5h3v1h-3zM1.5 6h1v1h-1zM5.5 6h3v1h-3zM9.5 6h1v1h-1zM12.5 6h1v1h-1zM1.5 7h1v1h-1zM3.5 7h1v1h-1zM5.5 7h1v1h-1zM8.5 7h3v1h-3zM12.5 7h1v1h-1zM1.5 8h1v1h-1zM3.5 8h2v1h-2zM9.5 8h2v1h-2zM12.5 8h1v1h-1zM3.5 9h6v1h-6zM0.5 10h2v1h-2zM4.5 10h5v1h-5zM10.5 10h2v1h-2zM0.5 11h2v1h-2zM5.5 11h4v1h-4zM10.5 11h2v1h-2zM0.5 12h4v1h-4zM10.5 12h4v1h-4zM0.5 13h4v1h-4zM10.5 13h4v1h-4zM0.5 14h4v1h-4zM10.5 14h4v1h-4zM0.5 15h4v1h-4zM10.5 15h4v1h-4z"/><path fill="#d8d8d8" d="M5.5 4h4v1h-4zM4.5 5h1v1h-1zM9.5 5h1v1h-1zM4.5 6h1v1h-1zM4.5 7h1v1h-1zM5.5 8h4v1h-4z"/><path fill="#a0a0a0" d="M2.5 10h1v1h-1zM12.5 10h1v1h-1zM2.5 11h2v1h-2zM12.5 11h2v1h-2z"/></svg>
<svg class="a" style="left:197px;top:184px" width="32" height="32" viewBox="0 0 16 16" shape-rendering="crispEdges"><path fill="#000080" d="M1.5 1h14v1h-14zM1.5 2h14v1h-14z"/><path fill="#000" d="M1.5 3h1v1h-1zM14.5 3h1v1h-1zM1.5 4h1v1h-1zM14.5 4h1v1h-1zM1.5 5h1v1h-1zM14.5 5h1v1h-1zM1.5 6h1v1h-1zM14.5 6h1v1h-1zM1.5 7h1v1h-1zM14.5 7h1v1h-1zM1.5 8h1v1h-1zM14.5 8h1v1h-1zM0.5 9h5v1h-5zM14.5 9h1v1h-1zM-0.5 10h2v1h-2zM4.5 10h1v1h-1zM14.5 10h1v1h-1zM0.5 11h1v1h-1zM4.5 11h2v1h-2zM14.5 11h1v1h-1zM-0.5 12h2v1h-2zM4.5 12h11v1h-11zM0.5 13h1v1h-1zM4.5 13h1v1h-1zM-0.5 14h2v1h-2zM4.5 14h1v1h-1zM0.5 15h5v1h-5z"/><path fill="#fff" d="M2.5 3h3v1h-3zM6.5 3h1v1h-1zM8.5 3h1v1h-1zM10.5 3h1v1h-1zM13.5 3h1v1h-1zM2.5 4h3v1h-3zM6.5 4h8v1h-8zM2.5 5h3v1h-3zM6.5 5h1v1h-1zM8.5 5h1v1h-1zM10.5 5h1v1h-1zM12.5 5h1v1h-1zM2.5 6h3v1h-3zM6.5 6h8v1h-8zM2.5 7h3v1h-3zM6.5 7h1v1h-1zM9.5 7h1v1h-1zM11.5 7h1v1h-1zM2.5 8h3v1h-3zM6.5 8h8v1h-8zM6.5 9h8v1h-8zM1.5 10h3v1h-3zM6.5 10h1v1h-1zM9.5 10h1v1h-1zM11.5 10h1v1h-1zM13.5 10h1v1h-1zM1.5 11h3v1h-3zM6.5 11h8v1h-8zM1.5 12h3v1h-3zM1.5 13h3v1h-3zM1.5 14h3v1h-3z"/><path fill="#a0a0a0" d="M5.5 3h1v1h-1zM5.5 4h1v1h-1zM5.5 5h1v1h-1zM5.5 6h1v1h-1zM5.5 7h1v1h-1zM5.5 8h1v1h-1zM5.5 9h1v1h-1zM5.5 10h1v1h-1z"/><path fill="#d8d8d8" d="M7.5 3h1v1h-1zM9.5 3h1v1h-1zM11.5 3h2v1h-2zM7.5 5h1v1h-1zM9.5 5h1v1h-1zM11.5 5h1v1h-1zM13.5 5h1v1h-1zM7.5 7h2v1h-2zM10.5 7h1v1h-1zM12.5 7h2v1h-2zM7.5 10h2v1h-2zM10.5 10h1v1h-1zM12.5 10h1v1h-1z"/></svg>
<svg class="a" style="left:243px;top:184px" width="32" height="32" viewBox="0 0 16 16" shape-rendering="crispEdges"><path fill="#000" d="M5.5 2h6v1h-6zM4.5 3h1v1h-1zM6.5 3h1v1h-1zM11.5 3h1v1h-1zM3.5 4h1v1h-1zM5.5 4h1v1h-1zM7.5 4h1v1h-1zM-0.5 5h4v1h-4zM4.5 5h1v1h-1zM6.5 5h1v1h-1zM8.5 5h1v1h-1zM-0.5 6h1v1h-1zM2.5 6h1v1h-1zM4.5 6h1v1h-1zM6.5 6h1v1h-1zM8.5 6h2v1h-2zM11.5 6h1v1h-1zM-0.5 7h1v1h-1zM1.5 7h1v1h-1zM3.5 7h1v1h-1zM6.5 7h1v1h-1zM8.5 7h4v1h-4zM-0.5 8h1v1h-1zM2.5 8h1v1h-1zM7.5 8h3v1h-3zM-0.5 9h1v1h-1zM9.5 9h1v1h-1zM-0.5 10h1v1h-1zM9.5 10h1v1h-1zM-0.5 11h1v1h-1zM1.5 11h2v1h-2zM4.5 11h6v1h-6zM-0.5 12h1v1h-1zM9.5 12h1v1h-1zM-0.5 13h1v1h-1zM1.5 13h2v1h-2zM4.5 13h6v1h-6zM-0.5 14h1v1h-1zM9.5 14h1v1h-1zM-0.5 15h11v1h-11z"/><path fill="#000080" d="M12.5 2h2v1h-2zM12.5 3h2v1h-2zM12.5 4h2v1h-2zM12.5 5h2v1h-2zM12.5 6h2v1h-2zM13.5 7h1v1h-1z"/><path fill="#fff" d="M5.5 3h1v1h-1zM4.5 4h1v1h-1zM6.5 4h1v1h-1zM3.5 5h1v1h-1zM5.5 5h1v1h-1zM7.5 5h1v1h-1zM0.5 6h2v1h-2zM3.5 6h1v1h-1zM5.5 6h1v1h-1zM7.5 6h1v1h-1zM0.5 7h1v1h-1zM2.5 7h1v1h-1zM4.5 7h2v1h-2zM7.5 7h1v1h-1zM0.5 8h2v1h-2zM3.5 8h4v1h-4zM0.5 9h9v1h-9zM0.5 10h9v1h-9zM0.5 11h1v1h-1zM3.5 11h1v1h-1zM0.5 12h9v1h-9zM0.5 13h1v1h-1zM3.5 13h1v1h-1zM0.5 14h9v1h-9z"/></svg>
<div class="a" style="left:291px;top:180px;width:2px;height:44px;background:#a0a0a0;"></div>
<div class="a" style="left:293px;top:180px;width:2px;height:44px;background:#fff;"></div>
<svg class="a" style="left:305px;top:184px" width="32" height="32" viewBox="0 0 16 16" shape-rendering="crispEdges"><path fill="#000" d="M2.5 2h1v1h-1zM13.5 2h1v1h-1zM2.5 3h1v1h-1zM13.5 3h1v1h-1zM0.5 4h2v1h-2zM11.5 4h2v1h-2zM-0.5 8h6v1h-6zM8.5 8h6v1h-6zM-0.5 9h1v1h-1zM4.5 9h2v1h-2zM8.5 9h1v1h-1zM13.5 9h2v1h-2zM-0.5 10h1v1h-1zM5.5 10h1v1h-1zM8.5 10h1v1h-1zM14.5 10h1v1h-1zM-0.5 11h1v1h-1zM5.5 11h1v1h-1zM8.5 11h1v1h-1zM14.5 11h1v1h-1zM-0.5 12h1v1h-1zM5.5 12h1v1h-1zM8.5 12h1v1h-1zM14.5 12h1v1h-1zM-0.5 13h1v1h-1zM5.5 13h1v1h-1zM8.5 13h1v1h-1zM14.5 13h1v1h-1zM-0.5 14h1v1h-1zM5.5 14h1v1h-1zM8.5 14h1v1h-1zM14.5 14h1v1h-1zM-0.5 15h7v1h-7zM8.5 15h7v1h-7z"/><path fill="#000080" d="M4.5 2h1v1h-1zM8.5 2h1v1h-1zM3.5 3h1v1h-1zM5.5 3h1v1h-1zM7.5 3h1v1h-1zM9.5 3h1v1h-1zM6.5 4h1v1h-1zM5.5 5h1v1h-1zM7.5 5h1v1h-1zM4.5 6h1v1h-1zM8.5 6h1v1h-1zM3.5 7h1v1h-1zM9.5 7h1v1h-1z"/><path fill="#fff" d="M0.5 9h3v1h-3zM9.5 9h3v1h-3zM0.5 10h1v1h-1zM2.5 10h2v1h-2zM9.5 10h1v1h-1zM11.5 10h2v1h-2zM0.5 11h5v1h-5zM9.5 11h5v1h-5zM0.5 12h1v1h-1zM3.5 12h2v1h-2zM9.5 12h1v1h-1zM12.5 12h2v1h-2zM0.5 13h5v1h-5zM9.5 13h5v1h-5zM0.5 14h5v1h-5zM9.5 14h5v1h-5z"/><path fill="#a0a0a0" d="M3.5 9h1v1h-1zM12.5 9h1v1h-1zM1.5 10h1v1h-1zM4.5 10h1v1h-1zM10.5 10h1v1h-1zM13.5 10h1v1h-1z"/><path fill="#d8d8d8" d="M1.5 12h2v1h-2zM10.5 12h2v1h-2z"/></svg>
<svg class="a" style="left:351px;top:184px" width="32" height="32" viewBox="0 0 16 16" shape-rendering="crispEdges"><path fill="#808000" d="M2.5 1h9v1h-9zM1.5 2h1v1h-1zM11.5 2h2v1h-2zM1.5 3h1v1h-1zM12.5 3h1v1h-1zM1.5 4h1v1h-1zM1.5 5h1v1h-1zM11.5 5h1v1h-1zM2.5 6h9v1h-9z"/><path fill="#ff0" d="M2.5 2h1v1h-1zM4.5 2h1v1h-1zM6.5 2h1v1h-1zM8.5 2h1v1h-1zM10.5 2h1v1h-1zM3.5 3h1v1h-1zM5.5 3h1v1h-1zM7.5 3h1v1h-1zM9.5 3h1v1h-1zM2.5 4h1v1h-1zM4.5 4h1v1h-1zM6.5 4h1v1h-1zM8.5 4h1v1h-1zM10.5 4h1v1h-1zM3.5 5h1v1h-1zM5.5 5h1v1h-1zM7.5 5h1v1h-1zM9.5 5h1v1h-1z"/><path fill="#fff" d="M3.5 2h1v1h-1zM5.5 2h1v1h-1zM7.5 2h1v1h-1zM9.5 2h1v1h-1zM2.5 3h1v1h-1zM4.5 3h1v1h-1zM6.5 3h1v1h-1zM8.5 3h1v1h-1zM3.5 4h1v1h-1zM5.5 4h1v1h-1zM7.5 4h1v1h-1zM9.5 4h1v1h-1zM2.5 5h1v1h-1zM4.5 5h1v1h-1zM6.5 5h1v1h-1zM8.5 5h1v1h-1zM10.5 5h1v1h-1zM1.5 12h2v1h-2zM6.5 12h2v1h-2zM11.5 12h1v1h-1zM1.5 13h2v1h-2zM6.5 13h2v1h-2zM11.5 13h1v1h-1z"/><path fill="#000" d="M10.5 3h2v1h-2zM11.5 4h3v1h-3zM13.5 5h1v1h-1zM13.5 6h1v1h-1zM13.5 7h1v1h-1zM13.5 8h1v1h-1zM2.5 9h12v1h-12zM2.5 10h1v1h-1zM7.5 10h1v1h-1zM12.5 10h1v1h-1zM3.5 12h1v1h-1zM8.5 12h1v1h-1zM12.5 12h1v1h-1zM3.5 13h1v1h-1zM8.5 13h1v1h-1zM12.5 13h1v1h-1zM1.5 14h2v1h-2zM6.5 14h2v1h-2zM11.5 14h2v1h-2z"/></svg>
<svg class="a" style="left:397px;top:184px" width="32" height="32" viewBox="0 0 16 16" shape-rendering="crispEdges"><path fill="#000" d="M-0.5 1h15v1h-15zM-0.5 2h1v1h-1zM13.5 2h1v1h-1zM-0.5 3h1v1h-1zM6.5 3h1v1h-1zM9.5 3h1v1h-1zM13.5 3h1v1h-1zM-0.5 4h1v1h-1zM6.5 4h1v1h-1zM9.5 4h1v1h-1zM13.5 4h1v1h-1zM-0.5 5h1v1h-1zM3.5 5h4v1h-4zM9.5 5h5v1h-5zM-0.5 6h1v1h-1zM6.5 6h1v1h-1zM9.5 6h1v1h-1zM13.5 6h1v1h-1zM-0.5 7h1v1h-1zM6.5 7h1v1h-1zM9.5 7h1v1h-1zM13.5 7h1v1h-1zM-0.5 8h1v1h-1zM13.5 8h1v1h-1zM-0.5 9h1v1h-1zM13.5 9h1v1h-1zM-0.5 10h1v1h-1zM12.5 10h2v1h-2zM-0.5 11h1v1h-1zM9.5 11h3v1h-3zM-0.5 12h1v1h-1zM9.5 12h1v1h-1zM-0.5 13h1v1h-1zM7.5 13h3v1h-3zM-0.5 14h1v1h-1zM3.5 14h5v1h-5zM-0.5 15h3v1h-3z"/><path fill="#fff" d="M0.5 2h2v1h-2zM3.5 2h10v1h-10zM0.5 3h2v1h-2zM3.5 3h3v1h-3zM7.5 3h2v1h-2zM10.5 3h3v1h-3zM0.5 4h2v1h-2zM3.5 4h3v1h-3zM7.5 4h2v1h-2zM10.5 4h3v1h-3zM0.5 5h2v1h-2zM7.5 5h2v1h-2zM0.5 6h2v1h-2zM3.5 6h3v1h-3zM7.5 6h2v1h-2zM10.5 6h3v1h-3zM0.5 7h2v1h-2zM3.5 7h3v1h-3zM7.5 7h2v1h-2zM10.5 7h3v1h-3zM0.5 8h2v1h-2zM3.5 8h10v1h-10zM0.5 9h2v1h-2zM3.5 9h10v1h-10zM0.5 10h2v1h-2zM3.5 10h9v1h-9zM0.5 11h2v1h-2zM3.5 11h6v1h-6zM0.5 12h2v1h-2zM3.5 12h6v1h-6zM0.5 13h2v1h-2zM3.5 13h4v1h-4zM0.5 14h3v1h-3z"/><path fill="#008000" d="M2.5 2h1v1h-1zM2.5 3h1v1h-1zM2.5 4h1v1h-1zM2.5 5h1v1h-1zM2.5 6h1v1h-1zM2.5 7h1v1h-1zM2.5 8h1v1h-1zM2.5 9h1v1h-1zM2.5 10h1v1h-1zM2.5 11h1v1h-1zM2.5 12h1v1h-1zM2.5 13h1v1h-1z"/></svg>
<svg class="a" style="left:443px;top:184px" width="32" height="32" viewBox="0 0 16 16" shape-rendering="crispEdges"><path fill="#000" d="M0.5 1h15v1h-15zM0.5 2h1v1h-1zM14.5 2h1v1h-1zM0.5 3h15v1h-15zM0.5 4h1v1h-1zM14.5 4h1v1h-1zM0.5 5h1v1h-1zM14.5 5h1v1h-1zM0.5 6h1v1h-1zM14.5 6h1v1h-1zM0.5 7h1v1h-1zM14.5 7h1v1h-1zM0.5 8h1v1h-1zM14.5 8h1v1h-1zM0.5 9h1v1h-1zM14.5 9h1v1h-1zM0.5 10h1v1h-1zM14.5 10h1v1h-1zM0.5 11h1v1h-1zM14.5 11h1v1h-1zM0.5 12h1v1h-1zM14.5 12h1v1h-1zM0.5 13h1v1h-1zM14.5 13h1v1h-1zM0.5 14h1v1h-1zM14.5 14h1v1h-1zM0.5 15h15v1h-15z"/><path fill="#fff" d="M1.5 2h4v1h-4zM6.5 2h5v1h-5zM12.5 2h2v1h-2zM1.5 4h1v1h-1zM3.5 4h9v1h-9zM13.5 4h1v1h-1zM1.5 5h13v1h-13zM1.5 6h2v1h-2zM12.5 6h2v1h-2zM1.5 7h2v1h-2zM4.5 7h7v1h-7zM12.5 7h2v1h-2zM1.5 8h2v1h-2zM12.5 8h2v1h-2zM1.5 9h1v1h-1zM3.5 9h9v1h-9zM13.5 9h1v1h-1zM1.5 10h13v1h-13zM1.5 11h1v1h-1zM3.5 11h2v1h-2zM10.5 11h1v1h-1zM13.5 11h1v1h-1zM1.5 12h13v1h-13zM1.5 13h1v1h-1zM3.5 13h2v1h-2zM10.5 13h1v1h-1zM13.5 13h1v1h-1zM1.5 14h13v1h-13z"/><path fill="#a0a0a0" d="M5.5 2h1v1h-1zM11.5 2h1v1h-1zM2.5 11h1v1h-1zM5.5 11h5v1h-5zM11.5 11h2v1h-2zM2.5 13h1v1h-1zM5.5 13h5v1h-5zM11.5 13h2v1h-2z"/><path fill="#d8d8d8" d="M2.5 4h1v1h-1zM12.5 4h1v1h-1zM2.5 9h1v1h-1zM12.5 9h1v1h-1z"/><path fill="#000080" d="M3.5 6h9v1h-9zM3.5 7h1v1h-1zM11.5 7h1v1h-1zM3.5 8h9v1h-9z"/></svg>
<svg class="a" style="left:489px;top:184px" width="32" height="32" viewBox="0 0 16 16" shape-rendering="crispEdges"><path fill="#000" d="M0.5 1h15v1h-15zM0.5 2h1v1h-1zM14.5 2h1v1h-1zM0.5 3h15v1h-15zM0.5 4h1v1h-1zM14.5 4h1v1h-1zM0.5 5h1v1h-1zM14.5 5h1v1h-1zM0.5 6h1v1h-1zM14.5 6h1v1h-1zM0.5 7h1v1h-1zM14.5 7h1v1h-1zM0.5 8h1v1h-1zM14.5 8h1v1h-1zM0.5 9h1v1h-1zM14.5 9h1v1h-1zM0.5 10h1v1h-1zM14.5 10h1v1h-1zM0.5 11h1v1h-1zM14.5 11h1v1h-1zM0.5 12h1v1h-1zM14.5 12h1v1h-1zM0.5 13h1v1h-1zM14.5 13h1v1h-1zM0.5 14h1v1h-1zM14.5 14h1v1h-1zM0.5 15h15v1h-15z"/><path fill="#fff" d="M1.5 2h4v1h-4zM6.5 2h5v1h-5zM12.5 2h2v1h-2zM1.5 4h13v1h-13zM1.5 5h1v1h-1zM6.5 5h1v1h-1zM11.5 5h1v1h-1zM13.5 5h1v1h-1zM1.5 6h1v1h-1zM3.5 6h2v1h-2zM6.5 6h1v1h-1zM8.5 6h2v1h-2zM11.5 6h1v1h-1zM13.5 6h1v1h-1zM1.5 7h1v1h-1zM3.5 7h2v1h-2zM6.5 7h1v1h-1zM8.5 7h2v1h-2zM11.5 7h1v1h-1zM13.5 7h1v1h-1zM1.5 8h1v1h-1zM6.5 8h1v1h-1zM11.5 8h1v1h-1zM13.5 8h1v1h-1zM1.5 9h13v1h-13zM1.5 10h1v1h-1zM6.5 10h1v1h-1zM11.5 10h1v1h-1zM1.5 11h1v1h-1zM3.5 11h2v1h-2zM6.5 11h1v1h-1zM8.5 11h2v1h-2zM11.5 11h2v1h-2zM1.5 12h1v1h-1zM3.5 12h2v1h-2zM6.5 12h1v1h-1zM8.5 12h2v1h-2zM11.5 12h1v1h-1zM13.5 12h1v1h-1zM1.5 13h1v1h-1zM6.5 13h1v1h-1zM11.5 13h1v1h-1zM1.5 14h13v1h-13z"/><path fill="#a0a0a0" d="M5.5 2h1v1h-1zM11.5 2h1v1h-1z"/><path fill="#00f" d="M2.5 5h4v1h-4zM7.5 5h4v1h-4zM12.5 5h1v1h-1zM2.5 6h1v1h-1zM5.5 6h1v1h-1zM7.5 6h1v1h-1zM10.5 6h1v1h-1zM12.5 6h1v1h-1zM2.5 7h1v1h-1zM5.5 7h1v1h-1zM7.5 7h1v1h-1zM10.5 7h1v1h-1zM12.5 7h1v1h-1zM2.5 8h4v1h-4zM7.5 8h4v1h-4zM12.5 8h1v1h-1zM2.5 10h4v1h-4zM7.5 10h4v1h-4zM12.5 10h2v1h-2zM2.5 11h1v1h-1zM5.5 11h1v1h-1zM7.5 11h1v1h-1zM10.5 11h1v1h-1zM13.5 11h1v1h-1zM2.5 12h1v1h-1zM5.5 12h1v1h-1zM7.5 12h1v1h-1zM10.5 12h1v1h-1zM12.5 12h1v1h-1zM2.5 13h4v1h-4zM7.5 13h4v1h-4zM12.5 13h2v1h-2z"/></svg>
<div class="a" style="left:537px;top:180px;width:2px;height:44px;background:#a0a0a0;"></div>
<div class="a" style="left:539px;top:180px;width:2px;height:44px;background:#fff;"></div>
<svg class="a" style="left:551px;top:184px" width="32" height="32" viewBox="0 0 16 16" shape-rendering="crispEdges"><path fill="#fff" d="M3.5 2h2v1h-2zM9.5 2h5v1h-5zM2.5 3h3v1h-3zM8.5 3h2v1h-2zM13.5 3h2v1h-2zM1.5 4h4v1h-4zM8.5 4h2v1h-2zM13.5 4h2v1h-2zM3.5 5h2v1h-2zM8.5 5h2v1h-2zM13.5 5h2v1h-2zM3.5 6h2v1h-2zM8.5 6h2v1h-2zM13.5 6h2v1h-2zM3.5 7h2v1h-2zM8.5 7h2v1h-2zM13.5 7h2v1h-2zM3.5 8h2v1h-2zM8.5 8h2v1h-2zM13.5 8h2v1h-2zM2.5 9h5v1h-5zM9.5 9h5v1h-5zM0.5 12h2v1h-2zM4.5 12h3v1h-3zM10.5 12h3v1h-3zM15.5 12h1v1h-1zM0.5 13h1v1h-1zM3.5 13h1v1h-1zM6.5 13h2v1h-2zM9.5 13h1v1h-1zM12.5 13h2v1h-2zM15.5 13h1v1h-1zM0.5 14h1v1h-1zM3.5 14h1v1h-1zM7.5 14h1v1h-1zM9.5 14h1v1h-1zM13.5 14h1v1h-1zM15.5 14h1v1h-1zM0.5 15h1v1h-1zM3.5 15h2v1h-2zM6.5 15h1v1h-1zM9.5 15h2v1h-2zM12.5 15h1v1h-1zM15.5 15h1v1h-1zM4.5 16h3v1h-3zM10.5 16h3v1h-3z"/><path fill="#a0a0a0" d="M2.5 1h2v1h-2zM8.5 1h5v1h-5zM1.5 2h3v1h-3zM7.5 2h2v1h-2zM12.5 2h2v1h-2zM0.5 3h4v1h-4zM7.5 3h2v1h-2zM12.5 3h2v1h-2zM2.5 4h2v1h-2zM7.5 4h2v1h-2zM12.5 4h2v1h-2zM2.5 5h2v1h-2zM7.5 5h2v1h-2zM12.5 5h2v1h-2zM2.5 6h2v1h-2zM7.5 6h2v1h-2zM12.5 6h2v1h-2zM2.5 7h2v1h-2zM7.5 7h2v1h-2zM12.5 7h2v1h-2zM1.5 8h5v1h-5zM8.5 8h5v1h-5zM-0.5 11h2v1h-2zM3.5 11h3v1h-3zM9.5 11h3v1h-3zM14.5 11h1v1h-1zM-0.5 12h1v1h-1zM2.5 12h1v1h-1zM5.5 12h2v1h-2zM8.5 12h1v1h-1zM11.5 12h2v1h-2zM14.5 12h1v1h-1zM-0.5 13h1v1h-1zM2.5 13h1v1h-1zM6.5 13h1v1h-1zM8.5 13h1v1h-1zM12.5 13h1v1h-1zM14.5 13h1v1h-1zM-0.5 14h1v1h-1zM2.5 14h2v1h-2zM5.5 14h1v1h-1zM8.5 14h2v1h-2zM11.5 14h1v1h-1zM14.5 14h1v1h-1zM3.5 15h3v1h-3zM9.5 15h3v1h-3z"/></svg>
<svg class="a" style="left:597px;top:184px" width="32" height="32" viewBox="0 0 16 16" shape-rendering="crispEdges"><path fill="#fff" d="M3.5 2h2v1h-2zM9.5 2h5v1h-5zM2.5 3h3v1h-3zM8.5 3h2v1h-2zM13.5 3h2v1h-2zM1.5 4h4v1h-4zM8.5 4h2v1h-2zM13.5 4h2v1h-2zM3.5 5h2v1h-2zM8.5 5h2v1h-2zM13.5 5h2v1h-2zM3.5 6h2v1h-2zM8.5 6h2v1h-2zM13.5 6h2v1h-2zM3.5 7h2v1h-2zM8.5 7h2v1h-2zM13.5 7h2v1h-2zM0.5 8h15v1h-15zM1.5 9h14v1h-14zM2.5 10h11v1h-11zM0.5 12h2v1h-2zM4.5 12h3v1h-3zM10.5 12h3v1h-3zM15.5 12h1v1h-1zM0.5 13h1v1h-1zM3.5 13h1v1h-1zM6.5 13h2v1h-2zM9.5 13h1v1h-1zM12.5 13h2v1h-2zM15.5 13h1v1h-1zM0.5 14h1v1h-1zM3.5 14h1v1h-1zM7.5 14h1v1h-1zM9.5 14h1v1h-1zM13.5 14h1v1h-1zM15.5 14h1v1h-1zM0.5 15h1v1h-1zM3.5 15h2v1h-2zM6.5 15h1v1h-1zM9.5 15h2v1h-2zM12.5 15h1v1h-1zM15.5 15h1v1h-1zM4.5 16h3v1h-3zM10.5 16h3v1h-3z"/><path fill="#a0a0a0" d="M2.5 1h2v1h-2zM8.5 1h5v1h-5zM1.5 2h3v1h-3zM7.5 2h2v1h-2zM12.5 2h2v1h-2zM0.5 3h4v1h-4zM7.5 3h2v1h-2zM12.5 3h2v1h-2zM2.5 4h2v1h-2zM7.5 4h2v1h-2zM12.5 4h2v1h-2zM2.5 5h2v1h-2zM7.5 5h2v1h-2zM12.5 5h2v1h-2zM2.5 6h2v1h-2zM7.5 6h2v1h-2zM12.5 6h2v1h-2zM-0.5 7h15v1h-15zM0.5 8h14v1h-14zM1.5 9h11v1h-11zM-0.5 11h2v1h-2zM3.5 11h3v1h-3zM9.5 11h3v1h-3zM14.5 11h1v1h-1zM-0.5 12h1v1h-1zM2.5 12h1v1h-1zM5.5 12h2v1h-2zM8.5 12h1v1h-1zM11.5 12h2v1h-2zM14.5 12h1v1h-1zM-0.5 13h1v1h-1zM2.5 13h1v1h-1zM6.5 13h1v1h-1zM8.5 13h1v1h-1zM12.5 13h1v1h-1zM14.5 13h1v1h-1zM-0.5 14h1v1h-1zM2.5 14h2v1h-2zM5.5 14h1v1h-1zM8.5 14h2v1h-2zM11.5 14h1v1h-1zM14.5 14h1v1h-1zM3.5 15h3v1h-3zM9.5 15h3v1h-3z"/></svg>
<svg class="a" style="left:643px;top:184px" width="32" height="32" viewBox="0 0 16 16" shape-rendering="crispEdges"><path fill="#fff" d="M3.5 2h2v1h-2zM9.5 2h5v1h-5zM2.5 3h3v1h-3zM8.5 3h2v1h-2zM13.5 3h1v1h-1zM1.5 4h4v1h-4zM8.5 4h2v1h-2zM3.5 5h2v1h-2zM8.5 5h6v1h-6zM3.5 6h2v1h-2zM8.5 6h2v1h-2zM13.5 6h2v1h-2zM3.5 7h2v1h-2zM8.5 7h2v1h-2zM13.5 7h2v1h-2zM3.5 8h2v1h-2zM8.5 8h2v1h-2zM13.5 8h2v1h-2zM2.5 9h5v1h-5zM9.5 9h5v1h-5zM0.5 12h2v1h-2zM4.5 12h3v1h-3zM10.5 12h3v1h-3zM15.5 12h1v1h-1zM0.5 13h1v1h-1zM3.5 13h1v1h-1zM6.5 13h2v1h-2zM9.5 13h1v1h-1zM12.5 13h2v1h-2zM15.5 13h1v1h-1zM0.5 14h1v1h-1zM3.5 14h1v1h-1zM7.5 14h1v1h-1zM9.5 14h1v1h-1zM13.5 14h1v1h-1zM15.5 14h1v1h-1zM0.5 15h1v1h-1zM3.5 15h2v1h-2zM6.5 15h1v1h-1zM9.5 15h2v1h-2zM12.5 15h1v1h-1zM15.5 15h1v1h-1zM4.5 16h3v1h-3zM10.5 16h3v1h-3z"/><path fill="#a0a0a0" d="M2.5 1h2v1h-2zM8.5 1h5v1h-5zM1.5 2h3v1h-3zM7.5 2h2v1h-2zM12.5 2h1v1h-1zM0.5 3h4v1h-4zM7.5 3h2v1h-2zM2.5 4h2v1h-2zM7.5 4h6v1h-6zM2.5 5h2v1h-2zM7.5 5h2v1h-2zM12.5 5h2v1h-2zM2.5 6h2v1h-2zM7.5 6h2v1h-2zM12.5 6h2v1h-2zM2.5 7h2v1h-2zM7.5 7h2v1h-2zM12.5 7h2v1h-2zM1.5 8h5v1h-5zM8.5 8h5v1h-5zM-0.5 11h2v1h-2zM3.5 11h3v1h-3zM9.5 11h3v1h-3zM14.5 11h1v1h-1zM-0.5 12h1v1h-1zM2.5 12h1v1h-1zM5.5 12h2v1h-2zM8.5 12h1v1h-1zM11.5 12h2v1h-2zM14.5 12h1v1h-1zM-0.5 13h1v1h-1zM2.5 13h1v1h-1zM6.5 13h1v1h-1zM8.5 13h1v1h-1zM12.5 13h1v1h-1zM14.5 13h1v1h-1zM-0.5 14h1v1h-1zM2.5 14h2v1h-2zM5.5 14h1v1h-1zM8.5 14h2v1h-2zM11.5 14h1v1h-1zM14.5 14h1v1h-1zM3.5 15h3v1h-3zM9.5 15h3v1h-3z"/></svg>
<div class="a" style="left:691px;top:180px;width:2px;height:44px;background:#a0a0a0;"></div>
<div class="a" style="left:693px;top:180px;width:2px;height:44px;background:#fff;"></div>
<svg class="a" style="left:705px;top:184px" width="32" height="32" viewBox="0 0 16 16" shape-rendering="crispEdges"><path fill="#fff" d="M6.5 2h2v1h-2zM5.5 3h4v1h-4zM4.5 4h9v1h-9zM3.5 5h12v1h-12zM2.5 6h14v1h-14zM7.5 7h7v1h-7zM6.5 8h10v1h-10zM7.5 9h7v1h-7zM8.5 10h6v1h-6zM7.5 11h7v1h-7zM5.5 12h9v1h-9zM9.5 13h5v1h-5zM8.5 14h6v1h-6zM8.5 15h6v1h-6z"/><path fill="#a0a0a0" d="M5.5 1h2v1h-2zM4.5 2h4v1h-4zM3.5 3h9v1h-9zM2.5 4h12v1h-12zM1.5 5h14v1h-14zM6.5 6h7v1h-7zM5.5 7h10v1h-10zM6.5 8h7v1h-7zM7.5 9h6v1h-6zM6.5 10h7v1h-7zM4.5 11h9v1h-9zM8.5 12h5v1h-5zM7.5 13h6v1h-6zM7.5 14h6v1h-6z"/></svg>
<svg class="a" style="left:751px;top:184px" width="32" height="32" viewBox="0 0 16 16" shape-rendering="crispEdges"><path fill="#fff" d="M1.5 2h5v1h-5zM1.5 3h6v1h-6zM1.5 4h12v1h-12zM3.5 5h12v1h-12zM1.5 6h3v1h-3zM5.5 6h9v1h-9zM5.5 7h10v1h-10zM7.5 8h7v1h-7zM7.5 9h9v1h-9zM7.5 10h7v1h-7zM7.5 11h7v1h-7zM2.5 12h12v1h-12zM5.5 13h9v1h-9zM5.5 14h9v1h-9zM5.5 15h9v1h-9z"/><path fill="#a0a0a0" d="M0.5 1h5v1h-5zM0.5 2h6v1h-6zM0.5 3h12v1h-12zM2.5 4h12v1h-12zM0.5 5h3v1h-3zM4.5 5h9v1h-9zM4.5 6h10v1h-10zM6.5 7h7v1h-7zM6.5 8h9v1h-9zM6.5 9h7v1h-7zM6.5 10h7v1h-7zM1.5 11h12v1h-12zM4.5 12h9v1h-9zM4.5 13h9v1h-9zM4.5 14h9v1h-9z"/></svg>
<svg class="a" style="left:797px;top:184px" width="32" height="32" viewBox="0 0 16 16" shape-rendering="crispEdges"><path fill="#fff" d="M3 2h1v1h-1zM4 2h1v1h-1zM5 2h1v1h-1zM6 2h1v1h-1zM7 2h1v1h-1zM8 2h1v1h-1zM11 2h4v1h-4zM3 3h1v1h-1zM4 3h1v1h-1zM5 3h1v1h-1zM6 3h1v1h-1zM7 3h1v1h-1zM8 3h1v1h-1zM10 3h6v1h-6zM1 4h3v1h-3zM4 4h1v1h-1zM5 4h1v1h-1zM6 4h1v1h-1zM7 4h1v1h-1zM8 4h1v1h-1zM10 4h6v1h-6zM3 5h1v1h-1zM4 5h1v1h-1zM5 5h1v1h-1zM6 5h1v1h-1zM7 5h1v1h-1zM8 5h7v1h-7zM3 6h1v1h-1zM4 6h1v1h-1zM5 6h1v1h-1zM6 6h1v1h-1zM7 6h1v1h-1zM8 6h1v1h-1zM10 6h5v1h-5zM1 7h4v1h-4zM5 7h1v1h-1zM6 7h1v1h-1zM7 7h1v1h-1zM8 7h1v1h-1zM10 7h5v1h-5zM3 8h1v1h-1zM4 8h1v1h-1zM5 8h1v1h-1zM6 8h1v1h-1zM7 8h1v1h-1zM8 8h1v1h-1zM10 8h4v1h-4zM1 11h2v1h-2zM5 11h3v1h-3zM11 11h3v1h-3zM16 11h1v1h-1zM1 12h1v1h-1zM4 12h1v1h-1zM7 12h2v1h-2zM10 12h1v1h-1zM13 12h2v1h-2zM16 12h1v1h-1zM1 13h1v1h-1zM4 13h1v1h-1zM8 13h1v1h-1zM10 13h1v1h-1zM14 13h1v1h-1zM16 13h1v1h-1zM1 14h1v1h-1zM4 14h2v1h-2zM7 14h1v1h-1zM10 14h2v1h-2zM13 14h1v1h-1zM16 14h1v1h-1zM5 15h3v1h-3zM11 15h3v1h-3z"/><path fill="#a0a0a0" d="M2 1h1v1h-1zM4 1h1v1h-1zM6 1h1v1h-1zM10 1h4v1h-4zM3 2h1v1h-1zM5 2h1v1h-1zM7 2h1v1h-1zM9 2h6v1h-6zM0 3h3v1h-3zM4 3h1v1h-1zM6 3h1v1h-1zM9 3h6v1h-6zM3 4h1v1h-1zM5 4h1v1h-1zM7 4h7v1h-7zM2 5h1v1h-1zM4 5h1v1h-1zM6 5h1v1h-1zM9 5h5v1h-5zM0 6h4v1h-4zM5 6h1v1h-1zM7 6h1v1h-1zM9 6h5v1h-5zM2 7h1v1h-1zM4 7h1v1h-1zM6 7h1v1h-1zM9 7h4v1h-4zM0 10h2v1h-2zM4 10h3v1h-3zM10 10h3v1h-3zM15 10h1v1h-1zM0 11h1v1h-1zM3 11h1v1h-1zM6 11h2v1h-2zM9 11h1v1h-1zM12 11h2v1h-2zM15 11h1v1h-1zM0 12h1v1h-1zM3 12h1v1h-1zM7 12h1v1h-1zM9 12h1v1h-1zM13 12h1v1h-1zM15 12h1v1h-1zM0 13h1v1h-1zM3 13h2v1h-2zM6 13h1v1h-1zM9 13h2v1h-2zM12 13h1v1h-1zM15 13h1v1h-1zM4 14h3v1h-3zM10 14h3v1h-3z"/><path fill="#fff" d="M3 1h1v1h-1zM5 1h1v1h-1zM7 1h1v1h-1zM2 2h1v1h-1zM4 2h1v1h-1zM6 2h1v1h-1zM3 3h1v1h-1zM5 3h1v1h-1zM7 3h1v1h-1zM2 4h1v1h-1zM4 4h1v1h-1zM6 4h1v1h-1zM3 5h1v1h-1zM5 5h1v1h-1zM7 5h1v1h-1zM4 6h1v1h-1zM6 6h1v1h-1zM3 7h1v1h-1zM5 7h1v1h-1zM7 7h1v1h-1z"/></svg>
<div class="a" style="left:859px;top:176px;width:2px;height:50px;background:#fff;"></div>
<div class="a" style="left:863px;top:176px;width:2px;height:52px;background:#a0a0a0;"></div>
<div class="a" style="left:859px;top:226px;width:6px;height:2px;background:#a0a0a0;"></div>
<div class="a" style="left:859px;top:176px;width:4px;height:2px;background:#fff;"></div>
<div class="a" style="left:867px;top:176px;width:2px;height:50px;background:#fff;"></div>
<div class="a" style="left:871px;top:176px;width:2px;height:52px;background:#a0a0a0;"></div>
<div class="a" style="left:867px;top:226px;width:6px;height:2px;background:#a0a0a0;"></div>
<div class="a" style="left:867px;top:176px;width:4px;height:2px;background:#fff;"></div>
<div class="a" style="left:853px;top:230px;width:665px;height:2px;background:#a0a0a0;"></div>
<div class="a" style="left:853px;top:232px;width:667px;height:2px;background:#fff;"></div>
<div class="a" style="left:1516px;top:174px;width:2px;height:58px;background:#a0a0a0;"></div>
<div class="a" style="left:1518px;top:174px;width:2px;height:58px;background:#fff;"></div>
<svg class="a" style="left:880px;top:184px" width="32" height="32" viewBox="0 0 16 16" shape-rendering="crispEdges"><path fill="#fff" d="M3 3h13v1h-13zM2 4h2v1h-2zM14 4h2v1h-2zM2 5h1v1h-1zM4 5h9v1h-9zM14 5h2v1h-2zM2 6h1v1h-1zM4 6h9v1h-9zM14 6h2v1h-2zM2 7h1v1h-1zM4 7h9v1h-9zM14 7h2v1h-2zM2 8h1v1h-1zM4 8h12v1h-12zM2 9h1v1h-1zM14 9h2v1h-2zM2 10h14v1h-14zM3 11h1v1h-1zM5 11h1v1h-1zM14 11h1v1h-1zM3 12h1v1h-1zM5 12h2v1h-2zM14 12h1v1h-1zM3 13h1v1h-1zM5 13h1v1h-1zM14 13h1v1h-1zM3 14h12v1h-12z"/><path fill="#a0a0a0" d="M2 2h13v1h-13zM1 3h2v1h-2zM13 3h2v1h-2zM1 4h1v1h-1zM3 4h9v1h-9zM13 4h2v1h-2zM1 5h1v1h-1zM3 5h9v1h-9zM13 5h2v1h-2zM1 6h1v1h-1zM3 6h9v1h-9zM13 6h2v1h-2zM1 7h1v1h-1zM3 7h12v1h-12zM1 8h1v1h-1zM13 8h2v1h-2zM1 9h14v1h-14zM2 10h1v1h-1zM4 10h1v1h-1zM13 10h1v1h-1zM2 11h1v1h-1zM4 11h2v1h-2zM13 11h1v1h-1zM2 12h1v1h-1zM4 12h1v1h-1zM13 12h1v1h-1zM2 13h12v1h-12z"/></svg>
<svg class="a" style="left:926px;top:184px" width="32" height="32" viewBox="0 0 16 16" shape-rendering="crispEdges"><path fill="#000" d="M3 2h12v1h-12zM2 3h1v1h-1zM6 3h10v1h-10zM2 4h1v1h-1zM4 4h1v1h-1zM7 4h9v1h-9zM1 5h1v1h-1zM4 5h1v1h-1zM7 5h1v1h-1zM13 5h3v1h-3zM1 6h1v1h-1zM7 6h9v1h-9zM1 7h6v1h-6zM13 7h1v1h-1zM2 8h1v1h-1zM6 8h1v1h-1zM14 8h1v1h-1zM3 9h4v1h-4zM14 9h1v1h-1zM6 10h1v1h-1zM14 10h1v1h-1zM5 11h11v1h-11zM5 12h1v1h-1zM15 12h1v1h-1zM5 13h11v1h-11z"/><path fill="#ff0" d="M3 3h3v1h-3zM3 4h1v1h-1zM5 4h2v1h-2zM2 5h2v1h-2zM5 5h2v1h-2zM2 6h5v1h-5z"/><path fill="#fff" d="M8 5h2v1h-2zM11 5h2v1h-2zM7 7h6v1h-6zM3 8h3v1h-3zM7 8h1v1h-1zM13 8h1v1h-1zM7 9h1v1h-1zM13 9h1v1h-1zM7 10h7v1h-7zM6 12h1v1h-1z"/><path fill="#a0a0a0" d="M10 5h1v1h-1z"/><path fill="#00f" d="M8 8h5v1h-5zM8 9h2v1h-2zM11 9h2v1h-2z"/><path fill="#0ff" d="M10 9h1v1h-1z"/><path fill="#c0c0c0" d="M7 12h8v1h-8z"/></svg>
<div class="a" style="left:974px;top:180px;width:2px;height:44px;background:#a0a0a0;"></div>
<div class="a" style="left:976px;top:180px;width:2px;height:44px;background:#fff;"></div>
<svg class="a" style="left:988px;top:184px" width="32" height="32" viewBox="0 0 16 16" shape-rendering="crispEdges"><path fill="#fff" d="M3 3h10v1h-10zM3 4h1v1h-1zM13 4h2v1h-2zM3 5h8v1h-8zM13 5h3v1h-3zM3 6h1v1h-1zM13 6h1v1h-1zM15 6h1v1h-1zM3 7h8v1h-8zM13 7h1v1h-1zM15 7h1v1h-1zM3 8h1v1h-1zM13 8h3v1h-3zM3 9h8v1h-8zM13 9h1v1h-1zM15 9h1v1h-1zM3 10h1v1h-1zM13 10h1v1h-1zM15 10h1v1h-1zM3 11h13v1h-13zM7 12h5v1h-5zM13 12h1v1h-1zM15 12h2v1h-2zM12 13h2v1h-2zM15 13h1v1h-1zM12 14h4v1h-4z"/><path fill="#a0a0a0" d="M2 2h10v1h-10zM2 3h1v1h-1zM12 3h2v1h-2zM2 4h8v1h-8zM12 4h3v1h-3zM2 5h1v1h-1zM12 5h1v1h-1zM14 5h1v1h-1zM2 6h8v1h-8zM12 6h1v1h-1zM14 6h1v1h-1zM2 7h1v1h-1zM12 7h3v1h-3zM2 8h8v1h-8zM12 8h1v1h-1zM14 8h1v1h-1zM2 9h1v1h-1zM12 9h1v1h-1zM14 9h1v1h-1zM2 10h13v1h-13zM6 11h5v1h-5zM12 11h1v1h-1zM14 11h2v1h-2zM11 12h2v1h-2zM14 12h1v1h-1zM11 13h4v1h-4z"/></svg>
<div class="a" style="left:1036px;top:180px;width:2px;height:44px;background:#a0a0a0;"></div>
<div class="a" style="left:1038px;top:180px;width:2px;height:44px;background:#fff;"></div>
<svg class="a" style="left:1050px;top:184px" width="32" height="32" viewBox="0 0 16 16" shape-rendering="crispEdges"><path fill="#fff" d="M8 3h4v1h-4zM7 4h1v1h-1zM9 4h1v1h-1zM12 4h2v1h-2zM5 5h3v1h-3zM9 5h1v1h-1zM11 5h1v1h-1zM13 5h1v1h-1zM4 6h1v1h-1zM7 6h1v1h-1zM9 6h1v1h-1zM11 6h1v1h-1zM13 6h1v1h-1zM4 7h1v1h-1zM7 7h1v1h-1zM9 7h1v1h-1zM11 7h1v1h-1zM13 7h2v1h-2zM4 8h1v1h-1zM7 8h1v1h-1zM9 8h1v1h-1zM11 8h1v1h-1zM13 8h1v1h-1zM15 8h1v1h-1zM1 9h2v1h-2zM4 9h1v1h-1zM7 9h1v1h-1zM9 9h1v1h-1zM11 9h1v1h-1zM13 9h1v1h-1zM15 9h1v1h-1zM1 10h1v1h-1zM3 10h2v1h-2zM7 10h7v1h-7zM15 10h1v1h-1zM1 11h1v1h-1zM4 11h1v1h-1zM8 11h5v1h-5zM15 11h1v1h-1zM2 12h1v1h-1zM4 12h1v1h-1zM8 12h2v1h-2zM11 12h2v1h-2zM15 12h1v1h-1zM3 13h2v1h-2zM15 13h1v1h-1zM4 14h1v1h-1zM14 14h1v1h-1zM5 15h10v1h-10z"/><path fill="#a0a0a0" d="M7 2h4v1h-4zM6 3h1v1h-1zM8 3h1v1h-1zM11 3h2v1h-2zM4 4h3v1h-3zM8 4h1v1h-1zM10 4h1v1h-1zM12 4h1v1h-1zM3 5h1v1h-1zM6 5h1v1h-1zM8 5h1v1h-1zM10 5h1v1h-1zM12 5h1v1h-1zM3 6h1v1h-1zM6 6h1v1h-1zM8 6h1v1h-1zM10 6h1v1h-1zM12 6h2v1h-2zM3 7h1v1h-1zM6 7h1v1h-1zM8 7h1v1h-1zM10 7h1v1h-1zM12 7h1v1h-1zM14 7h1v1h-1zM0 8h2v1h-2zM3 8h1v1h-1zM6 8h1v1h-1zM8 8h1v1h-1zM10 8h1v1h-1zM12 8h1v1h-1zM14 8h1v1h-1zM0 9h1v1h-1zM2 9h2v1h-2zM6 9h7v1h-7zM14 9h1v1h-1zM0 10h1v1h-1zM3 10h1v1h-1zM7 10h5v1h-5zM14 10h1v1h-1zM1 11h1v1h-1zM3 11h1v1h-1zM7 11h2v1h-2zM10 11h2v1h-2zM14 11h1v1h-1zM2 12h2v1h-2zM14 12h1v1h-1zM3 13h1v1h-1zM13 13h1v1h-1zM4 14h10v1h-10z"/></svg>
<svg class="a" style="left:1096px;top:184px" width="32" height="32" viewBox="0 0 16 16" shape-rendering="crispEdges"><path fill="#fff" d="M8 3h4v1h-4zM7 4h1v1h-1zM9 4h1v1h-1zM12 4h2v1h-2zM5 5h3v1h-3zM9 5h1v1h-1zM11 5h1v1h-1zM13 5h1v1h-1zM4 6h1v1h-1zM7 6h1v1h-1zM9 6h1v1h-1zM11 6h1v1h-1zM13 6h1v1h-1zM4 7h1v1h-1zM7 7h1v1h-1zM9 7h1v1h-1zM11 7h1v1h-1zM13 7h2v1h-2zM4 8h1v1h-1zM7 8h1v1h-1zM9 8h1v1h-1zM11 8h1v1h-1zM13 8h1v1h-1zM15 8h1v1h-1zM1 9h2v1h-2zM4 9h1v1h-1zM7 9h1v1h-1zM9 9h1v1h-1zM11 9h1v1h-1zM13 9h1v1h-1zM15 9h1v1h-1zM1 10h1v1h-1zM3 10h2v1h-2zM7 10h7v1h-7zM15 10h1v1h-1zM1 11h1v1h-1zM4 11h1v1h-1zM8 11h5v1h-5zM15 11h1v1h-1zM2 12h1v1h-1zM4 12h1v1h-1zM8 12h2v1h-2zM11 12h2v1h-2zM15 12h1v1h-1zM3 13h2v1h-2zM15 13h1v1h-1zM4 14h1v1h-1zM14 14h1v1h-1zM5 15h10v1h-10z"/><path fill="#a0a0a0" d="M7 2h4v1h-4zM6 3h1v1h-1zM8 3h1v1h-1zM11 3h2v1h-2zM4 4h3v1h-3zM8 4h1v1h-1zM10 4h1v1h-1zM12 4h1v1h-1zM3 5h1v1h-1zM6 5h1v1h-1zM8 5h1v1h-1zM10 5h1v1h-1zM12 5h1v1h-1zM3 6h1v1h-1zM6 6h1v1h-1zM8 6h1v1h-1zM10 6h1v1h-1zM12 6h2v1h-2zM3 7h1v1h-1zM6 7h1v1h-1zM8 7h1v1h-1zM10 7h1v1h-1zM12 7h1v1h-1zM14 7h1v1h-1zM0 8h2v1h-2zM3 8h1v1h-1zM6 8h1v1h-1zM8 8h1v1h-1zM10 8h1v1h-1zM12 8h1v1h-1zM14 8h1v1h-1zM0 9h1v1h-1zM2 9h2v1h-2zM6 9h7v1h-7zM14 9h1v1h-1zM0 10h1v1h-1zM3 10h1v1h-1zM7 10h5v1h-5zM14 10h1v1h-1zM1 11h1v1h-1zM3 11h1v1h-1zM7 11h2v1h-2zM10 11h2v1h-2zM14 11h1v1h-1zM2 12h2v1h-2zM14 12h1v1h-1zM3 13h1v1h-1zM13 13h1v1h-1zM4 14h10v1h-10z"/></svg>
<svg class="a" style="left:1142px;top:184px" width="32" height="32" viewBox="0 0 16 16" shape-rendering="crispEdges"><path fill="#fff" d="M4 4h2v1h-2zM4 5h4v1h-4zM4 6h6v1h-6zM4 7h8v1h-8zM4 8h10v1h-10zM4 9h12v1h-12zM4 10h10v1h-10zM4 11h8v1h-8zM4 12h6v1h-6zM4 13h4v1h-4zM4 14h2v1h-2z"/><path fill="#a0a0a0" d="M3 3h2v1h-2zM3 4h4v1h-4zM3 5h6v1h-6zM3 6h8v1h-8zM3 7h10v1h-10zM3 8h12v1h-12zM3 9h10v1h-10zM3 10h8v1h-8zM3 11h6v1h-6zM3 12h4v1h-4zM3 13h2v1h-2z"/></svg>
<svg class="a" style="left:1188px;top:184px" width="32" height="32" viewBox="0 0 16 16" shape-rendering="crispEdges"><path fill="#fff" d="M3.5 4h10v1h-10zM3.5 5h10v1h-10zM3.5 6h10v1h-10zM3.5 7h10v1h-10zM3.5 8h10v1h-10zM3.5 9h10v1h-10zM3.5 10h10v1h-10zM3.5 11h10v1h-10zM3.5 12h10v1h-10zM3.5 13h10v1h-10zM3.5 14h10v1h-10zM3.5 15h10v1h-10z"/><path fill="#a0a0a0" d="M2.5 3h10v1h-10zM2.5 4h10v1h-10zM2.5 5h10v1h-10zM2.5 6h10v1h-10zM2.5 7h10v1h-10zM2.5 8h10v1h-10zM2.5 9h10v1h-10zM2.5 10h10v1h-10zM2.5 11h10v1h-10zM2.5 12h10v1h-10zM2.5 13h10v1h-10zM2.5 14h10v1h-10z"/></svg>
<svg class="a" style="left:1234px;top:184px" width="32" height="32" viewBox="0 0 16 16" shape-rendering="crispEdges"><path fill="#fff" d="M3 4h5v1h-5zM9 4h5v1h-5zM3 5h5v1h-5zM9 5h5v1h-5zM3 6h5v1h-5zM9 6h5v1h-5zM3 7h5v1h-5zM9 7h5v1h-5zM3 8h5v1h-5zM9 8h5v1h-5zM3 9h5v1h-5zM9 9h5v1h-5zM3 10h5v1h-5zM9 10h5v1h-5zM3 11h5v1h-5zM9 11h5v1h-5zM3 12h5v1h-5zM9 12h5v1h-5zM3 13h5v1h-5zM9 13h5v1h-5zM3 14h5v1h-5zM9 14h5v1h-5zM3 15h5v1h-5zM9 15h5v1h-5z"/><path fill="#a0a0a0" d="M2 3h5v1h-5zM8 3h5v1h-5zM2 4h5v1h-5zM8 4h5v1h-5zM2 5h5v1h-5zM8 5h5v1h-5zM2 6h5v1h-5zM8 6h5v1h-5zM2 7h5v1h-5zM8 7h5v1h-5zM2 8h5v1h-5zM8 8h5v1h-5zM2 9h5v1h-5zM8 9h5v1h-5zM2 10h5v1h-5zM8 10h5v1h-5zM2 11h5v1h-5zM8 11h5v1h-5zM2 12h5v1h-5zM8 12h5v1h-5zM2 13h5v1h-5zM8 13h5v1h-5zM2 14h5v1h-5zM8 14h5v1h-5z"/></svg>
<svg class="a" style="left:1280px;top:184px" width="32" height="32" viewBox="0 0 16 16" shape-rendering="crispEdges"><path fill="#fff" d="M14 3h3v1h-3zM2 4h3v1h-3zM14 4h3v1h-3zM2 5h5v1h-5zM14 5h3v1h-3zM2 6h7v1h-7zM14 6h3v1h-3zM2 7h9v1h-9zM14 7h3v1h-3zM2 8h11v1h-11zM14 8h3v1h-3zM2 9h15v1h-15zM2 10h11v1h-11zM14 10h3v1h-3zM2 11h9v1h-9zM14 11h3v1h-3zM2 12h7v1h-7zM14 12h3v1h-3zM2 13h5v1h-5zM14 13h3v1h-3zM2 14h3v1h-3zM14 14h3v1h-3zM14 15h3v1h-3z"/><path fill="#a0a0a0" d="M13 2h3v1h-3zM1 3h3v1h-3zM13 3h3v1h-3zM1 4h5v1h-5zM13 4h3v1h-3zM1 5h7v1h-7zM13 5h3v1h-3zM1 6h9v1h-9zM13 6h3v1h-3zM1 7h11v1h-11zM13 7h3v1h-3zM1 8h15v1h-15zM1 9h11v1h-11zM13 9h3v1h-3zM1 10h9v1h-9zM13 10h3v1h-3zM1 11h7v1h-7zM13 11h3v1h-3zM1 12h5v1h-5zM13 12h3v1h-3zM1 13h3v1h-3zM13 13h3v1h-3zM13 14h3v1h-3z"/></svg>
<svg class="a" style="left:1326px;top:184px" width="32" height="32" viewBox="0 0 16 16" shape-rendering="crispEdges"><path fill="#fff" d="M1.5 3h1v1h-1zM7.5 3h2v1h-2zM1.5 4h2v1h-2zM7.5 4h2v1h-2zM1.5 5h3v1h-3zM7.5 5h2v1h-2zM10.5 5h5v1h-5zM1.5 6h4v1h-4zM7.5 6h2v1h-2zM10.5 6h2v1h-2zM14.5 6h3v1h-3zM1.5 7h3v1h-3zM7.5 7h2v1h-2zM10.5 7h2v1h-2zM1.5 8h2v1h-2zM7.5 8h2v1h-2zM10.5 8h2v1h-2zM14.5 8h3v1h-3zM1.5 9h1v1h-1zM7.5 9h2v1h-2zM10.5 9h2v1h-2zM5.5 10h11v1h-11zM3.5 11h12v1h-12zM5.5 12h9v1h-9zM5.5 13h9v1h-9zM5.5 14h9v1h-9z"/><path fill="#a0a0a0" d="M0.5 2h1v1h-1zM6.5 2h2v1h-2zM0.5 3h2v1h-2zM6.5 3h2v1h-2zM0.5 4h3v1h-3zM6.5 4h2v1h-2zM9.5 4h5v1h-5zM0.5 5h4v1h-4zM6.5 5h2v1h-2zM9.5 5h2v1h-2zM13.5 5h3v1h-3zM0.5 6h3v1h-3zM6.5 6h2v1h-2zM9.5 6h2v1h-2zM0.5 7h2v1h-2zM6.5 7h2v1h-2zM9.5 7h2v1h-2zM13.5 7h3v1h-3zM0.5 8h1v1h-1zM6.5 8h2v1h-2zM9.5 8h2v1h-2zM4.5 9h11v1h-11zM2.5 10h12v1h-12zM4.5 11h9v1h-9zM4.5 12h9v1h-9zM4.5 13h9v1h-9z"/></svg>
<svg class="a" style="left:1372px;top:184px" width="32" height="32" viewBox="0 0 16 16" shape-rendering="crispEdges"><path fill="#fff" d="M11.5 3h1v1h-1zM14.5 3h2v1h-2zM11.5 4h2v1h-2zM14.5 4h2v1h-2zM4.5 5h5v1h-5zM11.5 5h5v1h-5zM1.5 6h5v1h-5zM7.5 6h2v1h-2zM11.5 6h5v1h-5zM4.5 7h2v1h-2zM7.5 7h2v1h-2zM11.5 7h2v1h-2zM14.5 7h2v1h-2zM1.5 8h5v1h-5zM7.5 8h2v1h-2zM10.5 8h2v1h-2zM14.5 8h2v1h-2zM4.5 9h7v1h-7zM14.5 9h2v1h-2zM4.5 10h12v1h-12zM1.5 11h12v1h-12zM4.5 12h8v1h-8zM4.5 13h8v1h-8zM4.5 14h8v1h-8z"/><path fill="#a0a0a0" d="M10.5 2h1v1h-1zM13.5 2h2v1h-2zM10.5 3h2v1h-2zM13.5 3h2v1h-2zM3.5 4h5v1h-5zM10.5 4h5v1h-5zM0.5 5h5v1h-5zM6.5 5h2v1h-2zM10.5 5h5v1h-5zM3.5 6h2v1h-2zM6.5 6h2v1h-2zM10.5 6h2v1h-2zM13.5 6h2v1h-2zM0.5 7h5v1h-5zM6.5 7h2v1h-2zM9.5 7h2v1h-2zM13.5 7h2v1h-2zM3.5 8h7v1h-7zM13.5 8h2v1h-2zM3.5 9h12v1h-12zM0.5 10h12v1h-12zM3.5 11h8v1h-8zM3.5 12h8v1h-8zM3.5 13h8v1h-8z"/></svg>
<svg class="a" style="left:1418px;top:184px" width="32" height="32" viewBox="0 0 16 16" shape-rendering="crispEdges"><path fill="#fff" d="M2 4h3v1h-3zM9 4h3v1h-3zM2 5h4v1h-4zM9 5h4v1h-4zM2 6h5v1h-5zM9 6h5v1h-5zM2 7h6v1h-6zM9 7h6v1h-6zM2 8h14v1h-14zM2 9h15v1h-15zM2 10h14v1h-14zM2 11h6v1h-6zM9 11h6v1h-6zM2 12h5v1h-5zM9 12h5v1h-5zM2 13h4v1h-4zM9 13h4v1h-4zM2 14h3v1h-3zM9 14h3v1h-3zM2 15h2v1h-2zM9 15h2v1h-2z"/><path fill="#a0a0a0" d="M1 3h3v1h-3zM8 3h3v1h-3zM1 4h4v1h-4zM8 4h4v1h-4zM1 5h5v1h-5zM8 5h5v1h-5zM1 6h6v1h-6zM8 6h6v1h-6zM1 7h14v1h-14zM1 8h15v1h-15zM1 9h14v1h-14zM1 10h6v1h-6zM8 10h6v1h-6zM1 11h5v1h-5zM8 11h5v1h-5zM1 12h4v1h-4zM8 12h4v1h-4zM1 13h3v1h-3zM8 13h3v1h-3zM1 14h2v1h-2zM8 14h2v1h-2z"/></svg>
<svg class="a" style="left:1464px;top:184px" width="32" height="32" viewBox="0 0 16 16" shape-rendering="crispEdges"><path fill="#fff" d="M1.5 4h5v1h-5zM13.5 4h3v1h-3zM3.5 5h5v1h-5zM13.5 5h3v1h-3zM5.5 6h5v1h-5zM13.5 6h3v1h-3zM7.5 7h5v1h-5zM13.5 7h3v1h-3zM8.5 8h8v1h-8zM9.5 9h7v1h-7zM8.5 10h8v1h-8zM7.5 11h5v1h-5zM13.5 11h3v1h-3zM5.5 12h5v1h-5zM13.5 12h3v1h-3zM3.5 13h5v1h-5zM13.5 13h3v1h-3zM1.5 14h5v1h-5zM13.5 14h3v1h-3zM1.5 15h3v1h-3zM13.5 15h3v1h-3z"/><path fill="#a0a0a0" d="M0.5 3h5v1h-5zM12.5 3h3v1h-3zM2.5 4h5v1h-5zM12.5 4h3v1h-3zM4.5 5h5v1h-5zM12.5 5h3v1h-3zM6.5 6h5v1h-5zM12.5 6h3v1h-3zM7.5 7h8v1h-8zM8.5 8h7v1h-7zM7.5 9h8v1h-8zM6.5 10h5v1h-5zM12.5 10h3v1h-3zM4.5 11h5v1h-5zM12.5 11h3v1h-3zM2.5 12h5v1h-5zM12.5 12h3v1h-3zM0.5 13h5v1h-5zM12.5 13h3v1h-3zM0.5 14h3v1h-3zM12.5 14h3v1h-3z"/></svg>
<div class="a" style="left:1526px;top:176px;width:2px;height:50px;background:#fff;"></div>
<div class="a" style="left:1530px;top:176px;width:2px;height:52px;background:#a0a0a0;"></div>
<div class="a" style="left:1526px;top:226px;width:6px;height:2px;background:#a0a0a0;"></div>
<div class="a" style="left:1526px;top:176px;width:4px;height:2px;background:#fff;"></div>
<div class="a" style="left:1534px;top:176px;width:2px;height:50px;background:#fff;"></div>
<div class="a" style="left:1538px;top:176px;width:2px;height:52px;background:#a0a0a0;"></div>
<div class="a" style="left:1534px;top:226px;width:6px;height:2px;background:#a0a0a0;"></div>
<div class="a" style="left:1534px;top:176px;width:4px;height:2px;background:#fff;"></div>
<div class="a" style="left:1520px;top:230px;width:513px;height:2px;background:#a0a0a0;"></div>
<div class="a" style="left:1520px;top:232px;width:515px;height:2px;background:#fff;"></div>
<div class="a" style="left:2031px;top:174px;width:2px;height:58px;background:#a0a0a0;"></div>
<div class="a" style="left:2033px;top:174px;width:2px;height:58px;background:#fff;"></div>
<svg class="a" style="left:1549px;top:184px" width="32" height="32" viewBox="0 0 16 16" shape-rendering="crispEdges"><path fill="#fff" d="M2.5 6h12v1h-12zM2.5 7h1v1h-1zM3.5 7h1v1h-1zM4.5 7h1v1h-1zM5.5 7h1v1h-1zM6.5 7h1v1h-1zM7.5 7h1v1h-1zM8.5 7h1v1h-1zM9.5 7h1v1h-1zM10.5 7h1v1h-1zM11.5 7h1v1h-1zM12.5 7h3v1h-3zM2.5 8h2v1h-2zM4.5 8h1v1h-1zM5.5 8h1v1h-1zM6.5 8h1v1h-1zM7.5 8h1v1h-1zM8.5 8h1v1h-1zM9.5 8h1v1h-1zM10.5 8h1v1h-1zM11.5 8h1v1h-1zM12.5 8h1v1h-1zM13.5 8h2v1h-2zM2.5 9h1v1h-1zM3.5 9h1v1h-1zM4.5 9h1v1h-1zM5.5 9h1v1h-1zM6.5 9h1v1h-1zM7.5 9h1v1h-1zM8.5 9h1v1h-1zM9.5 9h1v1h-1zM10.5 9h1v1h-1zM11.5 9h1v1h-1zM12.5 9h3v1h-3zM2.5 10h2v1h-2zM4.5 10h1v1h-1zM5.5 10h1v1h-1zM6.5 10h1v1h-1zM7.5 10h1v1h-1zM8.5 10h1v1h-1zM9.5 10h1v1h-1zM10.5 10h1v1h-1zM11.5 10h1v1h-1zM12.5 10h1v1h-1zM13.5 10h2v1h-2zM2.5 11h1v1h-1zM3.5 11h1v1h-1zM4.5 11h1v1h-1zM5.5 11h1v1h-1zM6.5 11h1v1h-1zM7.5 11h1v1h-1zM8.5 11h1v1h-1zM9.5 11h1v1h-1zM10.5 11h1v1h-1zM11.5 11h1v1h-1zM12.5 11h3v1h-3zM2.5 12h13v1h-13zM3.5 13h12v1h-12zM8.5 14h1v1h-1z"/><path fill="#a0a0a0" d="M1.5 5h12v1h-12zM1.5 6h1v1h-1zM3.5 6h1v1h-1zM5.5 6h1v1h-1zM7.5 6h1v1h-1zM9.5 6h1v1h-1zM11.5 6h3v1h-3zM1.5 7h2v1h-2zM4.5 7h1v1h-1zM6.5 7h1v1h-1zM8.5 7h1v1h-1zM10.5 7h1v1h-1zM12.5 7h2v1h-2zM1.5 8h1v1h-1zM3.5 8h1v1h-1zM5.5 8h1v1h-1zM7.5 8h1v1h-1zM9.5 8h1v1h-1zM11.5 8h3v1h-3zM1.5 9h2v1h-2zM4.5 9h1v1h-1zM6.5 9h1v1h-1zM8.5 9h1v1h-1zM10.5 9h1v1h-1zM12.5 9h2v1h-2zM1.5 10h1v1h-1zM3.5 10h1v1h-1zM5.5 10h1v1h-1zM7.5 10h1v1h-1zM9.5 10h1v1h-1zM11.5 10h3v1h-3zM1.5 11h13v1h-13zM2.5 12h12v1h-12zM7.5 13h1v1h-1z"/><path fill="#fff" d="M2.5 6h1v1h-1zM4.5 6h1v1h-1zM6.5 6h1v1h-1zM8.5 6h1v1h-1zM10.5 6h1v1h-1zM3.5 7h1v1h-1zM5.5 7h1v1h-1zM7.5 7h1v1h-1zM9.5 7h1v1h-1zM11.5 7h1v1h-1zM2.5 8h1v1h-1zM4.5 8h1v1h-1zM6.5 8h1v1h-1zM8.5 8h1v1h-1zM10.5 8h1v1h-1zM3.5 9h1v1h-1zM5.5 9h1v1h-1zM7.5 9h1v1h-1zM9.5 9h1v1h-1zM11.5 9h1v1h-1zM2.5 10h1v1h-1zM4.5 10h1v1h-1zM6.5 10h1v1h-1zM8.5 10h1v1h-1zM10.5 10h1v1h-1z"/></svg>
<svg class="a" style="left:1595px;top:184px" width="32" height="32" viewBox="0 0 16 16" shape-rendering="crispEdges"><path fill="#fff" d="M1.5 5h14v1h-14zM1.5 6h1v1h-1zM2.5 6h1v1h-1zM3.5 6h2v1h-2zM5.5 6h1v1h-1zM6.5 6h1v1h-1zM7.5 6h1v1h-1zM8.5 6h1v1h-1zM9.5 6h1v1h-1zM10.5 6h3v1h-3zM13.5 6h1v1h-1zM14.5 6h2v1h-2zM1.5 7h2v1h-2zM3.5 7h1v1h-1zM4.5 7h2v1h-2zM6.5 7h1v1h-1zM7.5 7h1v1h-1zM8.5 7h1v1h-1zM9.5 7h1v1h-1zM10.5 7h1v1h-1zM11.5 7h1v1h-1zM12.5 7h1v1h-1zM13.5 7h3v1h-3zM1.5 8h1v1h-1zM2.5 8h1v1h-1zM3.5 8h2v1h-2zM5.5 8h1v1h-1zM6.5 8h1v1h-1zM7.5 8h1v1h-1zM8.5 8h1v1h-1zM9.5 8h1v1h-1zM10.5 8h3v1h-3zM13.5 8h1v1h-1zM14.5 8h2v1h-2zM1.5 9h2v1h-2zM3.5 9h1v1h-1zM4.5 9h2v1h-2zM6.5 9h1v1h-1zM7.5 9h1v1h-1zM8.5 9h1v1h-1zM9.5 9h1v1h-1zM10.5 9h1v1h-1zM11.5 9h1v1h-1zM12.5 9h1v1h-1zM13.5 9h3v1h-3zM1.5 10h1v1h-1zM2.5 10h1v1h-1zM3.5 10h2v1h-2zM5.5 10h1v1h-1zM6.5 10h1v1h-1zM7.5 10h1v1h-1zM8.5 10h1v1h-1zM9.5 10h1v1h-1zM10.5 10h3v1h-3zM13.5 10h1v1h-1zM14.5 10h2v1h-2zM1.5 11h15v1h-15zM1.5 12h15v1h-15zM2.5 13h14v1h-14zM8.5 14h1v1h-1z"/><path fill="#a0a0a0" d="M0.5 4h14v1h-14zM0.5 5h1v1h-1zM2.5 5h2v1h-2zM5.5 5h1v1h-1zM7.5 5h1v1h-1zM9.5 5h3v1h-3zM13.5 5h2v1h-2zM0.5 6h2v1h-2zM3.5 6h2v1h-2zM6.5 6h1v1h-1zM8.5 6h1v1h-1zM10.5 6h1v1h-1zM12.5 6h3v1h-3zM0.5 7h1v1h-1zM2.5 7h2v1h-2zM5.5 7h1v1h-1zM7.5 7h1v1h-1zM9.5 7h3v1h-3zM13.5 7h2v1h-2zM0.5 8h2v1h-2zM3.5 8h2v1h-2zM6.5 8h1v1h-1zM8.5 8h1v1h-1zM10.5 8h1v1h-1zM12.5 8h3v1h-3zM0.5 9h1v1h-1zM2.5 9h2v1h-2zM5.5 9h1v1h-1zM7.5 9h1v1h-1zM9.5 9h3v1h-3zM13.5 9h2v1h-2zM0.5 10h15v1h-15zM0.5 11h15v1h-15zM1.5 12h14v1h-14zM7.5 13h1v1h-1z"/><path fill="#fff" d="M1.5 5h1v1h-1zM4.5 5h1v1h-1zM6.5 5h1v1h-1zM8.5 5h1v1h-1zM12.5 5h1v1h-1zM2.5 6h1v1h-1zM5.5 6h1v1h-1zM7.5 6h1v1h-1zM9.5 6h1v1h-1zM11.5 6h1v1h-1zM1.5 7h1v1h-1zM4.5 7h1v1h-1zM6.5 7h1v1h-1zM8.5 7h1v1h-1zM12.5 7h1v1h-1zM2.5 8h1v1h-1zM5.5 8h1v1h-1zM7.5 8h1v1h-1zM9.5 8h1v1h-1zM11.5 8h1v1h-1zM1.5 9h1v1h-1zM4.5 9h1v1h-1zM6.5 9h1v1h-1zM8.5 9h1v1h-1zM12.5 9h1v1h-1z"/></svg>
<svg class="a" style="left:1641px;top:184px" width="32" height="32" viewBox="0 0 16 16" shape-rendering="crispEdges"><path fill="#fff" d="M6.5 3h5v1h-5zM7.5 4h3v1h-3zM8.5 5h1v1h-1zM2.5 6h12v1h-12zM2.5 7h1v1h-1zM3.5 7h1v1h-1zM4.5 7h1v1h-1zM5.5 7h1v1h-1zM6.5 7h1v1h-1zM7.5 7h1v1h-1zM8.5 7h1v1h-1zM9.5 7h1v1h-1zM10.5 7h1v1h-1zM11.5 7h1v1h-1zM12.5 7h3v1h-3zM2.5 8h2v1h-2zM4.5 8h1v1h-1zM5.5 8h1v1h-1zM6.5 8h1v1h-1zM7.5 8h1v1h-1zM8.5 8h1v1h-1zM9.5 8h1v1h-1zM10.5 8h1v1h-1zM11.5 8h1v1h-1zM12.5 8h1v1h-1zM13.5 8h2v1h-2zM2.5 9h1v1h-1zM3.5 9h1v1h-1zM4.5 9h1v1h-1zM5.5 9h1v1h-1zM6.5 9h1v1h-1zM7.5 9h1v1h-1zM8.5 9h1v1h-1zM9.5 9h1v1h-1zM10.5 9h1v1h-1zM11.5 9h1v1h-1zM12.5 9h3v1h-3zM2.5 10h2v1h-2zM4.5 10h1v1h-1zM5.5 10h1v1h-1zM6.5 10h1v1h-1zM7.5 10h1v1h-1zM8.5 10h1v1h-1zM9.5 10h1v1h-1zM10.5 10h1v1h-1zM11.5 10h1v1h-1zM12.5 10h1v1h-1zM13.5 10h2v1h-2zM2.5 11h1v1h-1zM3.5 11h1v1h-1zM4.5 11h1v1h-1zM5.5 11h1v1h-1zM6.5 11h1v1h-1zM7.5 11h1v1h-1zM8.5 11h1v1h-1zM9.5 11h1v1h-1zM10.5 11h1v1h-1zM11.5 11h1v1h-1zM12.5 11h3v1h-3zM2.5 12h13v1h-13zM3.5 13h12v1h-12zM8.5 14h1v1h-1z"/><path fill="#a0a0a0" d="M5.5 2h5v1h-5zM6.5 3h3v1h-3zM7.5 4h1v1h-1zM1.5 5h12v1h-12zM1.5 6h1v1h-1zM3.5 6h1v1h-1zM5.5 6h1v1h-1zM7.5 6h1v1h-1zM9.5 6h1v1h-1zM11.5 6h3v1h-3zM1.5 7h2v1h-2zM4.5 7h1v1h-1zM6.5 7h1v1h-1zM8.5 7h1v1h-1zM10.5 7h1v1h-1zM12.5 7h2v1h-2zM1.5 8h1v1h-1zM3.5 8h1v1h-1zM5.5 8h1v1h-1zM7.5 8h1v1h-1zM9.5 8h1v1h-1zM11.5 8h3v1h-3zM1.5 9h2v1h-2zM4.5 9h1v1h-1zM6.5 9h1v1h-1zM8.5 9h1v1h-1zM10.5 9h1v1h-1zM12.5 9h2v1h-2zM1.5 10h1v1h-1zM3.5 10h1v1h-1zM5.5 10h1v1h-1zM7.5 10h1v1h-1zM9.5 10h1v1h-1zM11.5 10h3v1h-3zM1.5 11h13v1h-13zM2.5 12h12v1h-12zM7.5 13h1v1h-1z"/><path fill="#fff" d="M2.5 6h1v1h-1zM4.5 6h1v1h-1zM6.5 6h1v1h-1zM8.5 6h1v1h-1zM10.5 6h1v1h-1zM3.5 7h1v1h-1zM5.5 7h1v1h-1zM7.5 7h1v1h-1zM9.5 7h1v1h-1zM11.5 7h1v1h-1zM2.5 8h1v1h-1zM4.5 8h1v1h-1zM6.5 8h1v1h-1zM8.5 8h1v1h-1zM10.5 8h1v1h-1zM3.5 9h1v1h-1zM5.5 9h1v1h-1zM7.5 9h1v1h-1zM9.5 9h1v1h-1zM11.5 9h1v1h-1zM2.5 10h1v1h-1zM4.5 10h1v1h-1zM6.5 10h1v1h-1zM8.5 10h1v1h-1zM10.5 10h1v1h-1z"/></svg>
<svg class="a" style="left:1687px;top:184px" width="32" height="32" viewBox="0 0 16 16" shape-rendering="crispEdges"><path fill="#fff" d="M8.5 4h1v1h-1zM8.5 5h1v1h-1zM2.5 6h12v1h-12zM2.5 7h1v1h-1zM3.5 7h1v1h-1zM4.5 7h1v1h-1zM5.5 7h1v1h-1zM6.5 7h1v1h-1zM7.5 7h1v1h-1zM8.5 7h1v1h-1zM9.5 7h1v1h-1zM10.5 7h1v1h-1zM11.5 7h1v1h-1zM12.5 7h3v1h-3zM2.5 8h2v1h-2zM4.5 8h1v1h-1zM5.5 8h1v1h-1zM6.5 8h1v1h-1zM7.5 8h1v1h-1zM8.5 8h1v1h-1zM9.5 8h1v1h-1zM10.5 8h1v1h-1zM11.5 8h1v1h-1zM12.5 8h1v1h-1zM13.5 8h2v1h-2zM2.5 9h1v1h-1zM3.5 9h1v1h-1zM4.5 9h1v1h-1zM5.5 9h1v1h-1zM6.5 9h1v1h-1zM7.5 9h1v1h-1zM8.5 9h1v1h-1zM9.5 9h1v1h-1zM10.5 9h1v1h-1zM11.5 9h1v1h-1zM12.5 9h3v1h-3zM2.5 10h2v1h-2zM4.5 10h1v1h-1zM5.5 10h1v1h-1zM6.5 10h1v1h-1zM7.5 10h1v1h-1zM8.5 10h1v1h-1zM9.5 10h1v1h-1zM10.5 10h1v1h-1zM11.5 10h1v1h-1zM12.5 10h1v1h-1zM13.5 10h2v1h-2zM2.5 11h1v1h-1zM3.5 11h1v1h-1zM4.5 11h1v1h-1zM5.5 11h1v1h-1zM6.5 11h1v1h-1zM7.5 11h1v1h-1zM8.5 11h1v1h-1zM9.5 11h1v1h-1zM10.5 11h1v1h-1zM11.5 11h1v1h-1zM12.5 11h3v1h-3zM2.5 12h13v1h-13zM3.5 13h12v1h-12zM7.5 14h3v1h-3zM6.5 15h5v1h-5z"/><path fill="#a0a0a0" d="M7.5 3h1v1h-1zM7.5 4h1v1h-1zM1.5 5h12v1h-12zM1.5 6h1v1h-1zM3.5 6h1v1h-1zM5.5 6h1v1h-1zM7.5 6h1v1h-1zM9.5 6h1v1h-1zM11.5 6h3v1h-3zM1.5 7h2v1h-2zM4.5 7h1v1h-1zM6.5 7h1v1h-1zM8.5 7h1v1h-1zM10.5 7h1v1h-1zM12.5 7h2v1h-2zM1.5 8h1v1h-1zM3.5 8h1v1h-1zM5.5 8h1v1h-1zM7.5 8h1v1h-1zM9.5 8h1v1h-1zM11.5 8h3v1h-3zM1.5 9h2v1h-2zM4.5 9h1v1h-1zM6.5 9h1v1h-1zM8.5 9h1v1h-1zM10.5 9h1v1h-1zM12.5 9h2v1h-2zM1.5 10h1v1h-1zM3.5 10h1v1h-1zM5.5 10h1v1h-1zM7.5 10h1v1h-1zM9.5 10h1v1h-1zM11.5 10h3v1h-3zM1.5 11h13v1h-13zM2.5 12h12v1h-12zM6.5 13h3v1h-3zM5.5 14h5v1h-5z"/><path fill="#fff" d="M2.5 6h1v1h-1zM4.5 6h1v1h-1zM6.5 6h1v1h-1zM8.5 6h1v1h-1zM10.5 6h1v1h-1zM3.5 7h1v1h-1zM5.5 7h1v1h-1zM7.5 7h1v1h-1zM9.5 7h1v1h-1zM11.5 7h1v1h-1zM2.5 8h1v1h-1zM4.5 8h1v1h-1zM6.5 8h1v1h-1zM8.5 8h1v1h-1zM10.5 8h1v1h-1zM3.5 9h1v1h-1zM5.5 9h1v1h-1zM7.5 9h1v1h-1zM9.5 9h1v1h-1zM11.5 9h1v1h-1zM2.5 10h1v1h-1zM4.5 10h1v1h-1zM6.5 10h1v1h-1zM8.5 10h1v1h-1zM10.5 10h1v1h-1z"/></svg>
<svg class="a" style="left:1733px;top:184px" width="32" height="32" viewBox="0 0 16 16" shape-rendering="crispEdges"><path fill="#fff" d="M2.5 3h12v1h-12zM2.5 4h1v1h-1zM4.5 4h1v1h-1zM6.5 4h1v1h-1zM8.5 4h1v1h-1zM10.5 4h1v1h-1zM12.5 4h2v1h-2zM2.5 5h12v1h-12zM8.5 6h1v1h-1zM8.5 7h1v1h-1zM8.5 8h1v1h-1zM3.5 9h10v1h-10zM4.5 10h10v1h-10zM8.5 11h1v1h-1zM8.5 12h1v1h-1zM8.5 13h1v1h-1zM8.5 14h1v1h-1z"/><path fill="#a0a0a0" d="M1.5 2h12v1h-12zM1.5 3h1v1h-1zM3.5 3h1v1h-1zM5.5 3h1v1h-1zM7.5 3h1v1h-1zM9.5 3h1v1h-1zM11.5 3h2v1h-2zM1.5 4h12v1h-12zM7.5 5h1v1h-1zM7.5 6h1v1h-1zM7.5 7h1v1h-1zM2.5 8h10v1h-10zM3.5 9h10v1h-10zM7.5 10h1v1h-1zM7.5 11h1v1h-1zM7.5 12h1v1h-1zM7.5 13h1v1h-1z"/></svg>
<svg class="a" style="left:1779px;top:184px" width="32" height="32" viewBox="0 0 16 16" shape-rendering="crispEdges"><path fill="#fff" d="M2.5 3h12v1h-12zM2.5 4h1v1h-1zM4.5 4h1v1h-1zM6.5 4h1v1h-1zM8.5 4h1v1h-1zM10.5 4h1v1h-1zM12.5 4h2v1h-2zM2.5 5h12v1h-12zM8.5 6h1v1h-1zM8.5 7h1v1h-1zM8.5 8h1v1h-1zM8.5 9h1v1h-1zM0.5 10h16v1h-16zM1.5 11h15v1h-15zM2.5 12h1v1h-1zM13.5 12h1v1h-1zM2.5 13h1v1h-1zM13.5 13h1v1h-1zM0.5 14h5v1h-5zM10.5 14h5v1h-5zM2.5 15h1v1h-1zM13.5 15h1v1h-1zM2.5 16h1v1h-1zM13.5 16h1v1h-1z"/><path fill="#a0a0a0" d="M1.5 2h12v1h-12zM1.5 3h1v1h-1zM3.5 3h1v1h-1zM5.5 3h1v1h-1zM7.5 3h1v1h-1zM9.5 3h1v1h-1zM11.5 3h2v1h-2zM1.5 4h12v1h-12zM7.5 5h1v1h-1zM7.5 6h1v1h-1zM7.5 7h1v1h-1zM7.5 8h1v1h-1zM-0.5 9h16v1h-16zM0.5 10h15v1h-15zM1.5 11h1v1h-1zM12.5 11h1v1h-1zM1.5 12h1v1h-1zM12.5 12h1v1h-1zM-0.5 13h5v1h-5zM9.5 13h5v1h-5zM1.5 14h1v1h-1zM12.5 14h1v1h-1zM1.5 15h1v1h-1zM12.5 15h1v1h-1z"/></svg>
<svg class="a" style="left:1825px;top:184px" width="32" height="32" viewBox="0 0 16 16" shape-rendering="crispEdges"><path fill="#fff" d="M2.5 2h1v1h-1zM13.5 2h1v1h-1zM2.5 3h1v1h-1zM13.5 3h1v1h-1zM0.5 4h5v1h-5zM10.5 4h5v1h-5zM2.5 5h1v1h-1zM13.5 5h1v1h-1zM2.5 6h1v1h-1zM13.5 6h1v1h-1zM2.5 7h1v1h-1zM13.5 7h1v1h-1zM0.5 8h16v1h-16zM1.5 9h15v1h-15zM8.5 10h1v1h-1zM8.5 11h1v1h-1zM2.5 12h12v1h-12zM2.5 13h1v1h-1zM4.5 13h1v1h-1zM6.5 13h1v1h-1zM8.5 13h1v1h-1zM10.5 13h1v1h-1zM12.5 13h2v1h-2zM2.5 14h2v1h-2zM5.5 14h1v1h-1zM7.5 14h1v1h-1zM9.5 14h1v1h-1zM11.5 14h1v1h-1zM13.5 14h1v1h-1zM2.5 15h12v1h-12z"/><path fill="#a0a0a0" d="M1.5 1h1v1h-1zM12.5 1h1v1h-1zM1.5 2h1v1h-1zM12.5 2h1v1h-1zM-0.5 3h5v1h-5zM9.5 3h5v1h-5zM1.5 4h1v1h-1zM12.5 4h1v1h-1zM1.5 5h1v1h-1zM12.5 5h1v1h-1zM1.5 6h1v1h-1zM12.5 6h1v1h-1zM-0.5 7h16v1h-16zM0.5 8h15v1h-15zM7.5 9h1v1h-1zM7.5 10h1v1h-1zM1.5 11h12v1h-12zM1.5 12h1v1h-1zM3.5 12h1v1h-1zM5.5 12h1v1h-1zM7.5 12h1v1h-1zM9.5 12h1v1h-1zM11.5 12h2v1h-2zM1.5 13h2v1h-2zM4.5 13h1v1h-1zM6.5 13h1v1h-1zM8.5 13h1v1h-1zM10.5 13h1v1h-1zM12.5 13h1v1h-1zM1.5 14h12v1h-12z"/></svg>
<svg class="a" style="left:1871px;top:184px" width="32" height="32" viewBox="0 0 16 16" shape-rendering="crispEdges"><path fill="#fff" d="M8.5 2h1v1h-1zM8.5 3h1v1h-1zM5.5 4h7v1h-7zM8.5 5h1v1h-1zM8.5 6h1v1h-1zM0.5 8h16v1h-16zM0.5 10h16v1h-16zM3.5 11h1v1h-1zM12.5 11h1v1h-1zM3.5 12h1v1h-1zM12.5 12h1v1h-1zM0.5 13h7v1h-7zM9.5 13h7v1h-7zM0.5 14h1v1h-1zM2.5 14h1v1h-1zM4.5 14h1v1h-1zM6.5 14h1v1h-1zM9.5 14h1v1h-1zM11.5 14h1v1h-1zM13.5 14h1v1h-1zM15.5 14h1v1h-1zM0.5 15h2v1h-2zM3.5 15h1v1h-1zM5.5 15h2v1h-2zM9.5 15h2v1h-2zM12.5 15h1v1h-1zM14.5 15h2v1h-2zM0.5 16h7v1h-7zM9.5 16h7v1h-7z"/><path fill="#a0a0a0" d="M7.5 1h1v1h-1zM7.5 2h1v1h-1zM4.5 3h7v1h-7zM7.5 4h1v1h-1zM7.5 5h1v1h-1zM-0.5 7h16v1h-16zM-0.5 9h16v1h-16zM2.5 10h1v1h-1zM11.5 10h1v1h-1zM2.5 11h1v1h-1zM11.5 11h1v1h-1zM-0.5 12h7v1h-7zM8.5 12h7v1h-7zM-0.5 13h1v1h-1zM1.5 13h1v1h-1zM3.5 13h1v1h-1zM5.5 13h1v1h-1zM8.5 13h1v1h-1zM10.5 13h1v1h-1zM12.5 13h1v1h-1zM14.5 13h1v1h-1zM-0.5 14h2v1h-2zM2.5 14h1v1h-1zM4.5 14h2v1h-2zM8.5 14h2v1h-2zM11.5 14h1v1h-1zM13.5 14h2v1h-2zM-0.5 15h7v1h-7zM8.5 15h7v1h-7z"/></svg>
<svg class="a" style="left:1917px;top:184px" width="32" height="32" viewBox="0 0 16 16" shape-rendering="crispEdges"><path fill="#fff" d="M0.5 2h7v1h-7zM9.5 2h7v1h-7zM0.5 3h1v1h-1zM2.5 3h1v1h-1zM4.5 3h1v1h-1zM6.5 3h1v1h-1zM9.5 3h1v1h-1zM11.5 3h1v1h-1zM13.5 3h1v1h-1zM15.5 3h1v1h-1zM0.5 4h2v1h-2zM3.5 4h1v1h-1zM5.5 4h2v1h-2zM9.5 4h2v1h-2zM12.5 4h1v1h-1zM14.5 4h2v1h-2zM0.5 5h7v1h-7zM9.5 5h7v1h-7zM3.5 6h1v1h-1zM12.5 6h1v1h-1zM3.5 7h1v1h-1zM12.5 7h1v1h-1zM0.5 8h16v1h-16zM0.5 10h16v1h-16zM8.5 11h1v1h-1zM8.5 12h1v1h-1zM5.5 13h7v1h-7zM8.5 14h1v1h-1zM8.5 15h1v1h-1z"/><path fill="#a0a0a0" d="M-0.5 1h7v1h-7zM8.5 1h7v1h-7zM-0.5 2h1v1h-1zM1.5 2h1v1h-1zM3.5 2h1v1h-1zM5.5 2h1v1h-1zM8.5 2h1v1h-1zM10.5 2h1v1h-1zM12.5 2h1v1h-1zM14.5 2h1v1h-1zM-0.5 3h2v1h-2zM2.5 3h1v1h-1zM4.5 3h2v1h-2zM8.5 3h2v1h-2zM11.5 3h1v1h-1zM13.5 3h2v1h-2zM-0.5 4h7v1h-7zM8.5 4h7v1h-7zM2.5 5h1v1h-1zM11.5 5h1v1h-1zM2.5 6h1v1h-1zM11.5 6h1v1h-1zM-0.5 7h16v1h-16zM-0.5 9h16v1h-16zM7.5 10h1v1h-1zM7.5 11h1v1h-1zM4.5 12h7v1h-7zM7.5 13h1v1h-1zM7.5 14h1v1h-1z"/></svg>
<div class="a" style="left:1965px;top:180px;width:2px;height:44px;background:#a0a0a0;"></div>
<div class="a" style="left:1967px;top:180px;width:2px;height:44px;background:#fff;"></div>
<svg class="a" style="left:1979px;top:184px" width="32" height="32" viewBox="0 0 16 16" shape-rendering="crispEdges"><path fill="#fff" d="M3.5 4h1v1h-1zM3.5 5h1v1h-1zM3.5 6h1v1h-1zM3.5 7h1v1h-1zM3.5 8h1v1h-1zM3.5 9h10v1h-10zM12.5 10h1v1h-1zM12.5 11h1v1h-1zM12.5 12h1v1h-1zM12.5 13h1v1h-1zM12.5 14h1v1h-1z"/><path fill="#a0a0a0" d="M2.5 3h1v1h-1zM2.5 4h1v1h-1zM2.5 5h1v1h-1zM2.5 6h1v1h-1zM2.5 7h1v1h-1zM2.5 8h10v1h-10zM11.5 9h1v1h-1zM11.5 10h1v1h-1zM11.5 11h1v1h-1zM11.5 12h1v1h-1zM11.5 13h1v1h-1z"/></svg>
<div class="a" style="left:0px;top:236px;width:2px;height:52px;background:#fff;"></div>
<div class="a" style="left:2px;top:236px;width:2px;height:52px;background:#a0a0a0;"></div>
<div class="a" style="left:0px;top:286px;width:4px;height:2px;background:#a0a0a0;"></div>
<div class="a" style="left:0px;top:290px;width:421px;height:2px;background:#a0a0a0;"></div>
<div class="a" style="left:0px;top:292px;width:423px;height:2px;background:#fff;"></div>
<div class="a" style="left:419px;top:234px;width:2px;height:58px;background:#a0a0a0;"></div>
<div class="a" style="left:421px;top:234px;width:2px;height:58px;background:#fff;"></div>
<svg class="a" style="left:12px;top:244px" width="32" height="32" viewBox="0 0 16 16" shape-rendering="crispEdges"><path fill="#fff" d="M8 2h1v1h-1zM3 4h4v1h-4zM8 4h8v1h-8zM4 6h2v1h-2zM8 6h8v1h-8zM3 7h3v1h-3zM8 7h8v1h-8zM1 8h6v1h-6zM3 9h3v1h-3zM8 9h6v1h-6zM4 10h2v1h-2zM8 10h6v1h-6zM3 12h4v1h-4zM8 12h8v1h-8zM3 14h4v1h-4zM8 14h2v1h-2zM8 16h1v1h-1z"/><path fill="#a0a0a0" d="M7 1h1v1h-1zM2 3h4v1h-4zM7 3h8v1h-8zM3 5h2v1h-2zM7 5h8v1h-8zM2 6h3v1h-3zM7 6h8v1h-8zM0 7h6v1h-6zM2 8h3v1h-3zM7 8h6v1h-6zM3 9h2v1h-2zM7 9h6v1h-6zM2 11h4v1h-4zM7 11h8v1h-8zM2 13h4v1h-4zM7 13h2v1h-2zM7 15h1v1h-1z"/></svg>
<svg class="a" style="left:58px;top:244px" width="32" height="32" viewBox="0 0 16 16" shape-rendering="crispEdges"><path fill="#fff" d="M8 2h1v1h-1zM3 4h4v1h-4zM8 4h8v1h-8zM3 6h2v1h-2zM8 6h8v1h-8zM3 7h3v1h-3zM8 7h8v1h-8zM1 8h6v1h-6zM3 9h3v1h-3zM8 9h6v1h-6zM3 10h2v1h-2zM8 10h6v1h-6zM3 12h4v1h-4zM8 12h8v1h-8zM3 14h4v1h-4zM8 14h2v1h-2zM8 16h1v1h-1z"/><path fill="#a0a0a0" d="M7 1h1v1h-1zM2 3h4v1h-4zM7 3h8v1h-8zM2 5h2v1h-2zM7 5h8v1h-8zM2 6h3v1h-3zM7 6h8v1h-8zM0 7h6v1h-6zM2 8h3v1h-3zM7 8h6v1h-6zM2 9h2v1h-2zM7 9h6v1h-6zM2 11h4v1h-4zM7 11h8v1h-8zM2 13h4v1h-4zM7 13h2v1h-2zM7 15h1v1h-1z"/></svg>
<div class="a" style="left:106px;top:240px;width:2px;height:44px;background:#a0a0a0;"></div>
<div class="a" style="left:108px;top:240px;width:2px;height:44px;background:#fff;"></div>
<svg class="a" style="left:120px;top:244px" width="32" height="32" viewBox="0 0 16 16" shape-rendering="crispEdges"><path fill="#fff" d="M1 3h2v1h-2zM4 3h10v1h-10zM4 6h10v1h-10zM4 9h10v1h-10zM6 12h8v1h-8zM3 15h11v1h-11z"/><path fill="#a0a0a0" d="M0 2h2v1h-2zM3 2h10v1h-10zM3 5h10v1h-10zM3 8h10v1h-10zM5 11h8v1h-8zM2 14h11v1h-11z"/></svg>
<svg class="a" style="left:166px;top:244px" width="32" height="32" viewBox="0 0 16 16" shape-rendering="crispEdges"><path fill="#fff" d="M6 2h5v1h-5zM2 3h1v1h-1zM5 3h1v1h-1zM11 3h1v1h-1zM2 4h3v1h-3zM11 4h1v1h-1zM2 5h4v1h-4zM11 5h1v1h-1zM2 6h3v1h-3zM6 6h7v1h-7zM4 9h9v1h-9zM6 12h7v1h-7zM3 15h10v1h-10z"/><path fill="#a0a0a0" d="M5 1h5v1h-5zM1 2h1v1h-1zM4 2h1v1h-1zM10 2h1v1h-1zM1 3h3v1h-3zM10 3h1v1h-1zM1 4h4v1h-4zM10 4h1v1h-1zM1 5h3v1h-3zM5 5h7v1h-7zM3 8h9v1h-9zM5 11h7v1h-7zM2 14h10v1h-10z"/></svg>
<div class="a" style="left:214px;top:240px;width:2px;height:44px;background:#a0a0a0;"></div>
<div class="a" style="left:216px;top:240px;width:2px;height:44px;background:#fff;"></div>
<svg class="a" style="left:228px;top:244px" width="32" height="32" viewBox="0 0 16 16" shape-rendering="crispEdges"><path fill="#fff" d="M12 3h1v1h-1zM11 4h2v1h-2zM11 5h2v1h-2zM10 6h3v1h-3zM9 7h4v1h-4zM8 8h5v1h-5zM7 9h8v1h-8zM6 10h1v1h-1zM8 10h7v1h-7zM5 11h1v1h-1zM8 11h7v1h-7zM4 12h1v1h-1zM9 12h5v1h-5zM3 13h1v1h-1zM10 13h3v1h-3zM2 14h1v1h-1zM10 14h2v1h-2zM1 15h1v1h-1z"/><path fill="#a0a0a0" d="M11 2h1v1h-1zM10 3h2v1h-2zM10 4h2v1h-2zM9 5h3v1h-3zM8 6h4v1h-4zM7 7h5v1h-5zM6 8h8v1h-8zM5 9h1v1h-1zM7 9h7v1h-7zM4 10h1v1h-1zM7 10h7v1h-7zM3 11h1v1h-1zM8 11h5v1h-5zM2 12h1v1h-1zM9 12h3v1h-3zM1 13h1v1h-1zM9 13h2v1h-2zM0 14h1v1h-1z"/></svg>
<svg class="a" style="left:274px;top:244px" width="32" height="32" viewBox="0 0 16 16" shape-rendering="crispEdges"><path fill="#fff" d="M5 2h5v1h-5zM1 3h1v1h-1zM4 3h1v1h-1zM10 3h1v1h-1zM1 4h3v1h-3zM11 4h1v1h-1zM14 4h1v1h-1zM1 5h3v1h-3zM11 5h1v1h-1zM13 5h1v1h-1zM1 6h4v1h-4zM10 6h1v1h-1zM12 6h2v1h-2zM9 7h1v1h-1zM11 7h3v1h-3zM11 8h4v1h-4zM10 9h7v1h-7zM9 10h8v1h-8zM8 11h1v1h-1zM10 11h7v1h-7zM7 12h1v1h-1zM11 12h5v1h-5zM6 13h1v1h-1zM12 13h3v1h-3zM5 14h1v1h-1zM13 14h1v1h-1zM4 15h1v1h-1zM3 16h1v1h-1z"/><path fill="#a0a0a0" d="M4 1h5v1h-5zM0 2h1v1h-1zM3 2h1v1h-1zM9 2h1v1h-1zM0 3h3v1h-3zM10 3h1v1h-1zM13 3h1v1h-1zM0 4h3v1h-3zM10 4h1v1h-1zM12 4h1v1h-1zM0 5h4v1h-4zM9 5h1v1h-1zM11 5h2v1h-2zM8 6h1v1h-1zM10 6h3v1h-3zM10 7h4v1h-4zM9 8h7v1h-7zM8 9h8v1h-8zM7 10h1v1h-1zM9 10h7v1h-7zM6 11h1v1h-1zM10 11h5v1h-5zM5 12h1v1h-1zM11 12h3v1h-3zM4 13h1v1h-1zM12 13h1v1h-1zM3 14h1v1h-1zM2 15h1v1h-1z"/></svg>
<svg class="a" style="left:320px;top:244px" width="32" height="32" viewBox="0 0 16 16" shape-rendering="crispEdges"><path fill="#fff" d="M3 2h5v1h-5zM2 3h1v1h-1zM8 3h1v1h-1zM11 3h1v1h-1zM1 4h1v1h-1zM9 4h3v1h-3zM14 4h1v1h-1zM1 5h1v1h-1zM9 5h3v1h-3zM13 5h1v1h-1zM2 6h1v1h-1zM8 6h6v1h-6zM3 7h1v1h-1zM9 7h1v1h-1zM11 7h3v1h-3zM11 8h4v1h-4zM10 9h7v1h-7zM9 10h8v1h-8zM8 11h1v1h-1zM10 11h7v1h-7zM7 12h1v1h-1zM11 12h5v1h-5zM6 13h1v1h-1zM12 13h3v1h-3zM5 14h1v1h-1zM13 14h1v1h-1zM4 15h1v1h-1zM3 16h1v1h-1z"/><path fill="#a0a0a0" d="M2 1h5v1h-5zM1 2h1v1h-1zM7 2h1v1h-1zM10 2h1v1h-1zM0 3h1v1h-1zM8 3h3v1h-3zM13 3h1v1h-1zM0 4h1v1h-1zM8 4h3v1h-3zM12 4h1v1h-1zM1 5h1v1h-1zM7 5h6v1h-6zM2 6h1v1h-1zM8 6h1v1h-1zM10 6h3v1h-3zM10 7h4v1h-4zM9 8h7v1h-7zM8 9h8v1h-8zM7 10h1v1h-1zM9 10h7v1h-7zM6 11h1v1h-1zM10 11h5v1h-5zM5 12h1v1h-1zM11 12h3v1h-3zM4 13h1v1h-1zM12 13h1v1h-1zM3 14h1v1h-1zM2 15h1v1h-1z"/></svg>
<svg class="a" style="left:366px;top:244px" width="32" height="32" viewBox="0 0 16 16" shape-rendering="crispEdges"><path fill="#fff" d="M9 2h3v1h-3zM1 3h3v1h-3zM8 3h2v1h-2zM3 4h2v1h-2zM7 4h2v1h-2zM14 4h1v1h-1zM4 5h4v1h-4zM13 5h1v1h-1zM4 6h3v1h-3zM12 6h2v1h-2zM3 7h2v1h-2zM6 7h2v1h-2zM11 7h3v1h-3zM3 8h2v1h-2zM7 8h1v1h-1zM11 8h4v1h-4zM3 9h2v1h-2zM10 9h7v1h-7zM9 10h8v1h-8zM8 11h1v1h-1zM10 11h7v1h-7zM7 12h1v1h-1zM11 12h5v1h-5zM6 13h1v1h-1zM12 13h3v1h-3zM5 14h1v1h-1zM13 14h1v1h-1zM4 15h1v1h-1zM3 16h1v1h-1z"/><path fill="#a0a0a0" d="M8 1h3v1h-3zM0 2h3v1h-3zM7 2h2v1h-2zM2 3h2v1h-2zM6 3h2v1h-2zM13 3h1v1h-1zM3 4h4v1h-4zM12 4h1v1h-1zM3 5h3v1h-3zM11 5h2v1h-2zM2 6h2v1h-2zM5 6h2v1h-2zM10 6h3v1h-3zM2 7h2v1h-2zM6 7h1v1h-1zM10 7h4v1h-4zM2 8h2v1h-2zM9 8h7v1h-7zM8 9h8v1h-8zM7 10h1v1h-1zM9 10h7v1h-7zM6 11h1v1h-1zM10 11h5v1h-5zM5 12h1v1h-1zM11 12h3v1h-3zM4 13h1v1h-1zM12 13h1v1h-1zM3 14h1v1h-1zM2 15h1v1h-1z"/></svg>
<div class="a" style="left:0px;top:290px;width:2361px;height:2px;background:#999;"></div>
<div class="a" style="left:0px;top:292px;width:596px;height:2px;background:#fff;"></div>
<div class="a" style="left:0px;top:303px;width:522px;height:2px;background:#fff;"></div>
<div class="a" style="left:0px;top:306px;width:522px;height:2px;background:#a0a0a0;"></div>
<div class="a" style="left:0px;top:310px;width:522px;height:2px;background:#fff;"></div>
<div class="a" style="left:0px;top:314px;width:522px;height:2px;background:#a0a0a0;"></div>
<div class="a" style="left:520px;top:302px;width:2px;height:6px;background:#a0a0a0;"></div>
<div class="a" style="left:520px;top:310px;width:2px;height:6px;background:#a0a0a0;"></div>
<div class="a" style="left:524px;top:296px;width:24px;height:24px;border:2px solid;border-color:#fff #808080 #808080 #fff;background:#f0f0f0"></div>
<svg class="a" style="left:530px;top:302px" width="12" height="10" viewBox="0 0 12 10"><path d="M1 2h10L6 8z" fill="#a0a0a0"/></svg>
<div class="a" style="left:552px;top:298px;width:22px;height:22px;border:2px solid;border-color:#fff #808080 #808080 #fff;background:#f0f0f0"></div>
<svg class="a" style="left:556px;top:303px" width="14" height="12" viewBox="0 0 14 12" shape-rendering="crispEdges"><path d="M1 1h3v1h1v1h1v1h2v-1h1v-1h1v-1h3v2h-1v1h-1v1h-1v2h1v1h1v1h1v2h-3v-1h-1v-1h-1v-1h-2v1h-1v1h-1v1h-3v-2h1v-1h1v-1h1v-2h-1v-1h-1v-1h-1z" fill="#000"/></svg>
<div class="a" style="left:0px;top:324px;width:576px;height:2px;background:#a0a0a0;"></div>
<div class="a" style="left:0px;top:326px;width:576px;height:2px;background:#646464;"></div>
<div class="a" style="left:0px;top:328px;width:574px;height:1044px;background:#fff;"></div>
<div class="a" style="left:574px;top:326px;width:2px;height:1046px;background:#e3e3e3;"></div>
<div class="a" style="left:576px;top:326px;width:2px;height:1046px;background:#fff;"></div>
<div class="a" style="left:588px;top:292px;width:2px;height:1080px;background:#fff;"></div>
<div class="a" style="left:596px;top:292px;width:2px;height:1080px;background:#a0a0a0;"></div>
<div class="a" style="left:598px;top:292px;width:2px;height:1080px;background:#696969;"></div>
<div class="a" style="left:596px;top:290px;width:1765px;height:2px;background:#a0a0a0;"></div>
<div class="a" style="left:598px;top:292px;width:1763px;height:2px;background:#696969;"></div>
<div class="a" style="left:48px;top:366px;width:2px;height:16px;background:repeating-linear-gradient(180deg,#808080 0 2px,transparent 2px 4px);"></div>
<div class="a" style="left:86px;top:406px;width:2px;height:134px;background:repeating-linear-gradient(180deg,#808080 0 2px,transparent 2px 4px);"></div>
<div class="a" style="left:124px;top:566px;width:2px;height:14px;background:repeating-linear-gradient(180deg,#808080 0 2px,transparent 2px 4px);"></div>
<div class="a" style="left:162px;top:606px;width:2px;height:102px;background:repeating-linear-gradient(180deg,#808080 0 2px,transparent 2px 4px);"></div>
<div class="a" style="left:222px;top:648px;width:46px;height:40px;background:#ebebeb;"></div>
<div class="a" style="left:2px;top:340px;width:18px;height:18px;border:2px solid #808080;background:#fff"></div>
<div class="a" style="left:6px;top:348px;width:10px;height:2px;background:#000;"></div>
<div class="a" style="left:22px;top:347px;width:12px;height:2px;background:repeating-linear-gradient(90deg,#808080 0 2px,transparent 2px 4px);"></div>
<svg class="a" style="left:32px;top:330px" width="32" height="32" viewBox="0 0 16 16" shape-rendering="crispEdges"><path fill="#000" d="M2 1h6v1h-6zM2 2h1v1h-1zM7 2h1v1h-1zM2 3h6v1h-6zM4 4h2v1h-2zM2 5h10v1h-10zM2 6h1v1h-1zM7 6h1v1h-1zM11 6h1v1h-1zM0 7h5v1h-5zM6 7h4v1h-4zM11 7h4v1h-4zM0 8h1v1h-1zM4 8h1v1h-1zM6 8h1v1h-1zM9 8h1v1h-1zM11 8h1v1h-1zM14 8h1v1h-1zM0 9h5v1h-5zM6 9h4v1h-4zM11 9h4v1h-4zM7 10h2v1h-2zM3 11h9v1h-9zM3 12h1v1h-1zM11 12h1v1h-1zM2 13h5v1h-5zM9 13h5v1h-5zM2 14h1v1h-1zM6 14h1v1h-1zM9 14h1v1h-1zM13 14h1v1h-1zM2 15h5v1h-5zM9 15h5v1h-5z"/><path fill="#c0c0c0" d="M3 2h4v1h-4zM1 8h3v1h-3zM7 8h2v1h-2zM12 8h2v1h-2zM3 14h3v1h-3zM10 14h3v1h-3z"/><path fill="#a0a0a0" d="M8 2h1v1h-1zM8 3h1v1h-1zM3 4h1v1h-1zM6 4h2v1h-2zM5 8h1v1h-1zM10 8h1v1h-1zM15 8h1v1h-1zM5 9h1v1h-1zM10 9h1v1h-1zM15 9h1v1h-1zM1 10h3v1h-3zM12 10h3v1h-3zM7 14h1v1h-1zM14 14h1v1h-1zM7 15h1v1h-1zM14 15h1v1h-1zM3 16h4v1h-4zM10 16h4v1h-4z"/></svg>
<span class="t" style="left:74px;top:332px;">新工程</span>
<div class="a" style="left:40px;top:380px;width:18px;height:18px;border:2px solid #808080;background:#fff"></div>
<div class="a" style="left:44px;top:388px;width:10px;height:2px;background:#000;"></div>
<div class="a" style="left:60px;top:387px;width:12px;height:2px;background:repeating-linear-gradient(90deg,#808080 0 2px,transparent 2px 4px);"></div>
<svg class="a" style="left:70px;top:370px" width="32" height="32" viewBox="0 0 16 16" shape-rendering="crispEdges"><path fill="#000" d="M2 3h13v1h-13zM1 4h15v1h-15zM0 5h2v1h-2zM14 5h2v1h-2zM0 6h16v1h-16zM0 7h16v1h-16zM0 8h3v1h-3zM4 8h1v1h-1zM6 8h10v1h-10zM0 9h3v1h-3zM4 9h1v1h-1zM6 9h10v1h-10zM0 10h16v1h-16zM0 11h1v1h-1zM4 11h1v1h-1zM13 11h3v1h-3zM0 12h1v1h-1zM4 12h1v1h-1zM13 12h2v1h-2zM0 13h14v1h-14z"/><path fill="#c0c0c0" d="M15 3h1v1h-1zM2 5h12v1h-12zM5 11h8v1h-8zM5 12h8v1h-8z"/><path fill="#f00" d="M3 8h1v1h-1zM5 8h1v1h-1zM3 9h1v1h-1zM5 9h1v1h-1z"/><path fill="#0f0" d="M1 11h3v1h-3zM1 12h3v1h-3z"/></svg>
<span class="t" style="left:112px;top:372px;">新PLC1[CP1E] 离线</span>
<div class="a" style="left:88px;top:427px;width:22px;height:2px;background:repeating-linear-gradient(90deg,#808080 0 2px,transparent 2px 4px);"></div>
<svg class="a" style="left:110px;top:410px" width="32" height="32" viewBox="0 0 16 16" shape-rendering="crispEdges"><path fill="#808000" d="M2 2h9v1h-9zM1 3h1v1h-1zM11 3h1v1h-1zM1 4h1v1h-1zM12 4h1v1h-1zM1 5h1v1h-1zM1 6h1v1h-1zM11 6h1v1h-1zM2 7h9v1h-9z"/><path fill="#ff0" d="M2 3h1v1h-1zM4 3h1v1h-1zM6 3h1v1h-1zM8 3h1v1h-1zM10 3h1v1h-1zM3 4h1v1h-1zM5 4h1v1h-1zM7 4h1v1h-1zM9 4h1v1h-1zM2 5h1v1h-1zM4 5h1v1h-1zM6 5h1v1h-1zM8 5h1v1h-1zM10 5h1v1h-1zM3 6h1v1h-1zM5 6h1v1h-1zM7 6h1v1h-1zM9 6h1v1h-1z"/><path fill="#fff" d="M3 3h1v1h-1zM5 3h1v1h-1zM7 3h1v1h-1zM9 3h1v1h-1zM2 4h1v1h-1zM4 4h1v1h-1zM6 4h1v1h-1zM8 4h1v1h-1zM3 5h1v1h-1zM5 5h1v1h-1zM7 5h1v1h-1zM9 5h1v1h-1zM2 6h1v1h-1zM4 6h1v1h-1zM6 6h1v1h-1zM8 6h1v1h-1zM10 6h1v1h-1z"/><path fill="#000" d="M10 4h2v1h-2zM11 5h3v1h-3zM13 6h1v1h-1zM13 7h1v1h-1zM13 8h1v1h-1zM13 9h1v1h-1zM2 10h12v1h-12zM2 11h1v1h-1zM7 11h1v1h-1zM12 11h1v1h-1zM2 12h1v1h-1zM7 12h1v1h-1zM12 12h1v1h-1zM2 13h1v1h-1zM7 13h1v1h-1zM12 13h1v1h-1zM1 14h2v1h-2zM6 14h2v1h-2zM11 14h2v1h-2z"/><path fill="#c0c0c0" d="M1 12h1v1h-1zM6 12h1v1h-1zM11 12h1v1h-1zM1 13h1v1h-1zM6 13h1v1h-1zM11 13h1v1h-1z"/></svg>
<span class="t" style="left:151px;top:412px;">符号</span>
<div class="a" style="left:88px;top:467px;width:22px;height:2px;background:repeating-linear-gradient(90deg,#808080 0 2px,transparent 2px 4px);"></div>
<svg class="a" style="left:110px;top:450px" width="32" height="32" viewBox="0 0 16 16" shape-rendering="crispEdges"><path fill="#000" d="M2 1h11v1h-11zM1 2h1v1h-1zM3 2h1v1h-1zM5 2h1v1h-1zM7 2h1v1h-1zM9 2h1v1h-1zM11 2h2v1h-2zM1 3h1v1h-1zM12 3h1v1h-1zM1 4h1v1h-1zM12 4h1v1h-1zM1 5h1v1h-1zM12 5h1v1h-1zM1 6h1v1h-1zM12 6h1v1h-1zM1 7h1v1h-1zM7 7h3v1h-3zM12 7h1v1h-1zM1 8h1v1h-1zM6 8h1v1h-1zM10 8h1v1h-1zM12 8h1v1h-1zM1 9h1v1h-1zM6 9h1v1h-1zM8 9h1v1h-1zM10 9h1v1h-1zM12 9h1v1h-1zM1 10h1v1h-1zM6 10h1v1h-1zM10 10h1v1h-1zM12 10h1v1h-1zM1 11h1v1h-1zM7 11h4v1h-4zM12 11h1v1h-1zM1 12h1v1h-1zM12 12h1v1h-1zM1 13h1v1h-1zM12 13h1v1h-1zM1 14h1v1h-1zM13 14h1v1h-1zM2 15h10v1h-10z"/><path fill="#fff" d="M2 2h1v1h-1zM4 2h1v1h-1zM6 2h1v1h-1zM8 2h1v1h-1zM10 2h1v1h-1zM2 3h10v1h-10zM2 4h10v1h-10zM2 5h1v1h-1zM4 5h1v1h-1zM7 5h1v1h-1zM10 5h2v1h-2zM2 6h10v1h-10zM2 7h1v1h-1zM5 7h2v1h-2zM10 7h2v1h-2zM2 8h4v1h-4zM11 8h1v1h-1zM2 9h1v1h-1zM5 9h1v1h-1zM11 9h1v1h-1zM2 10h4v1h-4zM11 10h1v1h-1zM2 11h1v1h-1zM4 11h1v1h-1zM6 11h1v1h-1zM11 11h1v1h-1zM2 12h10v1h-10zM2 13h10v1h-10z"/><path fill="#a0a0a0" d="M13 2h1v1h-1zM13 3h1v1h-1zM13 4h1v1h-1zM3 5h1v1h-1zM5 5h2v1h-2zM8 5h2v1h-2zM13 5h1v1h-1zM13 6h1v1h-1zM3 7h2v1h-2zM13 7h1v1h-1zM13 8h1v1h-1zM3 9h2v1h-2zM13 9h1v1h-1zM13 10h1v1h-1zM3 11h1v1h-1zM5 11h1v1h-1zM13 11h1v1h-1zM13 12h1v1h-1zM13 13h1v1h-1zM14 14h1v1h-1z"/><path fill="#ff0" d="M7 8h3v1h-3zM7 9h1v1h-1zM9 9h1v1h-1zM7 10h3v1h-3z"/><path fill="#c0c0c0" d="M2 14h11v1h-11z"/></svg>
<span class="t" style="left:151px;top:452px;">设置</span>
<div class="a" style="left:88px;top:507px;width:20px;height:2px;background:repeating-linear-gradient(90deg,#808080 0 2px,transparent 2px 4px);"></div>
<svg class="a" style="left:108px;top:490px" width="32" height="32" viewBox="0 0 16 16" shape-rendering="crispEdges"><path fill="#000" d="M11 2h1v1h-1zM11 3h2v1h-2zM12 4h2v1h-2zM13 5h2v1h-2zM15 6h1v1h-1zM14 7h1v1h-1zM0 8h1v1h-1zM14 8h1v1h-1zM-1 9h1v1h-1zM13 9h2v1h-2zM0 10h1v1h-1zM10 10h2v1h-2zM13 10h1v1h-1zM1 11h2v1h-2zM8 11h2v1h-2zM11 11h1v1h-1zM13 11h1v1h-1zM2 12h1v1h-1zM4 12h1v1h-1zM6 12h2v1h-2zM9 12h1v1h-1zM11 12h1v1h-1zM3 13h1v1h-1zM5 13h2v1h-2zM8 13h1v1h-1zM10 13h1v1h-1zM4 14h1v1h-1zM6 14h1v1h-1zM8 14h1v1h-1zM5 15h1v1h-1z"/><path fill="#c0c0c0" d="M10 3h1v1h-1zM8 4h4v1h-4zM6 5h7v1h-7zM4 6h11v1h-11zM2 7h12v1h-12zM1 8h12v1h-12zM2 9h10v1h-10zM3 10h7v1h-7zM3 11h5v1h-5zM5 12h1v1h-1z"/><path fill="#a0a0a0" d="M1 9h1v1h-1zM1 10h2v1h-2z"/></svg>
<span class="t" style="left:151px;top:492px;">内存</span>
<div class="a" style="left:78px;top:540px;width:18px;height:18px;border:2px solid #808080;background:#fff"></div>
<div class="a" style="left:82px;top:548px;width:10px;height:2px;background:#000;"></div>
<div class="a" style="left:98px;top:547px;width:12px;height:2px;background:repeating-linear-gradient(90deg,#808080 0 2px,transparent 2px 4px);"></div>
<svg class="a" style="left:108px;top:530px" width="32" height="32" viewBox="0 0 16 16" shape-rendering="crispEdges"><path fill="#000" d="M2 1h1v1h-1zM7 1h1v1h-1zM9 1h2v1h-2zM1 2h1v1h-1zM3 2h1v1h-1zM6 2h1v1h-1zM8 2h1v1h-1zM11 2h1v1h-1zM0 3h1v1h-1zM3 3h1v1h-1zM6 3h1v1h-1zM9 3h1v1h-1zM11 3h1v1h-1zM1 4h1v1h-1zM4 4h1v1h-1zM7 4h1v1h-1zM11 4h2v1h-2zM2 5h1v1h-1zM5 5h1v1h-1zM8 5h1v1h-1zM11 5h1v1h-1zM13 5h1v1h-1zM5 6h1v1h-1zM8 6h1v1h-1zM11 6h1v1h-1zM13 6h1v1h-1zM3 7h1v1h-1zM6 7h1v1h-1zM9 7h1v1h-1zM12 7h1v1h-1zM14 7h1v1h-1zM4 8h1v1h-1zM7 8h1v1h-1zM10 8h1v1h-1zM14 8h1v1h-1zM4 9h1v1h-1zM7 9h1v1h-1zM10 9h1v1h-1zM13 9h2v1h-2zM5 10h1v1h-1zM8 10h1v1h-1zM11 10h1v1h-1zM14 10h2v1h-2zM5 11h1v1h-1zM8 11h1v1h-1zM11 11h1v1h-1zM14 11h2v1h-2zM6 12h1v1h-1zM9 12h1v1h-1zM12 12h1v1h-1zM15 12h1v1h-1zM6 13h2v1h-2zM9 13h1v1h-1zM12 13h1v1h-1zM15 13h1v1h-1zM7 14h2v1h-2zM10 14h2v1h-2zM13 14h2v1h-2zM8 15h7v1h-7z"/><path fill="#808000" d="M3 1h1v1h-1zM5 2h1v1h-1zM10 2h1v1h-1zM1 3h1v1h-1zM4 3h1v1h-1zM7 3h1v1h-1zM10 3h1v1h-1zM3 4h1v1h-1zM6 4h1v1h-1zM9 4h1v1h-1zM4 5h1v1h-1zM7 5h1v1h-1zM10 5h1v1h-1zM3 6h1v1h-1zM6 6h1v1h-1zM9 6h1v1h-1zM12 6h1v1h-1zM5 7h1v1h-1zM8 7h1v1h-1zM11 7h1v1h-1zM6 8h1v1h-1zM9 8h1v1h-1zM12 8h1v1h-1zM5 9h1v1h-1zM8 9h1v1h-1zM11 9h1v1h-1zM7 10h1v1h-1zM10 10h1v1h-1zM13 10h1v1h-1zM6 11h1v1h-1zM9 11h1v1h-1zM12 11h1v1h-1zM8 12h1v1h-1zM11 12h1v1h-1zM14 12h1v1h-1zM10 13h1v1h-1zM13 13h1v1h-1z"/><path fill="#ff0" d="M4 1h1v1h-1zM6 1h1v1h-1zM2 2h1v1h-1zM4 2h1v1h-1zM7 2h1v1h-1zM9 2h1v1h-1zM2 3h1v1h-1zM5 3h1v1h-1zM8 3h1v1h-1zM2 4h1v1h-1zM5 4h1v1h-1zM8 4h1v1h-1zM10 4h1v1h-1zM3 5h1v1h-1zM6 5h1v1h-1zM9 5h1v1h-1zM12 5h1v1h-1zM4 6h1v1h-1zM7 6h1v1h-1zM10 6h1v1h-1zM4 7h1v1h-1zM7 7h1v1h-1zM10 7h1v1h-1zM13 7h1v1h-1zM5 8h1v1h-1zM8 8h1v1h-1zM11 8h1v1h-1zM13 8h1v1h-1zM6 9h1v1h-1zM9 9h1v1h-1zM12 9h1v1h-1zM6 10h1v1h-1zM9 10h1v1h-1zM12 10h1v1h-1zM7 11h1v1h-1zM10 11h1v1h-1zM13 11h1v1h-1zM7 12h1v1h-1zM10 12h1v1h-1zM13 12h1v1h-1zM8 13h1v1h-1zM11 13h1v1h-1zM14 13h1v1h-1zM9 14h1v1h-1zM12 14h1v1h-1z"/><path fill="#c0c0c0" d="M5 1h1v1h-1zM8 1h1v1h-1z"/></svg>
<span class="t" style="left:151px;top:532px;">程序</span>
<div class="a" style="left:116px;top:580px;width:18px;height:18px;border:2px solid #808080;background:#fff"></div>
<div class="a" style="left:120px;top:588px;width:10px;height:2px;background:#000;"></div>
<div class="a" style="left:136px;top:587px;width:12px;height:2px;background:repeating-linear-gradient(90deg,#808080 0 2px,transparent 2px 4px);"></div>
<svg class="a" style="left:146px;top:570px" width="32" height="32" viewBox="0 0 16 16" shape-rendering="crispEdges"><path fill="#000" d="M7 1h1v1h-1zM3 2h8v1h-8zM2 3h1v1h-1zM11 3h1v1h-1zM2 4h1v1h-1zM11 4h1v1h-1zM0 5h2v1h-2zM12 5h2v1h-2zM2 6h1v1h-1zM11 6h1v1h-1zM3 7h4v1h-4zM10 7h2v1h-2zM4 8h1v1h-1zM8 8h1v1h-1zM11 8h1v1h-1zM13 8h1v1h-1zM3 9h1v1h-1zM6 9h1v1h-1zM8 9h1v1h-1zM11 9h1v1h-1zM13 9h1v1h-1zM5 10h1v1h-1zM8 10h1v1h-1zM11 10h1v1h-1zM14 10h1v1h-1zM5 11h1v1h-1zM11 11h1v1h-1zM14 11h1v1h-1zM5 12h1v1h-1zM8 12h1v1h-1zM11 12h1v1h-1zM13 12h2v1h-2zM6 13h1v1h-1zM8 13h1v1h-1zM10 13h4v1h-4zM6 14h7v1h-7zM8 15h2v1h-2z"/><path fill="#a0a0a0" d="M8 6h1v1h-1zM7 7h3v1h-3zM7 8h1v1h-1zM10 8h1v1h-1zM7 9h1v1h-1z"/><path fill="#ff0" d="M5 8h2v1h-2zM9 8h1v1h-1zM12 8h1v1h-1zM5 9h1v1h-1zM10 9h1v1h-1zM4 10h1v1h-1zM7 10h1v1h-1zM9 10h1v1h-1zM12 10h1v1h-1zM6 11h1v1h-1zM8 11h1v1h-1zM10 11h1v1h-1zM13 11h1v1h-1zM7 12h1v1h-1zM9 12h1v1h-1zM12 12h1v1h-1zM7 13h1v1h-1zM9 13h1v1h-1z"/><path fill="#808000" d="M4 9h1v1h-1zM9 9h1v1h-1zM12 9h1v1h-1zM6 10h1v1h-1zM10 10h1v1h-1zM13 10h1v1h-1zM7 11h1v1h-1zM9 11h1v1h-1zM12 11h1v1h-1zM6 12h1v1h-1zM10 12h1v1h-1z"/></svg>
<span class="t" style="left:188px;top:572px;">新程序1 (00)</span>
<div class="a" style="left:164px;top:627px;width:22px;height:2px;background:repeating-linear-gradient(90deg,#808080 0 2px,transparent 2px 4px);"></div>
<svg class="a" style="left:186px;top:610px" width="32" height="32" viewBox="0 0 16 16" shape-rendering="crispEdges"><path fill="#808000" d="M2 2h9v1h-9zM1 3h1v1h-1zM11 3h1v1h-1zM1 4h1v1h-1zM12 4h1v1h-1zM1 5h1v1h-1zM1 6h1v1h-1zM11 6h1v1h-1zM2 7h9v1h-9z"/><path fill="#ff0" d="M2 3h1v1h-1zM4 3h1v1h-1zM6 3h1v1h-1zM8 3h1v1h-1zM10 3h1v1h-1zM3 4h1v1h-1zM5 4h1v1h-1zM7 4h1v1h-1zM9 4h1v1h-1zM2 5h1v1h-1zM4 5h1v1h-1zM6 5h1v1h-1zM8 5h1v1h-1zM10 5h1v1h-1zM3 6h1v1h-1zM5 6h1v1h-1zM7 6h1v1h-1zM9 6h1v1h-1z"/><path fill="#fff" d="M3 3h1v1h-1zM5 3h1v1h-1zM7 3h1v1h-1zM9 3h1v1h-1zM2 4h1v1h-1zM4 4h1v1h-1zM6 4h1v1h-1zM8 4h1v1h-1zM3 5h1v1h-1zM5 5h1v1h-1zM7 5h1v1h-1zM9 5h1v1h-1zM2 6h1v1h-1zM4 6h1v1h-1zM6 6h1v1h-1zM8 6h1v1h-1zM10 6h1v1h-1z"/><path fill="#000" d="M10 4h2v1h-2zM11 5h3v1h-3zM13 6h1v1h-1zM13 7h1v1h-1zM13 8h1v1h-1zM13 9h1v1h-1zM2 10h12v1h-12zM2 11h1v1h-1zM7 11h1v1h-1zM12 11h1v1h-1zM2 12h1v1h-1zM7 12h1v1h-1zM12 12h1v1h-1zM2 13h1v1h-1zM7 13h1v1h-1zM12 13h1v1h-1zM1 14h2v1h-2zM6 14h2v1h-2zM11 14h2v1h-2z"/><path fill="#c0c0c0" d="M1 12h1v1h-1zM6 12h1v1h-1zM11 12h1v1h-1zM1 13h1v1h-1zM6 13h1v1h-1zM11 13h1v1h-1z"/></svg>
<span class="t" style="left:226px;top:612px;">符号</span>
<div class="a" style="left:164px;top:667px;width:22px;height:2px;background:repeating-linear-gradient(90deg,#808080 0 2px,transparent 2px 4px);"></div>
<svg class="a" style="left:186px;top:650px" width="32" height="32" viewBox="0 0 16 16" shape-rendering="crispEdges"><path fill="#000" d="M2 2h11v1h-11zM1 3h1v1h-1zM13 3h1v1h-1zM1 4h1v1h-1zM13 4h1v1h-1zM1 5h1v1h-1zM13 5h1v1h-1zM2 6h11v1h-11zM1 7h1v1h-1zM13 7h1v1h-1zM1 8h1v1h-1zM13 8h1v1h-1zM1 9h1v1h-1zM13 9h1v1h-1zM1 10h1v1h-1zM13 10h1v1h-1zM2 11h1v1h-1zM12 11h1v1h-1zM3 12h3v1h-3zM9 12h3v1h-3zM5 13h1v1h-1zM9 13h1v1h-1zM5 14h5v1h-5z"/><path fill="#ff0" d="M2 3h11v1h-11zM2 4h1v1h-1zM4 4h1v1h-1zM10 4h1v1h-1zM12 4h1v1h-1zM2 5h1v1h-1zM4 5h7v1h-7zM12 5h1v1h-1zM2 7h2v1h-2zM5 7h1v1h-1zM7 7h2v1h-2zM10 7h1v1h-1zM12 7h1v1h-1zM2 8h2v1h-2zM5 8h1v1h-1zM7 8h2v1h-2zM10 8h1v1h-1zM12 8h1v1h-1zM2 9h2v1h-2zM5 9h1v1h-1zM7 9h2v1h-2zM10 9h1v1h-1zM12 9h1v1h-1zM2 10h2v1h-2zM5 10h1v1h-1zM7 10h2v1h-2zM10 10h1v1h-1zM12 10h1v1h-1zM3 11h9v1h-9zM6 12h3v1h-3zM6 13h3v1h-3z"/><path fill="#fff" d="M3 4h1v1h-1zM11 4h1v1h-1zM3 5h1v1h-1zM11 5h1v1h-1z"/><path fill="#808000" d="M5 4h5v1h-5zM4 7h1v1h-1zM6 7h1v1h-1zM9 7h1v1h-1zM11 7h1v1h-1zM4 8h1v1h-1zM6 8h1v1h-1zM9 8h1v1h-1zM11 8h1v1h-1zM4 9h1v1h-1zM6 9h1v1h-1zM9 9h1v1h-1zM11 9h1v1h-1zM4 10h1v1h-1zM6 10h1v1h-1zM9 10h1v1h-1zM11 10h1v1h-1z"/></svg>
<span class="t" style="left:226px;top:652px;">段1</span>
<div class="a" style="left:164px;top:707px;width:22px;height:2px;background:repeating-linear-gradient(90deg,#808080 0 2px,transparent 2px 4px);"></div>
<svg class="a" style="left:186px;top:690px" width="32" height="32" viewBox="0 0 16 16" shape-rendering="crispEdges"><path fill="#000" d="M2 2h11v1h-11zM1 3h1v1h-1zM13 3h1v1h-1zM1 4h1v1h-1zM13 4h1v1h-1zM1 5h1v1h-1zM13 5h1v1h-1zM2 6h11v1h-11zM1 7h1v1h-1zM13 7h1v1h-1zM1 8h1v1h-1zM13 8h1v1h-1zM1 9h1v1h-1zM13 9h1v1h-1zM1 10h1v1h-1zM13 10h1v1h-1zM2 11h1v1h-1zM12 11h1v1h-1zM3 12h3v1h-3zM9 12h3v1h-3zM5 13h1v1h-1zM9 13h1v1h-1zM5 14h5v1h-5z"/><path fill="#ff0" d="M2 3h11v1h-11zM2 4h1v1h-1zM4 4h1v1h-1zM10 4h1v1h-1zM12 4h1v1h-1zM2 5h1v1h-1zM4 5h7v1h-7zM12 5h1v1h-1zM2 7h2v1h-2zM5 7h1v1h-1zM7 7h2v1h-2zM10 7h1v1h-1zM12 7h1v1h-1zM2 8h2v1h-2zM5 8h1v1h-1zM7 8h2v1h-2zM10 8h1v1h-1zM12 8h1v1h-1zM2 9h2v1h-2zM5 9h1v1h-1zM7 9h2v1h-2zM10 9h1v1h-1zM12 9h1v1h-1zM2 10h2v1h-2zM5 10h1v1h-1zM7 10h2v1h-2zM10 10h1v1h-1zM12 10h1v1h-1zM3 11h9v1h-9zM6 12h3v1h-3zM6 13h3v1h-3z"/><path fill="#fff" d="M3 4h1v1h-1zM11 4h1v1h-1zM3 5h1v1h-1zM11 5h1v1h-1z"/><path fill="#808000" d="M5 4h5v1h-5zM4 7h1v1h-1zM6 7h1v1h-1zM9 7h1v1h-1zM11 7h1v1h-1zM4 8h1v1h-1zM6 8h1v1h-1zM9 8h1v1h-1zM11 8h1v1h-1zM4 9h1v1h-1zM6 9h1v1h-1zM9 9h1v1h-1zM11 9h1v1h-1zM4 10h1v1h-1zM6 10h1v1h-1zM9 10h1v1h-1zM11 10h1v1h-1z"/></svg>
<span class="t" style="left:226px;top:692px;">END</span>
<div class="a" style="left:600px;top:294px;width:1761px;height:1060px;background:#fff;"></div>
<div class="a" style="left:600px;top:294px;width:96px;height:372px;background:#92bfe6;"></div>
<div class="a" style="left:696px;top:294px;width:2px;height:372px;background:#a0a0a0;"></div>
<div class="a" style="left:698px;top:294px;width:8px;height:375px;background:#92bfe6;"></div>
<div class="a" style="left:706px;top:294px;width:1430px;height:375px;background:#99c8ee;"></div>
<div class="a" style="left:600px;top:666px;width:96px;height:2px;background:#a0a0a0;"></div>
<div class="a" style="left:600px;top:668px;width:96px;height:2px;background:#fff;"></div>
<div class="a" style="left:600px;top:670px;width:96px;height:2px;background:#99c8ee;"></div>
<div class="a" style="left:600px;top:672px;width:96px;height:252px;background:#f0f0f0;"></div>
<div class="a" style="left:600px;top:924px;width:96px;height:2px;background:#a0a0a0;"></div>
<div class="a" style="left:600px;top:926px;width:96px;height:1px;background:#fff;"></div>
<div class="a" style="left:600px;top:927px;width:96px;height:83px;background:#f0f0f0;"></div>
<div class="a" style="left:600px;top:1010px;width:96px;height:2px;background:#a0a0a0;"></div>
<div class="a" style="left:696px;top:670px;width:2px;height:342px;background:#a0a0a0;"></div>
<svg class="a" style="left:600px;top:672px" width="96" height="6" shape-rendering="crispEdges"><defs><pattern id="hz" width="8" height="6" patternUnits="userSpaceOnUse"><rect width="8" height="6" fill="#fff"/><rect x="6" y="0" width="2" height="2" fill="#000"/><rect x="4" y="2" width="2" height="2" fill="#000"/><rect x="2" y="4" width="2" height="2" fill="#000"/></pattern></defs><rect width="96" height="6" fill="url(#hz)"/></svg>
<span class="a" style="left:605px;top:295px;font-family:'Liberation Mono',monospace;font-size:20px;line-height:20px;transform:scaleY(1.25);transform-origin:0 0;color:#00305f">O</span>
<span class="a" style="left:668px;top:319px;font-family:'Liberation Mono',monospace;font-size:20px;line-height:20px;transform:scaleY(1.25);transform-origin:0 0;color:#00305f">O</span>
<span class="a" style="left:605px;top:675px;font-family:'Liberation Mono',monospace;font-size:20px;line-height:20px;transform:scaleY(1.25);transform-origin:0 0;color:#000">1</span>
<span class="a" style="left:605px;top:931px;font-family:'Liberation Mono',monospace;font-size:20px;line-height:20px;transform:scaleY(1.25);transform-origin:0 0;color:#000">2</span>
<div class="a" style="left:706px;top:294px;width:2px;height:375px;background:#17795a;"></div>
<svg class="a" style="left:708px;top:294px" width="6" height="375" shape-rendering="crispEdges"><defs><pattern id="hv" width="6" height="8" patternUnits="userSpaceOnUse"><rect width="6" height="8" fill="#fff"/><rect x="4" y="0" width="2" height="2" fill="#000"/><rect x="2" y="2" width="2" height="2" fill="#000"/><rect x="0" y="4" width="2" height="2" fill="#000"/></pattern></defs><rect width="6" height="375" fill="url(#hv)"/></svg>
<div class="a" style="left:698px;top:669px;width:1663px;height:2px;background:#e0e0e0;"></div>
<div class="a" style="left:698px;top:928px;width:1663px;height:2px;background:#e3e3e3;"></div>
<div class="a" style="left:698px;top:1014px;width:1663px;height:2px;background:#e3e3e3;"></div>
<div class="a" style="left:910px;top:414px;width:6px;height:2px;background:#d8d8d8;"></div>
<div class="a" style="left:912px;top:412px;width:2px;height:6px;background:#d8d8d8;"></div>
<div class="a" style="left:1114px;top:414px;width:6px;height:2px;background:#d8d8d8;"></div>
<div class="a" style="left:1116px;top:412px;width:2px;height:6px;background:#d8d8d8;"></div>
<div class="a" style="left:1318px;top:414px;width:6px;height:2px;background:#d8d8d8;"></div>
<div class="a" style="left:1320px;top:412px;width:2px;height:6px;background:#d8d8d8;"></div>
<div class="a" style="left:1522px;top:414px;width:6px;height:2px;background:#d8d8d8;"></div>
<div class="a" style="left:1524px;top:412px;width:2px;height:6px;background:#d8d8d8;"></div>
<div class="a" style="left:1726px;top:414px;width:6px;height:2px;background:#d8d8d8;"></div>
<div class="a" style="left:1728px;top:412px;width:2px;height:6px;background:#d8d8d8;"></div>
<div class="a" style="left:1930px;top:414px;width:6px;height:2px;background:#d8d8d8;"></div>
<div class="a" style="left:1932px;top:412px;width:2px;height:6px;background:#d8d8d8;"></div>
<div class="a" style="left:2134px;top:414px;width:6px;height:2px;background:#d6d6d6;"></div>
<div class="a" style="left:2136px;top:412px;width:2px;height:6px;background:#d6d6d6;"></div>
<div class="a" style="left:2338px;top:414px;width:6px;height:2px;background:#d6d6d6;"></div>
<div class="a" style="left:2340px;top:412px;width:2px;height:6px;background:#d6d6d6;"></div>
<div class="a" style="left:910px;top:500px;width:6px;height:2px;background:#d8d8d8;"></div>
<div class="a" style="left:912px;top:498px;width:2px;height:6px;background:#d8d8d8;"></div>
<div class="a" style="left:1114px;top:500px;width:6px;height:2px;background:#d8d8d8;"></div>
<div class="a" style="left:1116px;top:498px;width:2px;height:6px;background:#d8d8d8;"></div>
<div class="a" style="left:1318px;top:500px;width:6px;height:2px;background:#d8d8d8;"></div>
<div class="a" style="left:1320px;top:498px;width:2px;height:6px;background:#d8d8d8;"></div>
<div class="a" style="left:1522px;top:500px;width:6px;height:2px;background:#d8d8d8;"></div>
<div class="a" style="left:1524px;top:498px;width:2px;height:6px;background:#d8d8d8;"></div>
<div class="a" style="left:1726px;top:500px;width:6px;height:2px;background:#d8d8d8;"></div>
<div class="a" style="left:1728px;top:498px;width:2px;height:6px;background:#d8d8d8;"></div>
<div class="a" style="left:1930px;top:500px;width:6px;height:2px;background:#d8d8d8;"></div>
<div class="a" style="left:1932px;top:498px;width:2px;height:6px;background:#d8d8d8;"></div>
<div class="a" style="left:2134px;top:500px;width:6px;height:2px;background:#d6d6d6;"></div>
<div class="a" style="left:2136px;top:498px;width:2px;height:6px;background:#d6d6d6;"></div>
<div class="a" style="left:2338px;top:500px;width:6px;height:2px;background:#d6d6d6;"></div>
<div class="a" style="left:2340px;top:498px;width:2px;height:6px;background:#d6d6d6;"></div>
<div class="a" style="left:910px;top:586px;width:6px;height:2px;background:#d8d8d8;"></div>
<div class="a" style="left:912px;top:584px;width:2px;height:6px;background:#d8d8d8;"></div>
<div class="a" style="left:1114px;top:586px;width:6px;height:2px;background:#d8d8d8;"></div>
<div class="a" style="left:1116px;top:584px;width:2px;height:6px;background:#d8d8d8;"></div>
<div class="a" style="left:1318px;top:586px;width:6px;height:2px;background:#d8d8d8;"></div>
<div class="a" style="left:1320px;top:584px;width:2px;height:6px;background:#d8d8d8;"></div>
<div class="a" style="left:1522px;top:586px;width:6px;height:2px;background:#d8d8d8;"></div>
<div class="a" style="left:1524px;top:584px;width:2px;height:6px;background:#d8d8d8;"></div>
<div class="a" style="left:1726px;top:586px;width:6px;height:2px;background:#d8d8d8;"></div>
<div class="a" style="left:1728px;top:584px;width:2px;height:6px;background:#d8d8d8;"></div>
<div class="a" style="left:1930px;top:586px;width:6px;height:2px;background:#d8d8d8;"></div>
<div class="a" style="left:1932px;top:584px;width:2px;height:6px;background:#d8d8d8;"></div>
<div class="a" style="left:2134px;top:586px;width:6px;height:2px;background:#d6d6d6;"></div>
<div class="a" style="left:2136px;top:584px;width:2px;height:6px;background:#d6d6d6;"></div>
<div class="a" style="left:2338px;top:586px;width:6px;height:2px;background:#d6d6d6;"></div>
<div class="a" style="left:2340px;top:584px;width:2px;height:6px;background:#d6d6d6;"></div>
<div class="a" style="left:910px;top:672px;width:6px;height:2px;background:#d6d6d6;"></div>
<div class="a" style="left:912px;top:670px;width:2px;height:6px;background:#d6d6d6;"></div>
<div class="a" style="left:1114px;top:672px;width:6px;height:2px;background:#d6d6d6;"></div>
<div class="a" style="left:1116px;top:670px;width:2px;height:6px;background:#d6d6d6;"></div>
<div class="a" style="left:1318px;top:672px;width:6px;height:2px;background:#d6d6d6;"></div>
<div class="a" style="left:1320px;top:670px;width:2px;height:6px;background:#d6d6d6;"></div>
<div class="a" style="left:1522px;top:672px;width:6px;height:2px;background:#d6d6d6;"></div>
<div class="a" style="left:1524px;top:670px;width:2px;height:6px;background:#d6d6d6;"></div>
<div class="a" style="left:1726px;top:672px;width:6px;height:2px;background:#d6d6d6;"></div>
<div class="a" style="left:1728px;top:670px;width:2px;height:6px;background:#d6d6d6;"></div>
<div class="a" style="left:1930px;top:672px;width:6px;height:2px;background:#d6d6d6;"></div>
<div class="a" style="left:1932px;top:670px;width:2px;height:6px;background:#d6d6d6;"></div>
<div class="a" style="left:2134px;top:672px;width:6px;height:2px;background:#d6d6d6;"></div>
<div class="a" style="left:2136px;top:670px;width:2px;height:6px;background:#d6d6d6;"></div>
<div class="a" style="left:2338px;top:672px;width:6px;height:2px;background:#d6d6d6;"></div>
<div class="a" style="left:2340px;top:670px;width:2px;height:6px;background:#d6d6d6;"></div>
<div class="a" style="left:910px;top:758px;width:6px;height:2px;background:#d6d6d6;"></div>
<div class="a" style="left:912px;top:756px;width:2px;height:6px;background:#d6d6d6;"></div>
<div class="a" style="left:1114px;top:758px;width:6px;height:2px;background:#d6d6d6;"></div>
<div class="a" style="left:1116px;top:756px;width:2px;height:6px;background:#d6d6d6;"></div>
<div class="a" style="left:1318px;top:758px;width:6px;height:2px;background:#d6d6d6;"></div>
<div class="a" style="left:1320px;top:756px;width:2px;height:6px;background:#d6d6d6;"></div>
<div class="a" style="left:1522px;top:758px;width:6px;height:2px;background:#d6d6d6;"></div>
<div class="a" style="left:1524px;top:756px;width:2px;height:6px;background:#d6d6d6;"></div>
<div class="a" style="left:1726px;top:758px;width:6px;height:2px;background:#d6d6d6;"></div>
<div class="a" style="left:1728px;top:756px;width:2px;height:6px;background:#d6d6d6;"></div>
<div class="a" style="left:1930px;top:758px;width:6px;height:2px;background:#d6d6d6;"></div>
<div class="a" style="left:1932px;top:756px;width:2px;height:6px;background:#d6d6d6;"></div>
<div class="a" style="left:2134px;top:758px;width:6px;height:2px;background:#d6d6d6;"></div>
<div class="a" style="left:2136px;top:756px;width:2px;height:6px;background:#d6d6d6;"></div>
<div class="a" style="left:2338px;top:758px;width:6px;height:2px;background:#d6d6d6;"></div>
<div class="a" style="left:2340px;top:756px;width:2px;height:6px;background:#d6d6d6;"></div>
<div class="a" style="left:910px;top:844px;width:6px;height:2px;background:#d6d6d6;"></div>
<div class="a" style="left:912px;top:842px;width:2px;height:6px;background:#d6d6d6;"></div>
<div class="a" style="left:1114px;top:844px;width:6px;height:2px;background:#d6d6d6;"></div>
<div class="a" style="left:1116px;top:842px;width:2px;height:6px;background:#d6d6d6;"></div>
<div class="a" style="left:1318px;top:844px;width:6px;height:2px;background:#d6d6d6;"></div>
<div class="a" style="left:1320px;top:842px;width:2px;height:6px;background:#d6d6d6;"></div>
<div class="a" style="left:1522px;top:844px;width:6px;height:2px;background:#d6d6d6;"></div>
<div class="a" style="left:1524px;top:842px;width:2px;height:6px;background:#d6d6d6;"></div>
<div class="a" style="left:1726px;top:844px;width:6px;height:2px;background:#d6d6d6;"></div>
<div class="a" style="left:1728px;top:842px;width:2px;height:6px;background:#d6d6d6;"></div>
<div class="a" style="left:1930px;top:844px;width:6px;height:2px;background:#d6d6d6;"></div>
<div class="a" style="left:1932px;top:842px;width:2px;height:6px;background:#d6d6d6;"></div>
<div class="a" style="left:2134px;top:844px;width:6px;height:2px;background:#d6d6d6;"></div>
<div class="a" style="left:2136px;top:842px;width:2px;height:6px;background:#d6d6d6;"></div>
<div class="a" style="left:2338px;top:844px;width:6px;height:2px;background:#d6d6d6;"></div>
<div class="a" style="left:2340px;top:842px;width:2px;height:6px;background:#d6d6d6;"></div>
<div class="a" style="left:910px;top:930px;width:6px;height:2px;background:#d6d6d6;"></div>
<div class="a" style="left:912px;top:928px;width:2px;height:6px;background:#d6d6d6;"></div>
<div class="a" style="left:1114px;top:930px;width:6px;height:2px;background:#d6d6d6;"></div>
<div class="a" style="left:1116px;top:928px;width:2px;height:6px;background:#d6d6d6;"></div>
<div class="a" style="left:1318px;top:930px;width:6px;height:2px;background:#d6d6d6;"></div>
<div class="a" style="left:1320px;top:928px;width:2px;height:6px;background:#d6d6d6;"></div>
<div class="a" style="left:1522px;top:930px;width:6px;height:2px;background:#d6d6d6;"></div>
<div class="a" style="left:1524px;top:928px;width:2px;height:6px;background:#d6d6d6;"></div>
<div class="a" style="left:1726px;top:930px;width:6px;height:2px;background:#d6d6d6;"></div>
<div class="a" style="left:1728px;top:928px;width:2px;height:6px;background:#d6d6d6;"></div>
<div class="a" style="left:1930px;top:930px;width:6px;height:2px;background:#d6d6d6;"></div>
<div class="a" style="left:1932px;top:928px;width:2px;height:6px;background:#d6d6d6;"></div>
<div class="a" style="left:2134px;top:930px;width:6px;height:2px;background:#d6d6d6;"></div>
<div class="a" style="left:2136px;top:928px;width:2px;height:6px;background:#d6d6d6;"></div>
<div class="a" style="left:2338px;top:930px;width:6px;height:2px;background:#d6d6d6;"></div>
<div class="a" style="left:2340px;top:928px;width:2px;height:6px;background:#d6d6d6;"></div>
<div class="a" style="left:910px;top:1016px;width:6px;height:2px;background:#d6d6d6;"></div>
<div class="a" style="left:912px;top:1014px;width:2px;height:6px;background:#d6d6d6;"></div>
<div class="a" style="left:1114px;top:1016px;width:6px;height:2px;background:#d6d6d6;"></div>
<div class="a" style="left:1116px;top:1014px;width:2px;height:6px;background:#d6d6d6;"></div>
<div class="a" style="left:1318px;top:1016px;width:6px;height:2px;background:#d6d6d6;"></div>
<div class="a" style="left:1320px;top:1014px;width:2px;height:6px;background:#d6d6d6;"></div>
<div class="a" style="left:1522px;top:1016px;width:6px;height:2px;background:#d6d6d6;"></div>
<div class="a" style="left:1524px;top:1014px;width:2px;height:6px;background:#d6d6d6;"></div>
<div class="a" style="left:1726px;top:1016px;width:6px;height:2px;background:#d6d6d6;"></div>
<div class="a" style="left:1728px;top:1014px;width:2px;height:6px;background:#d6d6d6;"></div>
<div class="a" style="left:1930px;top:1016px;width:6px;height:2px;background:#d6d6d6;"></div>
<div class="a" style="left:1932px;top:1014px;width:2px;height:6px;background:#d6d6d6;"></div>
<div class="a" style="left:2134px;top:1016px;width:6px;height:2px;background:#d6d6d6;"></div>
<div class="a" style="left:2136px;top:1014px;width:2px;height:6px;background:#d6d6d6;"></div>
<div class="a" style="left:2338px;top:1016px;width:6px;height:2px;background:#d6d6d6;"></div>
<div class="a" style="left:2340px;top:1014px;width:2px;height:6px;background:#d6d6d6;"></div>
<div class="a" style="left:714px;top:306px;width:10px;height:96px;background:#137a5f;"></div>
<div class="a" style="left:724px;top:306px;width:1637px;height:96px;background:#9bcb5b;"></div>
<span class="a" style="left:731px;top:307px;font-family:'Liberation Mono',monospace;font-size:20px;line-height:20px;color:#00305f;transform:scaleY(1.25);transform-origin:0 0">[</span>
<span class="a" style="left:743px;top:304px;font-size:24px;line-height:28px;color:#00305f">程</span>
<span class="a" style="left:767px;top:304px;font-size:24px;line-height:28px;color:#00305f">序</span>
<span class="a" style="left:791px;top:304px;font-size:24px;line-height:28px;color:#00305f">名</span>
<span class="a" style="left:827px;top:307px;font-family:'Liberation Mono',monospace;font-size:20px;line-height:20px;color:#00305f;transform:scaleY(1.25);transform-origin:0 0">:</span>
<span class="a" style="left:851px;top:304px;font-size:24px;line-height:28px;color:#00305f">新</span>
<span class="a" style="left:875px;top:304px;font-size:24px;line-height:28px;color:#00305f">程</span>
<span class="a" style="left:899px;top:304px;font-size:24px;line-height:28px;color:#00305f">序</span>
<span class="a" style="left:923px;top:307px;font-family:'Liberation Mono',monospace;font-size:20px;line-height:20px;color:#00305f;transform:scaleY(1.25);transform-origin:0 0">1</span>
<span class="a" style="left:935px;top:307px;font-family:'Liberation Mono',monospace;font-size:20px;line-height:20px;color:#00305f;transform:scaleY(1.25);transform-origin:0 0">]</span>
<span class="a" style="left:731px;top:355px;font-family:'Liberation Mono',monospace;font-size:20px;line-height:20px;color:#00305f;transform:scaleY(1.25);transform-origin:0 0">[</span>
<span class="a" style="left:743px;top:352px;font-size:24px;line-height:28px;color:#00305f">段</span>
<span class="a" style="left:767px;top:352px;font-size:24px;line-height:28px;color:#00305f">名</span>
<span class="a" style="left:791px;top:352px;font-size:24px;line-height:28px;color:#00305f">称</span>
<span class="a" style="left:827px;top:355px;font-family:'Liberation Mono',monospace;font-size:20px;line-height:20px;color:#00305f;transform:scaleY(1.25);transform-origin:0 0">:</span>
<span class="a" style="left:851px;top:352px;font-size:24px;line-height:28px;color:#00305f">段</span>
<span class="a" style="left:875px;top:355px;font-family:'Liberation Mono',monospace;font-size:20px;line-height:20px;color:#00305f;transform:scaleY(1.25);transform-origin:0 0">1</span>
<span class="a" style="left:887px;top:355px;font-family:'Liberation Mono',monospace;font-size:20px;line-height:20px;color:#00305f;transform:scaleY(1.25);transform-origin:0 0">]</span>
<span class="a" style="left:784px;top:415px;font-family:'Liberation Mono',monospace;font-size:20px;line-height:20px;color:#000;transform:scaleY(1.2);transform-origin:0 0;">P_On</span>
<div class="a" style="left:798px;top:440px;width:2px;height:30px;background:#000;"></div>
<div class="a" style="left:822px;top:440px;width:2px;height:30px;background:#000;"></div>
<div class="a" style="left:714px;top:452px;width:84px;height:2px;background:#000;"></div>
<div class="a" style="left:824px;top:452px;width:1116px;height:2px;background:#000;"></div>
<div class="a" style="left:1940px;top:440px;width:188px;height:222px;border:2px solid #000"></div>
<div class="a" style="left:1940px;top:500px;width:188px;height:2px;background:#000;"></div>
<span class="a" style="left:1984px;top:460px;font-family:'Liberation Mono',monospace;font-size:20px;line-height:20px;color:#000;transform:scaleY(1.2);transform-origin:0 0;font-size:20px;letter-spacing:0px">MOV(O21)</span>
<span class="a" style="left:2009px;top:505px;font-family:'Liberation Mono',monospace;font-size:20px;line-height:20px;color:#000;transform:scaleY(1.2);transform-origin:0 0;">&amp;1OO</span>
<div class="a" style="left:2004px;top:586px;width:60px;height:2px;background:#000;"></div>
<span class="a" style="left:2009px;top:590px;font-family:'Liberation Mono',monospace;font-size:20px;line-height:20px;color:#000;transform:scaleY(1.2);transform-origin:0 0;">D1OO</span>
<div class="a" style="left:2128px;top:452px;width:6px;height:2px;background:#000;"></div>
<div class="a" style="left:2134px;top:444px;width:2px;height:16px;background:#000;"></div>
<div class="a" style="left:1048px;top:710px;width:892px;height:2px;background:#000;"></div>
<div class="a" style="left:1940px;top:698px;width:188px;height:222px;border:2px solid #000"></div>
<div class="a" style="left:1940px;top:758px;width:188px;height:2px;background:#000;"></div>
<span class="a" style="left:1984px;top:718px;font-family:'Liberation Mono',monospace;font-size:20px;line-height:20px;color:#000;transform:scaleY(1.2);transform-origin:0 0;font-size:20px;letter-spacing:0px">MOV(O21)</span>
<span class="a" style="left:2009px;top:763px;font-family:'Liberation Mono',monospace;font-size:20px;line-height:20px;color:#000;transform:scaleY(1.2);transform-origin:0 0;">&amp;1OO</span>
<div class="a" style="left:2004px;top:844px;width:60px;height:2px;background:#000;"></div>
<span class="a" style="left:2009px;top:848px;font-family:'Liberation Mono',monospace;font-size:20px;line-height:20px;color:#000;transform:scaleY(1.2);transform-origin:0 0;">D1OO</span>
<div class="a" style="left:2128px;top:710px;width:6px;height:2px;background:#000;"></div>
<div class="a" style="left:2134px;top:702px;width:2px;height:16px;background:#000;"></div>
<div class="a" style="left:2134px;top:414px;width:2px;height:601px;background:#1e7d1e;"></div>
<div class="a" style="left:2134px;top:444px;width:2px;height:16px;background:#000;"></div>
<div class="a" style="left:2134px;top:702px;width:2px;height:16px;background:#000;"></div>
<span class="a" style="left:2155px;top:456px;font-size:24px;line-height:28px;">传送</span>
<span class="a" style="left:2155px;top:500px;font-size:24px;line-height:28px;">源字</span>
<span class="a" style="left:2155px;top:586px;font-size:24px;line-height:28px;">目标</span>
<span class="a" style="left:2155px;top:714px;font-size:24px;line-height:28px;">传送</span>
<span class="a" style="left:2155px;top:758px;font-size:24px;line-height:28px;">源字</span>
<span class="a" style="left:2155px;top:844px;font-size:24px;line-height:28px;">目标</span>
<div class="a" style="left:600px;top:1354px;width:1761px;height:2px;background:#dcdcdc;"></div>
<div class="a" style="left:600px;top:1356px;width:1761px;height:2px;background:#fff;"></div>
<div class="a" style="left:600px;top:1358px;width:1761px;height:14px;background:#f0f0f0;"></div>
<div class="a" style="left:610px;top:1356px;width:2px;height:16px;background:#a0a0a0;"></div>
<div class="a" style="left:612px;top:1354px;width:2px;height:18px;background:#696969;"></div>
<div class="a" style="left:644px;top:1356px;width:2px;height:16px;background:#a0a0a0;"></div>
<div class="a" style="left:646px;top:1354px;width:2px;height:18px;background:#696969;"></div>
<svg class="a" style="left:622px;top:1362px" width="12" height="12" shape-rendering="crispEdges"><path d="M10 2v10H0z" fill="#000"/></svg>
<div class="a" style="left:1670px;top:1356px;width:2px;height:16px;background:#a0a0a0;"></div>
<div class="a" style="left:1672px;top:1354px;width:2px;height:18px;background:#696969;"></div>
<div class="a" style="left:1674px;top:1354px;width:687px;height:18px;background:repeating-conic-gradient(#f0f0f0 0 25%,#fff 0 50%) 0 0/4px 4px"></div>
<div class="a" style="left:1048px;top:472px;width:6px;height:872px;background:linear-gradient(90deg,rgba(0,0,0,.30),rgba(0,0,0,.22) 40%,rgba(0,0,0,.06))"></div>
<div class="a" style="left:648px;top:1338px;width:400px;height:6px;background:linear-gradient(180deg,rgba(0,0,0,.30),rgba(0,0,0,.22) 40%,rgba(0,0,0,.06))"></div>
<div class="a" style="left:636px;top:462px;width:412px;height:876px;background:#f0f0f0;border:2px solid #a0a0a0"></div>
<span class="t" style="left:688px;top:473px;color:#000">在线编辑(<u>E</u>)</span>
<svg class="a" style="left:1020px;top:476px" width="8" height="14" shape-rendering="crispEdges"><path d="M0 0h2v2h2v2h2v2h2v2h-2v2h-2v2h-2v2h-2z" fill="#000"/></svg>
<span class="t" style="left:688px;top:513px;color:#000">转移到(<u>G</u>)</span>
<svg class="a" style="left:1020px;top:516px" width="8" height="14" shape-rendering="crispEdges"><path d="M0 0h2v2h2v2h2v2h2v2h-2v2h-2v2h-2v2h-2z" fill="#000"/></svg>
<div class="a" style="left:644px;top:554px;width:396px;height:2px;background:#a0a0a0;"></div>
<div class="a" style="left:644px;top:556px;width:396px;height:2px;background:#fff;"></div>
<span class="t" style="left:688px;top:571px;color:#000">查找位地址(<u>B</u>)</span>
<span class="t" style="left:688px;top:611px;color:#000">查找符号(<u>F</u>)</span>
<span class="t" style="left:688px;top:651px;color:#000">查找所有(<u>L</u>)</span>
<div class="a" style="left:644px;top:692px;width:396px;height:2px;background:#a0a0a0;"></div>
<div class="a" style="left:644px;top:694px;width:396px;height:2px;background:#fff;"></div>
<svg class="a" style="left:654px;top:707px" width="32" height="32" viewBox="0 0 16 16" shape-rendering="crispEdges"><path fill="#000" d="M3 1h1v1h-1zM8 1h1v1h-1zM3 2h1v1h-1zM8 2h1v1h-1zM3 3h2v1h-2zM7 3h2v1h-2zM4 4h1v1h-1zM7 4h1v1h-1zM4 5h4v1h-4zM5 6h2v1h-2zM5 7h2v1h-2zM5 8h2v1h-2z"/><path fill="#000080" d="M4 8h1v1h-1zM7 8h1v1h-1zM2 9h3v1h-3zM7 9h3v1h-3zM1 10h1v1h-1zM4 10h1v1h-1zM7 10h1v1h-1zM10 10h1v1h-1zM1 11h1v1h-1zM4 11h1v1h-1zM7 11h1v1h-1zM10 11h1v1h-1zM1 12h1v1h-1zM4 12h1v1h-1zM7 12h1v1h-1zM10 12h1v1h-1zM2 13h2v1h-2zM8 13h2v1h-2z"/></svg>
<span class="t" style="left:688px;top:709px;color:#000">剪切(<u>T</u>)</span>
<div class="a" style="left:686px;top:744px;width:356px;height:40px;background:#0078d7;"></div>
<div class="a" style="left:644px;top:744px;width:40px;height:38px;border:2px solid;border-color:#fff #a0a0a0 #a0a0a0 #fff"></div>
<svg class="a" style="left:650px;top:747px" width="32" height="32" viewBox="0 0 16 16" shape-rendering="crispEdges"><path fill="#000" d="M0 1h7v1h-7zM0 2h1v1h-1zM6 2h2v1h-2zM0 3h1v1h-1zM2 3h3v1h-3zM6 3h1v1h-1zM8 3h1v1h-1zM0 4h1v1h-1zM0 5h1v1h-1zM2 5h3v1h-3zM0 6h1v1h-1zM7 6h2v1h-2zM0 7h1v1h-1zM2 7h3v1h-3zM0 8h1v1h-1zM7 8h4v1h-4zM0 9h5v1h-5zM7 10h5v1h-5z"/><path fill="#fff" d="M1 2h5v1h-5zM1 3h1v1h-1zM5 3h1v1h-1zM7 3h1v1h-1zM1 4h4v1h-4zM1 5h1v1h-1zM6 5h4v1h-4zM1 6h4v1h-4zM6 6h1v1h-1zM9 6h1v1h-1zM11 6h1v1h-1zM1 7h1v1h-1zM6 7h4v1h-4zM1 8h4v1h-4zM6 8h1v1h-1zM11 8h2v1h-2zM6 9h7v1h-7zM6 10h1v1h-1zM12 10h1v1h-1zM6 11h7v1h-7z"/><path fill="#000080" d="M5 4h6v1h-6zM5 5h1v1h-1zM10 5h2v1h-2zM5 6h1v1h-1zM10 6h1v1h-1zM12 6h1v1h-1zM5 7h1v1h-1zM10 7h4v1h-4zM5 8h1v1h-1zM13 8h1v1h-1zM5 9h1v1h-1zM13 9h1v1h-1zM5 10h1v1h-1zM13 10h1v1h-1zM5 11h1v1h-1zM13 11h1v1h-1zM5 12h9v1h-9z"/></svg>
<span class="t" style="left:688px;top:749px;color:#fff">复制(<u>C</u>)</span>
<svg class="a" style="left:650px;top:787px" width="32" height="32" viewBox="0 0 16 16" shape-rendering="crispEdges"><path fill="#000" d="M6 1h1v1h-1zM9 1h1v1h-1zM1 2h5v1h-5zM7 2h2v1h-2zM10 2h4v1h-4zM0 3h1v1h-1zM4 3h1v1h-1zM11 3h1v1h-1zM14 3h1v1h-1zM0 4h1v1h-1zM5 4h6v1h-6zM14 4h1v1h-1zM0 5h1v1h-1zM14 5h1v1h-1zM0 6h1v1h-1zM14 6h1v1h-1zM0 7h1v1h-1zM13 7h1v1h-1zM0 8h1v1h-1zM13 8h1v1h-1zM0 9h1v1h-1zM0 10h1v1h-1zM0 11h1v1h-1zM0 12h6v1h-6z"/><path fill="#ff0" d="M7 1h2v1h-2zM6 2h1v1h-1zM9 2h1v1h-1z"/><path fill="#808000" d="M1 3h1v1h-1zM3 3h1v1h-1zM13 3h1v1h-1zM2 4h1v1h-1zM4 4h1v1h-1zM11 4h1v1h-1zM13 4h1v1h-1zM1 5h1v1h-1zM3 5h1v1h-1zM5 5h1v1h-1zM7 5h1v1h-1zM9 5h1v1h-1zM11 5h1v1h-1zM13 5h1v1h-1zM2 6h1v1h-1zM4 6h1v1h-1zM6 6h1v1h-1zM8 6h1v1h-1zM10 6h1v1h-1zM12 6h1v1h-1zM1 7h1v1h-1zM3 7h1v1h-1zM5 7h1v1h-1zM12 7h1v1h-1zM2 8h1v1h-1zM4 8h1v1h-1zM1 9h1v1h-1zM3 9h1v1h-1zM5 9h1v1h-1zM2 10h1v1h-1zM4 10h1v1h-1zM1 11h1v1h-1zM3 11h1v1h-1zM5 11h1v1h-1z"/><path fill="#c0c0c0" d="M2 3h1v1h-1zM12 3h1v1h-1zM1 4h1v1h-1zM3 4h1v1h-1zM12 4h1v1h-1zM2 5h1v1h-1zM4 5h1v1h-1zM6 5h1v1h-1zM8 5h1v1h-1zM10 5h1v1h-1zM12 5h1v1h-1zM1 6h1v1h-1zM3 6h1v1h-1zM5 6h1v1h-1zM7 6h1v1h-1zM9 6h1v1h-1zM11 6h1v1h-1zM13 6h1v1h-1zM2 7h1v1h-1zM4 7h1v1h-1zM1 8h1v1h-1zM3 8h1v1h-1zM5 8h1v1h-1zM2 9h1v1h-1zM4 9h1v1h-1zM1 10h1v1h-1zM3 10h1v1h-1zM5 10h1v1h-1zM2 11h1v1h-1zM4 11h1v1h-1z"/><path fill="#fff" d="M5 3h6v1h-6zM7 8h4v1h-4zM7 9h1v1h-1zM10 9h1v1h-1zM12 9h1v1h-1zM7 10h6v1h-6zM7 11h1v1h-1zM12 11h1v1h-1zM7 12h6v1h-6z"/><path fill="#000080" d="M6 7h6v1h-6zM6 8h1v1h-1zM11 8h2v1h-2zM6 9h1v1h-1zM8 9h2v1h-2zM11 9h1v1h-1zM13 9h1v1h-1zM6 10h1v1h-1zM13 10h1v1h-1zM6 11h1v1h-1zM8 11h4v1h-4zM13 11h1v1h-1zM6 12h1v1h-1zM13 12h1v1h-1zM6 13h8v1h-8z"/></svg>
<span class="t" style="left:688px;top:789px;color:#000">粘贴(<u>P</u>)</span>
<svg class="a" style="left:650px;top:827px" width="32" height="32" viewBox="0 0 16 16" shape-rendering="crispEdges"><path fill="#000" d="M6 1h1v1h-1zM9 1h1v1h-1zM1 2h5v1h-5zM7 2h2v1h-2zM10 2h4v1h-4zM0 3h1v1h-1zM4 3h1v1h-1zM11 3h1v1h-1zM14 3h1v1h-1zM0 4h1v1h-1zM5 4h6v1h-6zM14 4h1v1h-1zM0 5h1v1h-1zM14 5h1v1h-1zM0 6h1v1h-1zM14 6h1v1h-1zM0 7h1v1h-1zM14 7h1v1h-1zM0 8h1v1h-1zM14 8h1v1h-1zM0 9h1v1h-1zM7 9h1v1h-1zM0 10h1v1h-1zM6 10h2v1h-2zM0 11h4v1h-4zM7 11h1v1h-1zM11 11h2v1h-2z"/><path fill="#ff0" d="M7 1h2v1h-2zM6 2h1v1h-1zM9 2h1v1h-1zM2 6h1v1h-1zM1 7h3v1h-3zM2 8h1v1h-1z"/><path fill="#808000" d="M1 3h1v1h-1zM3 3h1v1h-1zM13 3h1v1h-1zM2 4h1v1h-1zM4 4h1v1h-1zM11 4h1v1h-1zM13 4h1v1h-1zM1 5h1v1h-1zM3 5h1v1h-1zM5 5h1v1h-1zM7 5h1v1h-1zM9 5h1v1h-1zM11 5h1v1h-1zM13 5h1v1h-1zM4 6h1v1h-1zM6 6h1v1h-1zM8 6h1v1h-1zM10 6h1v1h-1zM12 6h1v1h-1zM5 7h1v1h-1zM7 7h1v1h-1zM9 7h1v1h-1zM11 7h1v1h-1zM13 7h1v1h-1zM9 8h1v1h-1zM11 8h1v1h-1zM13 8h1v1h-1zM1 9h1v1h-1zM3 9h1v1h-1zM2 10h1v1h-1z"/><path fill="#c0c0c0" d="M2 3h1v1h-1zM12 3h1v1h-1zM1 4h1v1h-1zM3 4h1v1h-1zM12 4h1v1h-1zM2 5h1v1h-1zM4 5h1v1h-1zM6 5h1v1h-1zM8 5h1v1h-1zM10 5h1v1h-1zM12 5h1v1h-1zM1 6h1v1h-1zM3 6h1v1h-1zM5 6h1v1h-1zM7 6h1v1h-1zM9 6h1v1h-1zM11 6h1v1h-1zM13 6h1v1h-1zM4 7h1v1h-1zM6 7h1v1h-1zM8 7h1v1h-1zM10 7h1v1h-1zM12 7h1v1h-1zM1 8h1v1h-1zM3 8h1v1h-1zM10 8h1v1h-1zM12 8h1v1h-1zM2 9h1v1h-1zM1 10h1v1h-1zM3 10h1v1h-1z"/><path fill="#fff" d="M5 3h6v1h-6zM5 9h2v1h-2zM5 10h1v1h-1zM9 10h5v1h-5zM5 11h2v1h-2zM9 11h2v1h-2zM13 11h1v1h-1zM9 12h5v1h-5z"/><path fill="#000080" d="M4 8h5v1h-5zM4 9h1v1h-1zM8 9h7v1h-7zM4 10h1v1h-1zM8 10h1v1h-1zM14 10h1v1h-1zM4 11h1v1h-1zM8 11h1v1h-1zM14 11h1v1h-1zM4 12h5v1h-5zM14 12h1v1h-1zM8 13h7v1h-7z"/></svg>
<span class="t" style="left:688px;top:829px;color:#000">地址增量复制(<u>Y</u>)...</span>
<span class="t" style="left:688px;top:869px;color:#000">删除(<u>D</u>)</span>
<div class="a" style="left:644px;top:910px;width:396px;height:2px;background:#a0a0a0;"></div>
<div class="a" style="left:644px;top:912px;width:396px;height:2px;background:#fff;"></div>
<svg class="a" style="left:648px;top:925px" width="32" height="32" viewBox="0 0 16 16" shape-rendering="crispEdges"><path fill="#fff" d="M1 1.5h10v1h-10zM1 2.5h1v1h-1zM3 2.5h1v1h-1zM10 2.5h1v1h-1zM12 2.5h3v1h-3zM1 3.5h1v1h-1zM3 3.5h1v1h-1zM6 3.5h1v1h-1zM8 3.5h1v1h-1zM10 3.5h1v1h-1zM14 3.5h1v1h-1zM1 4.5h1v1h-1zM3 4.5h8v1h-8zM14 4.5h1v1h-1zM1 5.5h1v1h-1zM3 5.5h1v1h-1zM6 5.5h1v1h-1zM8 5.5h1v1h-1zM10 5.5h1v1h-1zM13 5.5h3v1h-3zM1 6.5h1v1h-1zM3 6.5h1v1h-1zM10 6.5h1v1h-1zM14 6.5h1v1h-1zM1 7.5h1v1h-1zM3 7.5h1v1h-1zM6 7.5h8v1h-8zM1 8.5h1v1h-1zM3 8.5h1v1h-1zM6 8.5h1v1h-1zM7 8.5h1v1h-1zM8 8.5h1v1h-1zM9 8.5h1v1h-1zM10 8.5h1v1h-1zM11 8.5h1v1h-1zM12 8.5h4v1h-4zM1 9.5h1v1h-1zM3 9.5h5v1h-5zM8 9.5h1v1h-1zM9 9.5h1v1h-1zM10 9.5h1v1h-1zM11 9.5h1v1h-1zM12 9.5h1v1h-1zM13 9.5h1v1h-1zM1 10.5h2v1h-2zM4 10.5h1v1h-1zM6 10.5h1v1h-1zM7 10.5h1v1h-1zM8 10.5h1v1h-1zM9 10.5h1v1h-1zM10 10.5h1v1h-1zM11 10.5h1v1h-1zM12 10.5h4v1h-4zM6 11.5h2v1h-2zM8 11.5h1v1h-1zM9 11.5h1v1h-1zM10 11.5h1v1h-1zM11 11.5h1v1h-1zM12 11.5h1v1h-1zM13 11.5h1v1h-1zM4 12.5h3v1h-3zM7 12.5h1v1h-1zM8 12.5h1v1h-1zM9 12.5h1v1h-1zM10 12.5h1v1h-1zM11 12.5h1v1h-1zM12 12.5h2v1h-2zM6 13.5h2v1h-2zM8 13.5h1v1h-1zM9 13.5h1v1h-1zM10 13.5h1v1h-1zM11 13.5h1v1h-1zM12 13.5h1v1h-1zM13 13.5h1v1h-1zM6 14.5h1v1h-1zM7 14.5h1v1h-1zM8 14.5h1v1h-1zM9 14.5h1v1h-1zM10 14.5h1v1h-1zM11 14.5h1v1h-1zM12 14.5h2v1h-2zM6 15.5h8v1h-8z"/><path fill="#a0a0a0" d="M0 0.5h10v1h-10zM0 1.5h1v1h-1zM2 1.5h1v1h-1zM9 1.5h1v1h-1zM11 1.5h3v1h-3zM0 2.5h1v1h-1zM2 2.5h1v1h-1zM5 2.5h1v1h-1zM7 2.5h1v1h-1zM9 2.5h1v1h-1zM13 2.5h1v1h-1zM0 3.5h1v1h-1zM2 3.5h8v1h-8zM13 3.5h1v1h-1zM0 4.5h1v1h-1zM2 4.5h1v1h-1zM5 4.5h1v1h-1zM7 4.5h1v1h-1zM9 4.5h1v1h-1zM12 4.5h3v1h-3zM0 5.5h1v1h-1zM2 5.5h1v1h-1zM9 5.5h1v1h-1zM13 5.5h1v1h-1zM0 6.5h1v1h-1zM2 6.5h1v1h-1zM5 6.5h8v1h-8zM0 7.5h1v1h-1zM2 7.5h1v1h-1zM5 7.5h1v1h-1zM7 7.5h1v1h-1zM9 7.5h1v1h-1zM11 7.5h4v1h-4zM0 8.5h1v1h-1zM2 8.5h5v1h-5zM8 8.5h1v1h-1zM10 8.5h1v1h-1zM12 8.5h1v1h-1zM0 9.5h2v1h-2zM3 9.5h1v1h-1zM5 9.5h1v1h-1zM7 9.5h1v1h-1zM9 9.5h1v1h-1zM11 9.5h4v1h-4zM5 10.5h2v1h-2zM8 10.5h1v1h-1zM10 10.5h1v1h-1zM12 10.5h1v1h-1zM3 11.5h3v1h-3zM7 11.5h1v1h-1zM9 11.5h1v1h-1zM11 11.5h2v1h-2zM5 12.5h2v1h-2zM8 12.5h1v1h-1zM10 12.5h1v1h-1zM12 12.5h1v1h-1zM5 13.5h1v1h-1zM7 13.5h1v1h-1zM9 13.5h1v1h-1zM11 13.5h2v1h-2zM5 14.5h8v1h-8z"/><path fill="#fff" d="M6 7.5h1v1h-1zM8 7.5h1v1h-1zM10 7.5h1v1h-1zM7 8.5h1v1h-1zM9 8.5h1v1h-1zM11 8.5h1v1h-1zM6 9.5h1v1h-1zM8 9.5h1v1h-1zM10 9.5h1v1h-1zM7 10.5h1v1h-1zM9 10.5h1v1h-1zM11 10.5h1v1h-1zM6 11.5h1v1h-1zM8 11.5h1v1h-1zM10 11.5h1v1h-1zM7 12.5h1v1h-1zM9 12.5h1v1h-1zM11 12.5h1v1h-1zM6 13.5h1v1h-1zM8 13.5h1v1h-1zM10 13.5h1v1h-1z"/></svg>
<span class="t" style="left:688px;top:927px;color:#a0a0a0">功能块(梯形图)生成(<u>I</u>)</span>
<div class="a" style="left:644px;top:968px;width:396px;height:2px;background:#a0a0a0;"></div>
<div class="a" style="left:644px;top:970px;width:396px;height:2px;background:#fff;"></div>
<span class="t" style="left:688px;top:985px;color:#000">可重复使用文件(<u>F</u>)</span>
<svg class="a" style="left:1020px;top:988px" width="8" height="14" shape-rendering="crispEdges"><path d="M0 0h2v2h2v2h2v2h2v2h-2v2h-2v2h-2v2h-2z" fill="#000"/></svg>
<div class="a" style="left:644px;top:1026px;width:396px;height:2px;background:#a0a0a0;"></div>
<div class="a" style="left:644px;top:1028px;width:396px;height:2px;background:#fff;"></div>
<span class="t" style="left:688px;top:1043px;color:#000">显示条按照(<u>R</u>)</span>
<svg class="a" style="left:1020px;top:1046px" width="8" height="14" shape-rendering="crispEdges"><path d="M0 0h2v2h2v2h2v2h2v2h-2v2h-2v2h-2v2h-2z" fill="#000"/></svg>
<span class="t" style="left:688px;top:1083px;color:#000">只读模式编辑(<u>n</u>)</span>
<svg class="a" style="left:1020px;top:1086px" width="8" height="14" shape-rendering="crispEdges"><path d="M0 0h2v2h2v2h2v2h2v2h-2v2h-2v2h-2v2h-2z" fill="#000"/></svg>
<div class="a" style="left:644px;top:1124px;width:396px;height:2px;background:#a0a0a0;"></div>
<div class="a" style="left:644px;top:1126px;width:396px;height:2px;background:#fff;"></div>
<span class="t" style="left:688px;top:1141px;color:#000">在下面插入(<u>B</u>)</span>
<span class="t" style="left:688px;top:1181px;color:#000">在上面插入(<u>A</u>)</span>
<div class="a" style="left:644px;top:1222px;width:396px;height:2px;background:#a0a0a0;"></div>
<div class="a" style="left:644px;top:1224px;width:396px;height:2px;background:#fff;"></div>
<span class="t" style="left:688px;top:1239px;color:#000">合并(<u>M</u>)</span>
<div class="a" style="left:644px;top:1280px;width:396px;height:2px;background:#a0a0a0;"></div>
<div class="a" style="left:644px;top:1282px;width:396px;height:2px;background:#fff;"></div>
<svg class="a" style="left:648px;top:1295px" width="32" height="32" viewBox="0 0 16 16" shape-rendering="crispEdges"><path fill="#000" d="M5.5 2h6v1h-6zM4.5 3h1v1h-1zM6.5 3h1v1h-1zM11.5 3h1v1h-1zM3.5 4h1v1h-1zM5.5 4h1v1h-1zM7.5 4h1v1h-1zM-0.5 5h4v1h-4zM4.5 5h1v1h-1zM6.5 5h1v1h-1zM8.5 5h1v1h-1zM-0.5 6h1v1h-1zM2.5 6h1v1h-1zM4.5 6h1v1h-1zM6.5 6h1v1h-1zM8.5 6h2v1h-2zM11.5 6h1v1h-1zM-0.5 7h1v1h-1zM1.5 7h1v1h-1zM3.5 7h1v1h-1zM6.5 7h1v1h-1zM8.5 7h4v1h-4zM-0.5 8h1v1h-1zM2.5 8h1v1h-1zM7.5 8h3v1h-3zM-0.5 9h1v1h-1zM9.5 9h1v1h-1zM-0.5 10h1v1h-1zM9.5 10h1v1h-1zM-0.5 11h1v1h-1zM1.5 11h2v1h-2zM4.5 11h6v1h-6zM-0.5 12h1v1h-1zM9.5 12h1v1h-1zM-0.5 13h1v1h-1zM1.5 13h2v1h-2zM4.5 13h6v1h-6zM-0.5 14h1v1h-1zM9.5 14h1v1h-1zM-0.5 15h11v1h-11z"/><path fill="#000080" d="M12.5 2h2v1h-2zM12.5 3h2v1h-2zM12.5 4h2v1h-2zM12.5 5h2v1h-2zM12.5 6h2v1h-2zM13.5 7h1v1h-1z"/><path fill="#fff" d="M5.5 3h1v1h-1zM4.5 4h1v1h-1zM6.5 4h1v1h-1zM3.5 5h1v1h-1zM5.5 5h1v1h-1zM7.5 5h1v1h-1zM0.5 6h2v1h-2zM3.5 6h1v1h-1zM5.5 6h1v1h-1zM7.5 6h1v1h-1zM0.5 7h1v1h-1zM2.5 7h1v1h-1zM4.5 7h2v1h-2zM7.5 7h1v1h-1zM0.5 8h2v1h-2zM3.5 8h4v1h-4zM0.5 9h9v1h-9zM0.5 10h9v1h-9zM0.5 11h1v1h-1zM3.5 11h1v1h-1zM0.5 12h9v1h-9zM0.5 13h1v1h-1zM3.5 13h1v1h-1zM0.5 14h9v1h-9z"/></svg>
<span class="t" style="left:688px;top:1297px;color:#000">属性(<u>O</u>)</span>
</body></html>
